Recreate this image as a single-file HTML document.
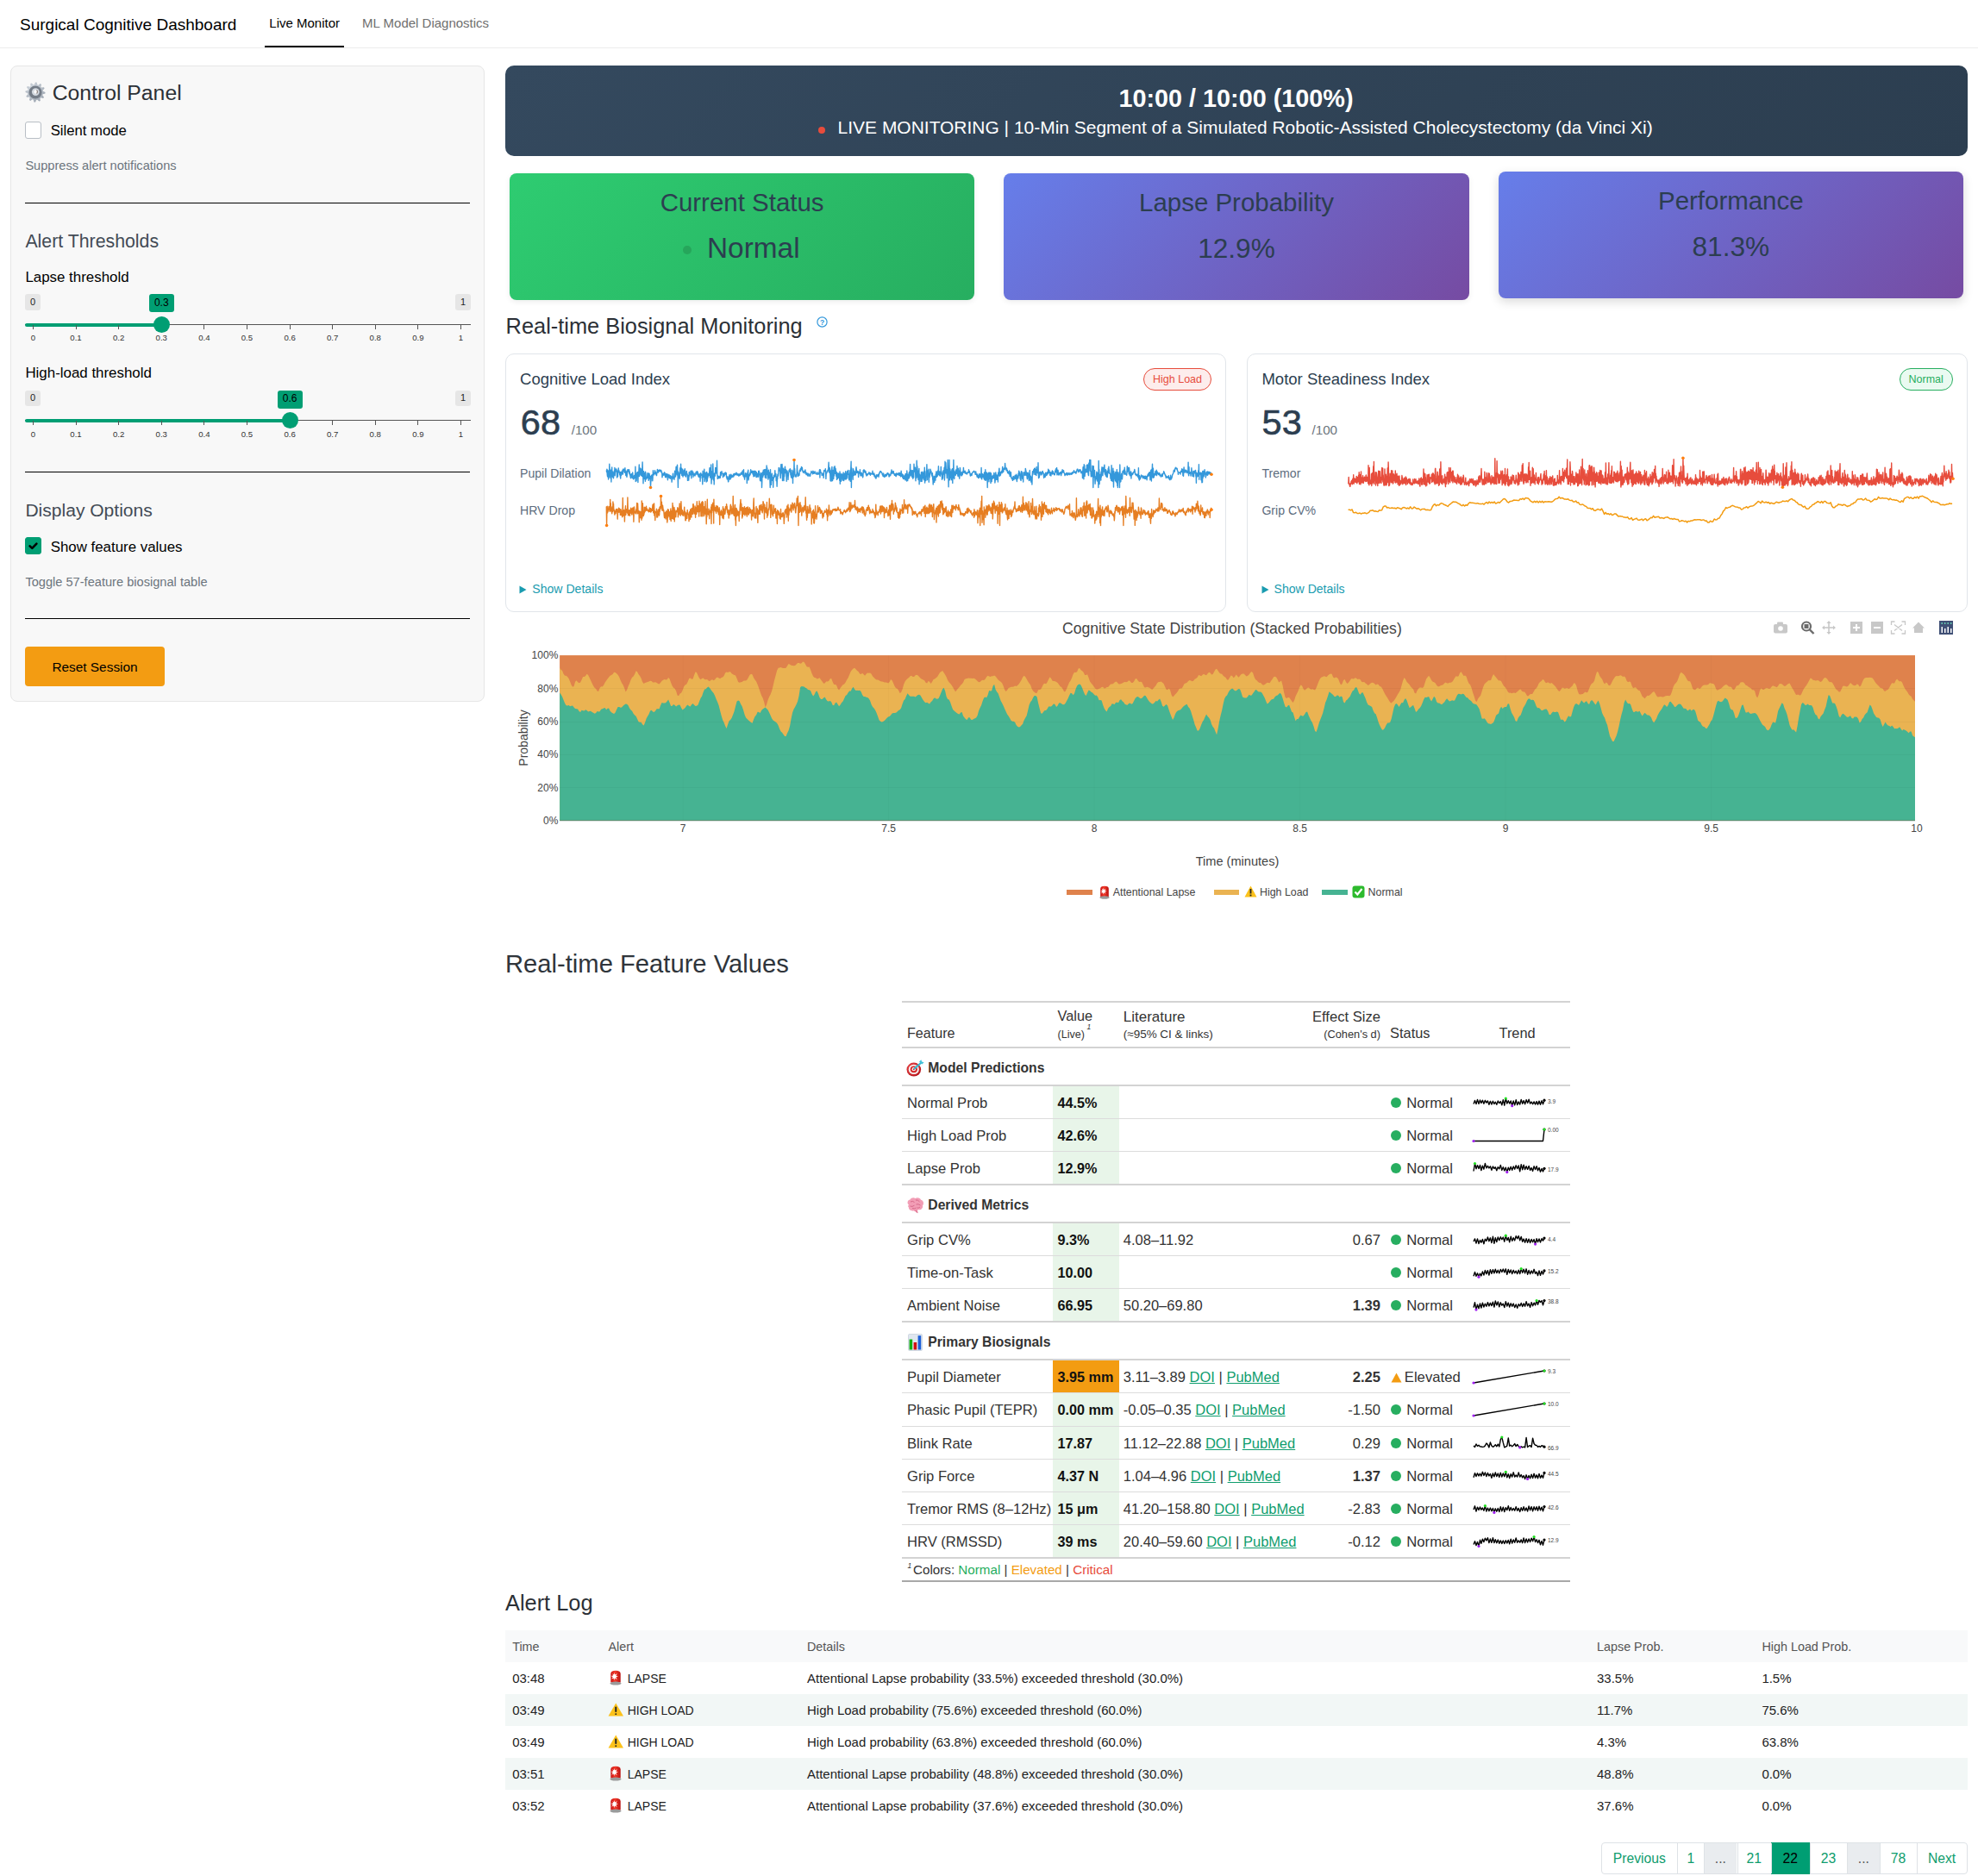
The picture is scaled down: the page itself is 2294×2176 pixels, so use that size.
<!DOCTYPE html><html><head><meta charset="utf-8"><title>Surgical Cognitive Dashboard</title>
<style>
html,body{margin:0;padding:0;background:#fff;}
body{width:2294px;height:2176px;position:relative;overflow:hidden;font-family:"Liberation Sans",sans-serif;}
.t{position:absolute;white-space:nowrap;line-height:1;}
.b{position:absolute;box-sizing:border-box;}
svg.b{overflow:visible;}
</style></head><body>
<div class="t" style="left:23.00px;top:19.00px;font-size:19px;color:#000;font-weight:400;">Surgical Cognitive Dashboard</div>
<div class="t" style="left:312.30px;top:19.00px;font-size:15px;color:#000;font-weight:400;">Live Monitor</div>
<div class="b" style="left:307.00px;top:53.00px;width:92.00px;height:2.00px;background:#000;"></div>
<div class="t" style="left:420.10px;top:19.00px;font-size:15px;color:#6f6f6f;font-weight:400;">ML Model Diagnostics</div>
<div class="b" style="left:0.00px;top:55.00px;width:2294.00px;height:1.00px;background:#ececec;"></div>
<div class="b" style="left:12.00px;top:76.00px;width:550.00px;height:738.00px;background:#f8f8f8;border:1px solid #e6e6e6;border-radius:8px;"></div>
<svg class="b" style="left:28.80px;top:95.00px;" width="24" height="24" viewBox="0 0 24 24"><defs><radialGradient id="gg" cx="40%" cy="35%" r="70%"><stop offset="0" stop-color="#dde3ea"/><stop offset="1" stop-color="#9aa3ae"/></radialGradient></defs><polygon points="23.50,12.00 23.40,13.50 20.69,14.33 20.31,15.44 21.96,17.75 21.12,19.00 18.36,18.36 17.48,19.14 17.75,21.96 16.40,22.62 14.33,20.69 13.17,20.92 12.00,23.50 10.50,23.40 9.67,20.69 8.56,20.31 6.25,21.96 5.00,21.12 5.64,18.36 4.86,17.48 2.04,17.75 1.38,16.40 3.31,14.33 3.08,13.17 0.50,12.00 0.60,10.50 3.31,9.67 3.69,8.56 2.04,6.25 2.88,5.00 5.64,5.64 6.52,4.86 6.25,2.04 7.60,1.38 9.67,3.31 10.83,3.08 12.00,0.50 13.50,0.60 14.33,3.31 15.44,3.69 17.75,2.04 19.00,2.88 18.36,5.64 19.14,6.52 21.96,6.25 22.62,7.60 20.69,9.67 20.92,10.83" fill="url(#gg)"/><circle cx="12" cy="12" r="7.6" fill="#747c87"/><circle cx="12.3" cy="11.6" r="4.4" fill="#d3d9e0"/><circle cx="12.5" cy="11.4" r="2.2" fill="#fafafa"/><path d="M13.8 9.5 q1.2 1.8 0 4" stroke="#5a4a44" stroke-width="0.9" fill="none"/></svg>
<div class="t" style="left:60.70px;top:96.00px;font-size:24.75px;color:#2b3036;font-weight:400;">Control Panel</div>
<div class="b" style="left:29.00px;top:141.00px;width:19.00px;height:20.00px;background:#fff;border:1px solid #b8bec5;border-radius:3px;"></div>
<div class="t" style="left:58.70px;top:144.00px;font-size:16.7px;color:#000;font-weight:400;">Silent mode</div>
<div class="t" style="left:29.40px;top:185.00px;font-size:14.6px;color:#6c757d;font-weight:400;">Suppress alert notifications</div>
<div class="b" style="left:29.00px;top:235.00px;width:516.00px;height:1.00px;background:#000;"></div>
<div class="t" style="left:29.40px;top:270.00px;font-size:21.3px;color:#434b55;font-weight:400;">Alert Thresholds</div>
<div class="t" style="left:29.40px;top:314.00px;font-size:16.9px;color:#000;font-weight:400;">Lapse threshold</div>
<div class="b" style="left:29.00px;top:341.20px;width:18.00px;height:18.60px;background:#e6e6e6;border-radius:3px;"></div>
<div class="t" style="left:-962.00px;width:2000px;text-align:center;top:345.00px;font-size:11px;color:#222;font-weight:400;">0</div>
<div class="b" style="left:528.00px;top:341.20px;width:17.50px;height:18.60px;background:#e6e6e6;border-radius:3px;"></div>
<div class="t" style="left:-463.00px;width:2000px;text-align:center;top:345.00px;font-size:11px;color:#222;font-weight:400;">1</div>
<div class="b" style="left:29.00px;top:376.00px;width:516.50px;height:1.00px;background:#555;"></div>
<div class="b" style="left:29.00px;top:374.80px;width:158.23px;height:3.80px;background:#009e73;border-radius:2px;"></div>
<div class="b" style="left:38.00px;top:377.00px;width:1.00px;height:5.00px;background:#555;"></div>
<div class="t" style="left:-961.60px;width:2000px;text-align:center;top:387.00px;font-size:9.6px;color:#333;font-weight:400;">0</div>
<div class="b" style="left:88.00px;top:377.00px;width:1.00px;height:5.00px;background:#555;"></div>
<div class="t" style="left:-911.99px;width:2000px;text-align:center;top:387.00px;font-size:9.6px;color:#333;font-weight:400;">0.1</div>
<div class="b" style="left:137.00px;top:377.00px;width:1.00px;height:5.00px;background:#555;"></div>
<div class="t" style="left:-862.38px;width:2000px;text-align:center;top:387.00px;font-size:9.6px;color:#333;font-weight:400;">0.2</div>
<div class="b" style="left:187.00px;top:377.00px;width:1.00px;height:5.00px;background:#555;"></div>
<div class="t" style="left:-812.77px;width:2000px;text-align:center;top:387.00px;font-size:9.6px;color:#333;font-weight:400;">0.3</div>
<div class="b" style="left:236.00px;top:377.00px;width:1.00px;height:5.00px;background:#555;"></div>
<div class="t" style="left:-763.16px;width:2000px;text-align:center;top:387.00px;font-size:9.6px;color:#333;font-weight:400;">0.4</div>
<div class="b" style="left:286.00px;top:377.00px;width:1.00px;height:5.00px;background:#555;"></div>
<div class="t" style="left:-713.55px;width:2000px;text-align:center;top:387.00px;font-size:9.6px;color:#333;font-weight:400;">0.5</div>
<div class="b" style="left:336.00px;top:377.00px;width:1.00px;height:5.00px;background:#555;"></div>
<div class="t" style="left:-663.94px;width:2000px;text-align:center;top:387.00px;font-size:9.6px;color:#333;font-weight:400;">0.6</div>
<div class="b" style="left:385.00px;top:377.00px;width:1.00px;height:5.00px;background:#555;"></div>
<div class="t" style="left:-614.33px;width:2000px;text-align:center;top:387.00px;font-size:9.6px;color:#333;font-weight:400;">0.7</div>
<div class="b" style="left:435.00px;top:377.00px;width:1.00px;height:5.00px;background:#555;"></div>
<div class="t" style="left:-564.72px;width:2000px;text-align:center;top:387.00px;font-size:9.6px;color:#333;font-weight:400;">0.8</div>
<div class="b" style="left:484.00px;top:377.00px;width:1.00px;height:5.00px;background:#555;"></div>
<div class="t" style="left:-515.11px;width:2000px;text-align:center;top:387.00px;font-size:9.6px;color:#333;font-weight:400;">0.9</div>
<div class="b" style="left:534.00px;top:377.00px;width:1.00px;height:5.00px;background:#555;"></div>
<div class="t" style="left:-465.50px;width:2000px;text-align:center;top:387.00px;font-size:9.6px;color:#333;font-weight:400;">1</div>
<div class="b" style="left:177.73px;top:366.90px;width:19px;height:19px;border-radius:50%;background:#009e73;"></div>
<div class="b" style="left:172.73px;top:341.20px;width:29.00px;height:21.00px;background:#009e73;border-radius:3px;"></div>
<div class="t" style="left:-812.77px;width:2000px;text-align:center;top:345.00px;font-size:12px;color:#000;font-weight:400;">0.3</div>
<div class="t" style="left:29.40px;top:425.00px;font-size:16.9px;color:#000;font-weight:400;">High-load threshold</div>
<div class="b" style="left:29.00px;top:452.50px;width:18.00px;height:18.60px;background:#e6e6e6;border-radius:3px;"></div>
<div class="t" style="left:-962.00px;width:2000px;text-align:center;top:456.00px;font-size:11px;color:#222;font-weight:400;">0</div>
<div class="b" style="left:528.00px;top:452.50px;width:17.50px;height:18.60px;background:#e6e6e6;border-radius:3px;"></div>
<div class="t" style="left:-463.00px;width:2000px;text-align:center;top:456.00px;font-size:11px;color:#222;font-weight:400;">1</div>
<div class="b" style="left:29.00px;top:487.00px;width:516.50px;height:1.00px;background:#555;"></div>
<div class="b" style="left:29.00px;top:486.10px;width:307.06px;height:3.80px;background:#009e73;border-radius:2px;"></div>
<div class="b" style="left:38.00px;top:488.00px;width:1.00px;height:5.00px;background:#555;"></div>
<div class="t" style="left:-961.60px;width:2000px;text-align:center;top:499.00px;font-size:9.6px;color:#333;font-weight:400;">0</div>
<div class="b" style="left:88.00px;top:488.00px;width:1.00px;height:5.00px;background:#555;"></div>
<div class="t" style="left:-911.99px;width:2000px;text-align:center;top:499.00px;font-size:9.6px;color:#333;font-weight:400;">0.1</div>
<div class="b" style="left:137.00px;top:488.00px;width:1.00px;height:5.00px;background:#555;"></div>
<div class="t" style="left:-862.38px;width:2000px;text-align:center;top:499.00px;font-size:9.6px;color:#333;font-weight:400;">0.2</div>
<div class="b" style="left:187.00px;top:488.00px;width:1.00px;height:5.00px;background:#555;"></div>
<div class="t" style="left:-812.77px;width:2000px;text-align:center;top:499.00px;font-size:9.6px;color:#333;font-weight:400;">0.3</div>
<div class="b" style="left:236.00px;top:488.00px;width:1.00px;height:5.00px;background:#555;"></div>
<div class="t" style="left:-763.16px;width:2000px;text-align:center;top:499.00px;font-size:9.6px;color:#333;font-weight:400;">0.4</div>
<div class="b" style="left:286.00px;top:488.00px;width:1.00px;height:5.00px;background:#555;"></div>
<div class="t" style="left:-713.55px;width:2000px;text-align:center;top:499.00px;font-size:9.6px;color:#333;font-weight:400;">0.5</div>
<div class="b" style="left:336.00px;top:488.00px;width:1.00px;height:5.00px;background:#555;"></div>
<div class="t" style="left:-663.94px;width:2000px;text-align:center;top:499.00px;font-size:9.6px;color:#333;font-weight:400;">0.6</div>
<div class="b" style="left:385.00px;top:488.00px;width:1.00px;height:5.00px;background:#555;"></div>
<div class="t" style="left:-614.33px;width:2000px;text-align:center;top:499.00px;font-size:9.6px;color:#333;font-weight:400;">0.7</div>
<div class="b" style="left:435.00px;top:488.00px;width:1.00px;height:5.00px;background:#555;"></div>
<div class="t" style="left:-564.72px;width:2000px;text-align:center;top:499.00px;font-size:9.6px;color:#333;font-weight:400;">0.8</div>
<div class="b" style="left:484.00px;top:488.00px;width:1.00px;height:5.00px;background:#555;"></div>
<div class="t" style="left:-515.11px;width:2000px;text-align:center;top:499.00px;font-size:9.6px;color:#333;font-weight:400;">0.9</div>
<div class="b" style="left:534.00px;top:488.00px;width:1.00px;height:5.00px;background:#555;"></div>
<div class="t" style="left:-465.50px;width:2000px;text-align:center;top:499.00px;font-size:9.6px;color:#333;font-weight:400;">1</div>
<div class="b" style="left:326.56px;top:478.20px;width:19px;height:19px;border-radius:50%;background:#009e73;"></div>
<div class="b" style="left:321.56px;top:452.50px;width:29.00px;height:21.00px;background:#009e73;border-radius:3px;"></div>
<div class="t" style="left:-663.94px;width:2000px;text-align:center;top:456.00px;font-size:12px;color:#000;font-weight:400;">0.6</div>
<div class="b" style="left:29.00px;top:547.00px;width:516.00px;height:1.00px;background:#000;"></div>
<div class="t" style="left:29.40px;top:581.00px;font-size:21.05px;color:#434b55;font-weight:400;">Display Options</div>
<div class="b" style="left:29.00px;top:623.00px;width:19.00px;height:20.00px;background:#009e73;border:1px solid #009e73;border-radius:3px;"></div>
<svg class="b" style="left:29.00px;top:623.00px;" width="19" height="20" viewBox="0 0 19 20"><path d="M5.6 10.4 L8.3 12.9 L13.4 7.6" fill="none" stroke="#000" stroke-width="2.6" stroke-linecap="round" stroke-linejoin="round"/></svg>
<div class="t" style="left:58.70px;top:627.00px;font-size:16.87px;color:#000;font-weight:400;">Show feature values</div>
<div class="t" style="left:29.40px;top:668.00px;font-size:14.62px;color:#6c757d;font-weight:400;">Toggle 57-feature biosignal table</div>
<div class="b" style="left:29.00px;top:717.00px;width:516.00px;height:1.00px;background:#000;"></div>
<div class="b" style="left:29.00px;top:750.30px;width:161.80px;height:46.10px;background:#f39c12;border-radius:4px;"></div>
<div class="t" style="left:-890.00px;width:2000px;text-align:center;top:766.00px;font-size:15.4px;color:#000;font-weight:400;">Reset Session</div>
<div class="b" style="left:586.00px;top:76.00px;width:1696.00px;height:105.00px;background:linear-gradient(135deg,#34495e 0%,#2c3e50 100%);border-radius:10px;"></div>
<div class="t" style="left:433.50px;width:2000px;text-align:center;top:100.00px;font-size:28.8px;color:#fff;font-weight:700;">10:00 / 10:00 (100%)</div>
<div class="b" style="left:949px;top:147px;width:8px;height:8px;border-radius:50%;background:#e74c3c;"></div>
<div class="t" style="left:971.60px;top:138.00px;font-size:20.97px;color:#fff;font-weight:400;">LIVE MONITORING | 10-Min Segment of a Simulated Robotic-Assisted Cholecystectomy (da Vinci Xi)</div>
<div class="b" style="left:591.00px;top:201.00px;width:539.30px;height:147.00px;background:linear-gradient(135deg,#2ecc71 0%,#27ae60 100%);border-radius:8px;box-shadow:0 2px 6px rgba(0,0,0,.08);"></div>
<div class="b" style="left:1164.30px;top:201.00px;width:539.40px;height:147.00px;background:linear-gradient(135deg,#667eea 0%,#764ba2 100%);border-radius:8px;box-shadow:0 2px 6px rgba(0,0,0,.08);"></div>
<div class="b" style="left:1737.70px;top:199.00px;width:539.30px;height:147.00px;background:linear-gradient(135deg,#667eea 0%,#764ba2 100%);border-radius:8px;box-shadow:0 4px 12px rgba(0,0,0,.15);"></div>
<div class="t" style="left:-139.40px;width:2000px;text-align:center;top:220.00px;font-size:29.46px;color:#2c3e50;font-weight:400;">Current Status</div>
<div class="b" style="left:792px;top:285px;width:9.8px;height:9.8px;border-radius:50%;background:#26a65b;"></div>
<div class="t" style="left:820.00px;top:271.00px;font-size:33.4px;color:#2c3e50;font-weight:400;">Normal</div>
<div class="t" style="left:434.00px;width:2000px;text-align:center;top:220.00px;font-size:29.46px;color:#2c3e50;font-weight:400;">Lapse Probability</div>
<div class="t" style="left:434.00px;width:2000px;text-align:center;top:273.00px;font-size:31.6px;color:#2c3e50;font-weight:400;">12.9%</div>
<div class="t" style="left:1007.30px;width:2000px;text-align:center;top:218.00px;font-size:29.46px;color:#2c3e50;font-weight:400;">Performance</div>
<div class="t" style="left:1007.30px;width:2000px;text-align:center;top:271.00px;font-size:31.6px;color:#2c3e50;font-weight:400;">81.3%</div>
<div class="t" style="left:586.60px;top:366.00px;font-size:25.39px;color:#2b3036;font-weight:400;">Real-time Biosignal Monitoring</div>
<svg class="b" style="left:946.50px;top:366.80px;" width="13" height="13" viewBox="0 0 13 13"><circle cx="6.5" cy="6.5" r="5.6" fill="none" stroke="#3498db" stroke-width="1.2"/><text x="6.5" y="9.6" font-size="8.5" text-anchor="middle" fill="#3498db" font-family="Liberation Sans" font-weight="700">?</text></svg>
<div class="b" style="left:586.00px;top:410.00px;width:836.00px;height:300.00px;background:#fff;border:1px solid #e1e5ea;border-radius:10px;"></div>
<div class="t" style="left:603.00px;top:431.00px;font-size:18.55px;color:#2c3e50;font-weight:400;">Cognitive Load Index</div>
<div class="b" style="left:1326.00px;top:427.00px;width:79.00px;height:26.00px;background:#fdedec;border:1px solid #e74c3c;border-radius:13px;"></div>
<div class="t" style="left:365.50px;width:2000px;text-align:center;top:434.00px;font-size:12.53px;color:#e74c3c;font-weight:400;">High Load</div>
<div class="t" style="left:603.80px;top:469.00px;font-size:41.5px;color:#2c3e50;font-weight:400;-webkit-text-stroke:0.6px #2c3e50;">68</div>
<div class="t" style="left:662.70px;top:491.00px;font-size:15.2px;color:#6c757d;font-weight:400;">/100</div>
<div class="t" style="left:603.00px;top:542.00px;font-size:14.12px;color:#5d6d7e;font-weight:400;">Pupil Dilation</div>
<div class="t" style="left:603.00px;top:585.00px;font-size:14.12px;color:#5d6d7e;font-weight:400;">HRV Drop</div>
<svg class="b" style="left:0.00px;top:0.00px;" width="1" height="1" viewBox="0 0 1 1"><path d="M703.0,546.3 L703.3,546.0 L703.6,547.3 L703.9,544.1 L704.2,549.7 L704.5,552.5 L704.8,545.5 L705.0,553.2 L705.3,546.6 L705.6,556.0 L705.9,546.3 L706.2,554.0 L706.5,551.2 L706.8,538.2 L707.1,545.8 L707.4,550.3 L707.7,551.9 L708.0,554.5 L708.3,545.3 L708.6,548.4 L708.9,559.0 L709.1,549.2 L709.4,544.8 L709.7,542.0 L710.0,550.9 L710.3,553.0 L710.6,547.1 L710.9,553.7 L711.2,551.9 L711.5,554.8 L711.8,551.3 L712.1,547.8 L712.4,546.0 L712.7,550.6 L712.9,542.5 L713.2,551.8 L713.5,544.2 L713.8,547.1 L714.1,544.3 L714.4,545.8 L714.7,543.9 L715.0,544.8 L715.3,548.5 L715.6,554.0 L715.9,549.3 L716.2,546.1 L716.5,552.8 L716.8,546.9 L717.0,546.2 L717.3,542.9 L717.6,547.9 L717.9,545.6 L718.2,547.8 L718.5,548.0 L718.8,550.9 L719.1,547.8 L719.4,553.0 L719.7,555.0 L720.0,549.7 L720.3,547.1 L720.6,551.3 L720.8,547.5 L721.1,550.0 L721.4,549.3 L721.7,548.0 L722.0,545.1 L722.3,550.1 L722.6,548.8 L722.9,544.0 L723.2,544.4 L723.5,546.4 L723.8,544.9 L724.1,546.9 L724.4,544.0 L724.7,548.4 L724.9,542.7 L725.2,548.5 L725.5,546.3 L725.8,551.5 L726.1,546.3 L726.4,548.6 L726.7,551.9 L727.0,553.3 L727.3,550.4 L727.6,547.6 L727.9,544.6 L728.2,545.2 L728.5,546.8 L728.8,547.1 L729.0,546.0 L729.3,544.6 L729.6,544.9 L729.9,549.6 L730.2,546.9 L730.5,551.0 L730.8,549.8 L731.1,553.0 L731.4,554.3 L731.7,554.7 L732.0,552.7 L732.3,549.6 L732.6,552.4 L732.8,549.7 L733.1,552.0 L733.4,554.5 L733.7,548.0 L734.0,553.8 L734.3,552.2 L734.6,555.9 L734.9,552.3 L735.2,555.2 L735.5,551.6 L735.8,554.7 L736.1,553.5 L736.4,550.8 L736.7,549.0 L736.9,541.2 L737.2,558.5 L737.5,555.0 L737.8,550.5 L738.1,557.8 L738.4,551.9 L738.7,548.2 L739.0,550.1 L739.3,548.7 L739.6,547.5 L739.9,559.6 L740.2,549.3 L740.5,552.2 L740.7,549.5 L741.0,544.5 L741.3,538.9 L741.6,552.6 L741.9,543.7 L742.2,542.9 L742.5,550.1 L742.8,543.7 L743.1,543.5 L743.4,551.2 L743.7,544.6 L744.0,547.4 L744.3,545.4 L744.6,552.6 L744.8,546.5 L745.1,535.9 L745.4,546.3 L745.7,546.2 L746.0,560.8 L746.3,549.3 L746.6,546.6 L746.9,552.9 L747.2,552.0 L747.5,555.5 L747.8,548.6 L748.1,550.6 L748.4,558.3 L748.6,547.3 L748.9,549.2 L749.2,553.6 L749.5,555.8 L749.8,553.7 L750.1,554.1 L750.4,554.5 L750.7,552.6 L751.0,549.0 L751.3,554.2 L751.6,548.6 L751.9,550.8 L752.2,557.3 L752.5,555.2 L752.7,550.0 L753.0,549.2 L753.3,551.7 L753.6,555.3 L753.9,556.0 L754.2,552.4 L754.5,565.5 L754.8,558.6 L755.1,557.7 L755.4,551.5 L755.7,553.2 L756.0,551.4 L756.3,550.8 L756.5,551.3 L756.8,557.8 L757.1,553.6 L757.4,545.8 L757.7,550.5 L758.0,549.8 L758.3,548.8 L758.6,550.8 L758.9,548.7 L759.2,547.7 L759.5,545.7 L759.8,547.2 L760.1,549.3 L760.4,549.1 L760.6,547.6 L760.9,550.6 L761.2,549.1 L761.5,551.6 L761.8,548.8 L762.1,547.9 L762.4,544.5 L762.7,545.6 L763.0,545.3 L763.3,548.1 L763.6,547.5 L763.9,546.6 L764.2,545.4 L764.5,545.5 L764.7,544.9 L765.0,545.5 L765.3,546.9 L765.6,545.5 L765.9,545.6 L766.2,545.3 L766.5,546.8 L766.8,545.6 L767.1,546.7 L767.4,548.6 L767.7,547.9 L768.0,553.7 L768.3,551.0 L768.5,550.7 L768.8,551.7 L769.1,549.4 L769.4,549.5 L769.7,549.7 L770.0,551.1 L770.3,548.4 L770.6,547.8 L770.9,549.8 L771.2,548.7 L771.5,553.2 L771.8,550.8 L772.1,552.5 L772.4,553.8 L772.6,551.4 L772.9,549.4 L773.2,552.8 L773.5,549.8 L773.8,550.9 L774.1,551.9 L774.4,556.8 L774.7,554.0 L775.0,550.3 L775.3,553.9 L775.6,553.8 L775.9,553.5 L776.2,550.9 L776.4,554.3 L776.7,552.8 L777.0,552.1 L777.3,555.3 L777.6,551.6 L777.9,552.2 L778.2,554.5 L778.5,554.8 L778.8,552.9 L779.1,559.1 L779.4,556.3 L779.7,552.7 L780.0,555.8 L780.3,550.9 L780.5,549.1 L780.8,554.6 L781.1,554.3 L781.4,553.1 L781.7,553.4 L782.0,556.3 L782.3,553.0 L782.6,546.2 L782.9,550.8 L783.2,547.1 L783.5,553.0 L783.8,547.9 L784.1,541.4 L784.3,544.5 L784.6,541.4 L784.9,547.0 L785.2,550.9 L785.5,539.2 L785.8,545.6 L786.1,552.0 L786.4,565.4 L786.7,547.3 L787.0,553.6 L787.3,550.2 L787.6,549.5 L787.9,548.6 L788.2,555.2 L788.4,551.2 L788.7,543.0 L789.0,543.6 L789.3,546.4 L789.6,538.1 L789.9,549.0 L790.2,549.6 L790.5,543.1 L790.8,551.6 L791.1,549.0 L791.4,545.0 L791.7,544.2 L792.0,553.1 L792.2,548.0 L792.5,546.4 L792.8,551.5 L793.1,549.8 L793.4,545.5 L793.7,551.0 L794.0,550.5 L794.3,543.7 L794.6,546.9 L794.9,552.2 L795.2,552.8 L795.5,553.0 L795.8,549.0 L796.1,548.8 L796.3,546.4 L796.6,550.3 L796.9,549.5 L797.2,551.0 L797.5,557.4 L797.8,551.2 L798.1,551.6 L798.4,555.1 L798.7,557.1 L799.0,553.3 L799.3,547.5 L799.6,552.1 L799.9,549.5 L800.2,551.0 L800.4,549.9 L800.7,550.3 L801.0,546.3 L801.3,548.7 L801.6,549.3 L801.9,554.8 L802.2,548.5 L802.5,545.9 L802.8,548.6 L803.1,547.4 L803.4,550.4 L803.7,547.2 L804.0,553.2 L804.2,550.5 L804.5,551.5 L804.8,551.3 L805.1,549.2 L805.4,551.5 L805.7,551.5 L806.0,552.0 L806.3,550.5 L806.6,549.4 L806.9,549.1 L807.2,547.5 L807.5,548.1 L807.8,548.3 L808.1,550.6 L808.3,546.8 L808.6,548.5 L808.9,547.0 L809.2,547.8 L809.5,548.7 L809.8,551.4 L810.1,552.9 L810.4,552.0 L810.7,553.4 L811.0,549.9 L811.3,552.7 L811.6,550.1 L811.9,551.1 L812.1,558.2 L812.4,549.8 L812.7,548.7 L813.0,549.3 L813.3,550.7 L813.6,551.6 L813.9,550.7 L814.2,554.7 L814.5,550.2 L814.8,561.8 L815.1,546.2 L815.4,551.7 L815.7,553.4 L816.0,548.9 L816.2,550.6 L816.5,553.2 L816.8,544.3 L817.1,558.5 L817.4,556.6 L817.7,553.5 L818.0,548.2 L818.3,553.9 L818.6,551.8 L818.9,552.7 L819.2,559.0 L819.5,547.4 L819.8,547.7 L820.0,551.6 L820.3,558.0 L820.6,550.3 L820.9,554.3 L821.2,549.3 L821.5,552.1 L821.8,550.4 L822.1,550.9 L822.4,551.5 L822.7,547.7 L823.0,542.7 L823.3,542.9 L823.6,554.1 L823.9,551.3 L824.1,551.9 L824.4,544.1 L824.7,538.9 L825.0,561.1 L825.3,553.9 L825.6,549.7 L825.9,556.0 L826.2,546.5 L826.5,550.8 L826.8,537.9 L827.1,547.2 L827.4,554.4 L827.7,557.3 L827.9,549.8 L828.2,561.9 L828.5,549.5 L828.8,548.9 L829.1,551.9 L829.4,552.1 L829.7,542.5 L830.0,549.5 L830.3,549.0 L830.6,546.8 L830.9,542.4 L831.2,547.5 L831.5,534.2 L831.8,550.7 L832.0,552.0 L832.3,555.4 L832.6,552.0 L832.9,553.9 L833.2,552.4 L833.5,554.6 L833.8,552.7 L834.1,554.6 L834.4,552.4 L834.7,553.9 L835.0,553.3 L835.3,554.2 L835.6,547.6 L835.9,548.9 L836.1,551.5 L836.4,550.2 L836.7,548.8 L837.0,546.6 L837.3,548.2 L837.6,549.0 L837.9,549.2 L838.2,550.1 L838.5,553.6 L838.8,549.9 L839.1,549.8 L839.4,549.1 L839.7,550.1 L839.9,552.2 L840.2,550.2 L840.5,551.1 L840.8,548.5 L841.1,548.4 L841.4,548.1 L841.7,548.8 L842.0,550.5 L842.3,548.7 L842.6,553.8 L842.9,552.9 L843.2,555.8 L843.5,553.0 L843.8,555.1 L844.0,554.6 L844.3,555.6 L844.6,558.9 L844.9,558.4 L845.2,552.5 L845.5,554.8 L845.8,552.5 L846.1,550.5 L846.4,555.7 L846.7,556.2 L847.0,551.7 L847.3,555.1 L847.6,552.6 L847.8,550.2 L848.1,552.6 L848.4,553.8 L848.7,551.4 L849.0,552.5 L849.3,552.5 L849.6,552.0 L849.9,553.4 L850.2,552.4 L850.5,549.9 L850.8,552.9 L851.1,550.9 L851.4,550.7 L851.7,549.4 L851.9,550.7 L852.2,551.0 L852.5,549.3 L852.8,550.7 L853.1,549.9 L853.4,549.1 L853.7,550.2 L854.0,548.1 L854.3,550.1 L854.6,548.9 L854.9,551.2 L855.2,549.8 L855.5,550.7 L855.7,550.4 L856.0,549.9 L856.3,551.4 L856.6,552.0 L856.9,551.4 L857.2,549.8 L857.5,551.7 L857.8,550.6 L858.1,551.2 L858.4,551.2 L858.7,550.4 L859.0,549.3 L859.3,548.6 L859.6,549.4 L859.8,548.3 L860.1,550.5 L860.4,548.6 L860.7,548.8 L861.0,546.8 L861.3,545.9 L861.6,550.2 L861.9,551.5 L862.2,552.6 L862.5,544.7 L862.8,552.2 L863.1,554.0 L863.4,552.4 L863.6,556.1 L863.9,551.9 L864.2,551.0 L864.5,548.7 L864.8,552.9 L865.1,551.1 L865.4,549.9 L865.7,549.2 L866.0,549.8 L866.3,560.5 L866.6,553.5 L866.9,550.7 L867.2,547.0 L867.5,550.1 L867.7,545.2 L868.0,556.9 L868.3,555.4 L868.6,550.9 L868.9,551.6 L869.2,550.1 L869.5,551.8 L869.8,548.6 L870.1,550.5 L870.4,547.9 L870.7,544.7 L871.0,548.5 L871.3,547.4 L871.6,546.6 L871.8,546.5 L872.1,548.5 L872.4,547.9 L872.7,546.2 L873.0,548.9 L873.3,550.3 L873.6,546.8 L873.9,552.8 L874.2,551.6 L874.5,550.8 L874.8,546.1 L875.1,547.6 L875.4,552.3 L875.6,547.3 L875.9,546.4 L876.2,546.6 L876.5,550.3 L876.8,550.1 L877.1,553.5 L877.4,547.7 L877.7,550.5 L878.0,553.4 L878.3,551.0 L878.6,551.4 L878.9,549.3 L879.2,552.0 L879.5,553.0 L879.7,546.5 L880.0,548.9 L880.3,546.1 L880.6,550.6 L880.9,548.2 L881.2,552.5 L881.5,557.2 L881.8,550.7 L882.1,557.9 L882.4,554.7 L882.7,548.7 L883.0,551.5 L883.3,551.4 L883.5,565.5 L883.8,557.6 L884.1,549.1 L884.4,547.8 L884.7,553.3 L885.0,551.1 L885.3,545.1 L885.6,551.0 L885.9,546.8 L886.2,550.3 L886.5,544.6 L886.8,547.7 L887.1,549.7 L887.4,554.0 L887.6,544.5 L887.9,554.1 L888.2,548.1 L888.5,550.1 L888.8,554.8 L889.1,540.0 L889.4,545.8 L889.7,542.6 L890.0,550.6 L890.3,546.2 L890.6,550.3 L890.9,556.1 L891.2,548.4 L891.4,545.1 L891.7,554.3 L892.0,547.6 L892.3,554.1 L892.6,552.3 L892.9,554.5 L893.2,565.5 L893.5,544.8 L893.8,555.2 L894.1,554.0 L894.4,562.4 L894.7,551.9 L895.0,551.6 L895.3,549.1 L895.5,552.6 L895.8,557.4 L896.1,555.5 L896.4,553.6 L896.7,565.3 L897.0,554.0 L897.3,555.3 L897.6,551.2 L897.9,552.0 L898.2,553.2 L898.5,552.6 L898.8,545.6 L899.1,551.3 L899.3,551.5 L899.6,552.1 L899.9,549.7 L900.2,557.6 L900.5,557.7 L900.8,553.3 L901.1,564.3 L901.4,555.2 L901.7,555.6 L902.0,550.2 L902.3,550.3 L902.6,552.0 L902.9,546.7 L903.2,542.5 L903.4,544.2 L903.7,542.8 L904.0,542.9 L904.3,546.3 L904.6,545.4 L904.9,549.8 L905.2,554.6 L905.5,550.6 L905.8,538.7 L906.1,545.1 L906.4,548.8 L906.7,541.7 L907.0,538.5 L907.3,544.3 L907.5,557.6 L907.8,547.6 L908.1,555.1 L908.4,543.2 L908.7,554.0 L909.0,557.6 L909.3,544.6 L909.6,552.8 L909.9,548.8 L910.2,542.8 L910.5,541.2 L910.8,548.5 L911.1,546.9 L911.3,544.5 L911.6,545.3 L911.9,549.2 L912.2,558.2 L912.5,546.8 L912.8,546.1 L913.1,546.8 L913.4,550.6 L913.7,551.0 L914.0,556.4 L914.3,551.3 L914.6,548.4 L914.9,547.4 L915.2,545.3 L915.4,547.0 L915.7,547.1 L916.0,544.9 L916.3,543.7 L916.6,544.4 L916.9,551.0 L917.2,545.5 L917.5,553.8 L917.8,549.7 L918.1,549.0 L918.4,548.9 L918.7,554.6 L919.0,545.3 L919.2,548.8 L919.5,560.5 L919.8,546.9 L920.1,551.7 L920.4,553.0 L920.7,552.8 L921.0,533.5 L921.3,548.1 L921.6,543.6 L921.9,550.4 L922.2,550.9 L922.5,552.8 L922.8,551.6 L923.1,552.2 L923.3,553.0 L923.6,550.3 L923.9,552.2 L924.2,547.6 L924.5,539.6 L924.8,548.4 L925.1,547.3 L925.4,549.1 L925.7,552.5 L926.0,550.1 L926.3,550.7 L926.6,549.5 L926.9,551.4 L927.1,550.0 L927.4,545.5 L927.7,547.0 L928.0,544.9 L928.3,543.6 L928.6,546.3 L928.9,545.0 L929.2,543.2 L929.5,541.4 L929.8,543.2 L930.1,544.4 L930.4,542.4 L930.7,546.3 L931.0,545.9 L931.2,546.9 L931.5,548.2 L931.8,547.3 L932.1,547.0 L932.4,547.1 L932.7,546.5 L933.0,547.1 L933.3,549.0 L933.6,546.7 L933.9,544.9 L934.2,548.1 L934.5,547.5 L934.8,548.4 L935.0,550.5 L935.3,548.5 L935.6,548.7 L935.9,550.5 L936.2,549.0 L936.5,551.4 L936.8,550.6 L937.1,552.2 L937.4,550.0 L937.7,549.2 L938.0,550.5 L938.3,551.1 L938.6,550.9 L938.9,550.9 L939.1,552.3 L939.4,550.5 L939.7,552.0 L940.0,549.1 L940.3,549.0 L940.6,548.2 L940.9,546.5 L941.2,548.0 L941.5,547.6 L941.8,547.7 L942.1,548.6 L942.4,549.8 L942.7,548.2 L942.9,546.3 L943.2,546.9 L943.5,548.1 L943.8,549.3 L944.1,548.8 L944.4,547.3 L944.7,548.3 L945.0,548.9 L945.3,547.0 L945.6,548.8 L945.9,548.8 L946.2,549.5 L946.5,549.7 L946.8,549.8 L947.0,550.2 L947.3,549.8 L947.6,547.8 L947.9,549.9 L948.2,549.9 L948.5,549.1 L948.8,550.2 L949.1,549.4 L949.4,549.9 L949.7,548.3 L950.0,548.0 L950.3,546.2 L950.6,544.6 L950.9,554.1 L951.1,545.1 L951.4,545.0 L951.7,546.7 L952.0,547.8 L952.3,548.3 L952.6,548.4 L952.9,548.5 L953.2,551.5 L953.5,551.2 L953.8,550.4 L954.1,551.0 L954.4,549.4 L954.7,549.9 L954.9,548.8 L955.2,554.4 L955.5,546.3 L955.8,545.4 L956.1,546.1 L956.4,546.5 L956.7,546.1 L957.0,545.9 L957.3,543.8 L957.6,549.4 L957.9,555.4 L958.2,549.0 L958.5,548.7 L958.8,548.8 L959.0,548.3 L959.3,546.2 L959.6,546.3 L959.9,546.8 L960.2,545.9 L960.5,544.5 L960.8,542.6 L961.1,536.3 L961.4,544.4 L961.7,548.1 L962.0,545.4 L962.3,542.6 L962.6,545.7 L962.8,551.0 L963.1,557.6 L963.4,549.4 L963.7,546.0 L964.0,558.2 L964.3,546.3 L964.6,544.1 L964.9,541.5 L965.2,553.9 L965.5,557.6 L965.8,550.6 L966.1,545.4 L966.4,547.7 L966.7,555.5 L966.9,552.7 L967.2,542.0 L967.5,551.8 L967.8,544.8 L968.1,540.8 L968.4,549.4 L968.7,548.8 L969.0,543.2 L969.3,545.6 L969.6,549.4 L969.9,552.6 L970.2,547.5 L970.5,556.4 L970.7,548.5 L971.0,549.1 L971.3,555.2 L971.6,551.2 L971.9,549.2 L972.2,549.0 L972.5,552.5 L972.8,554.3 L973.1,549.7 L973.4,551.8 L973.7,557.3 L974.0,546.9 L974.3,561.3 L974.6,548.9 L974.8,551.6 L975.1,550.3 L975.4,558.2 L975.7,554.3 L976.0,554.7 L976.3,549.6 L976.6,550.8 L976.9,551.4 L977.2,557.1 L977.5,555.2 L977.8,554.3 L978.1,548.0 L978.4,550.8 L978.6,557.6 L978.9,551.6 L979.2,555.5 L979.5,549.3 L979.8,555.6 L980.1,556.0 L980.4,550.8 L980.7,546.7 L981.0,551.6 L981.3,555.9 L981.6,550.5 L981.9,548.6 L982.2,554.9 L982.5,546.8 L982.7,546.7 L983.0,550.2 L983.3,550.2 L983.6,545.4 L983.9,545.8 L984.2,555.0 L984.5,553.1 L984.8,556.9 L985.1,553.3 L985.4,549.6 L985.7,549.4 L986.0,545.4 L986.3,558.4 L986.6,547.1 L986.8,542.8 L987.1,535.3 L987.4,565.5 L987.7,542.7 L988.0,549.2 L988.3,548.3 L988.6,548.9 L988.9,549.6 L989.2,556.3 L989.5,543.8 L989.8,545.1 L990.1,546.1 L990.4,551.3 L990.6,547.3 L990.9,546.6 L991.2,547.3 L991.5,550.6 L991.8,548.7 L992.1,551.0 L992.4,550.3 L992.7,544.3 L993.0,541.7 L993.3,544.4 L993.6,548.2 L993.9,548.5 L994.2,548.0 L994.5,547.3 L994.7,546.5 L995.0,548.4 L995.3,547.0 L995.6,553.4 L995.9,548.2 L996.2,547.5 L996.5,547.8 L996.8,547.6 L997.1,549.1 L997.4,544.8 L997.7,549.0 L998.0,551.6 L998.3,551.8 L998.5,549.0 L998.8,548.2 L999.1,551.7 L999.4,548.8 L999.7,550.5 L1000.0,549.9 L1000.3,551.6 L1000.6,553.8 L1000.9,552.9 L1001.2,545.5 L1001.5,548.1 L1001.8,544.9 L1002.1,547.0 L1002.4,545.2 L1002.6,546.7 L1002.9,546.7 L1003.2,548.2 L1003.5,546.2 L1003.8,546.5 L1004.1,547.6 L1004.4,550.6 L1004.7,549.6 L1005.0,552.0 L1005.3,551.2 L1005.6,549.8 L1005.9,551.2 L1006.2,550.6 L1006.4,550.2 L1006.7,549.7 L1007.0,549.5 L1007.3,549.3 L1007.6,549.3 L1007.9,547.6 L1008.2,550.1 L1008.5,550.1 L1008.8,548.7 L1009.1,549.8 L1009.4,551.2 L1009.7,548.8 L1010.0,550.2 L1010.3,549.7 L1010.5,549.9 L1010.8,549.9 L1011.1,549.1 L1011.4,549.8 L1011.7,549.3 L1012.0,546.3 L1012.3,550.3 L1012.6,548.9 L1012.9,549.3 L1013.2,550.7 L1013.5,550.5 L1013.8,549.0 L1014.1,552.7 L1014.3,550.8 L1014.6,551.5 L1014.9,552.5 L1015.2,553.6 L1015.5,554.7 L1015.8,552.9 L1016.1,554.9 L1016.4,550.8 L1016.7,551.4 L1017.0,551.4 L1017.3,552.7 L1017.6,551.1 L1017.9,551.0 L1018.2,550.2 L1018.4,551.8 L1018.7,550.9 L1019.0,553.2 L1019.3,551.1 L1019.6,550.3 L1019.9,548.3 L1020.2,548.7 L1020.5,547.3 L1020.8,546.7 L1021.1,546.5 L1021.4,547.2 L1021.7,546.8 L1022.0,548.0 L1022.3,548.3 L1022.5,547.9 L1022.8,548.3 L1023.1,549.7 L1023.4,550.7 L1023.7,550.9 L1024.0,552.2 L1024.3,549.5 L1024.6,549.0 L1024.9,552.8 L1025.2,552.4 L1025.5,551.7 L1025.8,553.3 L1026.1,550.9 L1026.3,552.8 L1026.6,550.4 L1026.9,550.3 L1027.2,552.4 L1027.5,551.7 L1027.8,551.4 L1028.1,550.3 L1028.4,551.9 L1028.7,549.1 L1029.0,549.0 L1029.3,548.6 L1029.6,550.0 L1029.9,549.3 L1030.2,549.1 L1030.4,549.8 L1030.7,550.2 L1031.0,552.9 L1031.3,550.2 L1031.6,552.7 L1031.9,550.5 L1032.2,550.9 L1032.5,550.3 L1032.8,551.5 L1033.1,549.7 L1033.4,547.6 L1033.7,547.9 L1034.0,544.9 L1034.2,546.4 L1034.5,549.0 L1034.8,549.5 L1035.1,547.1 L1035.4,548.2 L1035.7,547.8 L1036.0,546.4 L1036.3,546.8 L1036.6,549.4 L1036.9,550.0 L1037.2,549.5 L1037.5,551.4 L1037.8,550.5 L1038.1,549.7 L1038.3,550.8 L1038.6,551.5 L1038.9,552.4 L1039.2,552.5 L1039.5,548.9 L1039.8,549.8 L1040.1,551.0 L1040.4,549.6 L1040.7,550.0 L1041.0,549.0 L1041.3,549.3 L1041.6,550.2 L1041.9,549.9 L1042.1,550.4 L1042.4,551.3 L1042.7,548.4 L1043.0,549.8 L1043.3,549.7 L1043.6,551.5 L1043.9,548.6 L1044.2,549.6 L1044.5,552.8 L1044.8,552.9 L1045.1,546.2 L1045.4,548.6 L1045.7,552.4 L1046.0,551.1 L1046.2,550.4 L1046.5,550.1 L1046.8,554.1 L1047.1,550.5 L1047.4,551.7 L1047.7,555.5 L1048.0,552.1 L1048.3,554.3 L1048.6,553.7 L1048.9,555.6 L1049.2,551.2 L1049.5,555.4 L1049.8,555.3 L1050.0,556.9 L1050.3,549.4 L1050.6,550.1 L1050.9,550.0 L1051.2,549.6 L1051.5,558.1 L1051.8,546.0 L1052.1,549.4 L1052.4,552.7 L1052.7,557.6 L1053.0,550.7 L1053.3,552.4 L1053.6,554.0 L1053.9,555.1 L1054.1,548.4 L1054.4,554.4 L1054.7,547.3 L1055.0,553.0 L1055.3,546.3 L1055.6,538.4 L1055.9,551.6 L1056.2,549.1 L1056.5,550.9 L1056.8,546.3 L1057.1,545.4 L1057.4,551.8 L1057.7,553.4 L1058.0,550.1 L1058.2,551.3 L1058.5,545.7 L1058.8,555.3 L1059.1,546.9 L1059.4,549.4 L1059.7,553.7 L1060.0,538.2 L1060.3,545.1 L1060.6,542.3 L1060.9,546.1 L1061.2,547.2 L1061.5,542.1 L1061.8,551.7 L1062.0,557.7 L1062.3,545.5 L1062.6,549.2 L1062.9,554.5 L1063.2,534.2 L1063.5,542.4 L1063.8,540.6 L1064.1,546.2 L1064.4,553.6 L1064.7,546.5 L1065.0,556.5 L1065.3,545.9 L1065.6,548.5 L1065.9,543.5 L1066.1,561.7 L1066.4,551.8 L1066.7,550.2 L1067.0,553.4 L1067.3,551.3 L1067.6,552.4 L1067.9,558.5 L1068.2,555.9 L1068.5,547.6 L1068.8,550.0 L1069.1,558.4 L1069.4,552.9 L1069.7,547.3 L1069.9,550.7 L1070.2,548.1 L1070.5,554.4 L1070.8,549.1 L1071.1,556.0 L1071.4,552.1 L1071.7,546.8 L1072.0,557.1 L1072.3,542.2 L1072.6,560.1 L1072.9,554.2 L1073.2,552.9 L1073.5,554.5 L1073.8,557.5 L1074.0,548.5 L1074.3,546.1 L1074.6,548.6 L1074.9,538.8 L1075.2,550.7 L1075.5,556.6 L1075.8,551.0 L1076.1,548.8 L1076.4,545.8 L1076.7,551.4 L1077.0,544.1 L1077.3,559.3 L1077.6,552.3 L1077.8,553.1 L1078.1,553.4 L1078.4,548.7 L1078.7,548.6 L1079.0,544.1 L1079.3,546.1 L1079.6,546.4 L1079.9,546.5 L1080.2,549.9 L1080.5,551.1 L1080.8,551.0 L1081.1,552.5 L1081.4,548.8 L1081.7,556.1 L1081.9,554.5 L1082.2,562.0 L1082.5,554.2 L1082.8,559.8 L1083.1,552.3 L1083.4,556.6 L1083.7,559.4 L1084.0,553.4 L1084.3,552.7 L1084.6,555.7 L1084.9,557.1 L1085.2,550.3 L1085.5,549.5 L1085.7,548.4 L1086.0,546.7 L1086.3,553.4 L1086.6,548.3 L1086.9,549.5 L1087.2,552.3 L1087.5,548.4 L1087.8,545.8 L1088.1,550.3 L1088.4,540.7 L1088.7,550.8 L1089.0,546.5 L1089.3,547.0 L1089.6,549.8 L1089.8,551.6 L1090.1,547.3 L1090.4,552.3 L1090.7,548.9 L1091.0,549.9 L1091.3,541.4 L1091.6,549.0 L1091.9,546.9 L1092.2,548.8 L1092.5,556.2 L1092.8,554.7 L1093.1,551.7 L1093.4,554.9 L1093.7,548.5 L1093.9,546.6 L1094.2,545.8 L1094.5,550.1 L1094.8,550.2 L1095.1,542.5 L1095.4,557.0 L1095.7,551.1 L1096.0,535.3 L1096.3,540.5 L1096.6,548.8 L1096.9,536.8 L1097.2,543.4 L1097.5,549.0 L1097.7,547.8 L1098.0,548.5 L1098.3,554.6 L1098.6,544.5 L1098.9,548.3 L1099.2,533.5 L1099.5,547.4 L1099.8,547.5 L1100.1,564.7 L1100.4,543.2 L1100.7,546.9 L1101.0,533.5 L1101.3,556.9 L1101.6,545.1 L1101.8,543.9 L1102.1,547.2 L1102.4,546.8 L1102.7,554.6 L1103.0,550.3 L1103.3,556.7 L1103.6,549.2 L1103.9,544.7 L1104.2,549.3 L1104.5,543.6 L1104.8,560.4 L1105.1,546.1 L1105.4,554.4 L1105.6,548.8 L1105.9,533.5 L1106.2,552.7 L1106.5,546.0 L1106.8,555.6 L1107.1,546.9 L1107.4,550.7 L1107.7,547.6 L1108.0,550.0 L1108.3,551.2 L1108.6,545.0 L1108.9,548.3 L1109.2,548.3 L1109.5,547.4 L1109.7,549.5 L1110.0,540.5 L1110.3,549.9 L1110.6,546.5 L1110.9,552.1 L1111.2,543.2 L1111.5,545.3 L1111.8,546.4 L1112.1,552.9 L1112.4,549.5 L1112.7,555.1 L1113.0,551.2 L1113.3,542.5 L1113.5,542.9 L1113.8,546.5 L1114.1,550.7 L1114.4,549.5 L1114.7,548.0 L1115.0,551.9 L1115.3,551.8 L1115.6,547.9 L1115.9,550.7 L1116.2,550.8 L1116.5,547.0 L1116.8,548.1 L1117.1,548.1 L1117.4,542.4 L1117.6,545.6 L1117.9,548.2 L1118.2,548.1 L1118.5,547.9 L1118.8,547.3 L1119.1,546.1 L1119.4,549.1 L1119.7,547.3 L1120.0,547.5 L1120.3,549.2 L1120.6,549.3 L1120.9,549.2 L1121.2,549.0 L1121.4,550.0 L1121.7,549.2 L1122.0,548.2 L1122.3,547.8 L1122.6,548.0 L1122.9,548.4 L1123.2,548.3 L1123.5,544.7 L1123.8,547.0 L1124.1,547.4 L1124.4,546.7 L1124.7,548.3 L1125.0,549.2 L1125.3,551.8 L1125.5,552.0 L1125.8,551.6 L1126.1,551.5 L1126.4,549.6 L1126.7,550.8 L1127.0,551.5 L1127.3,549.3 L1127.6,548.6 L1127.9,548.0 L1128.2,547.3 L1128.5,547.4 L1128.8,547.5 L1129.1,547.0 L1129.4,547.6 L1129.6,546.3 L1129.9,546.9 L1130.2,547.4 L1130.5,547.4 L1130.8,547.3 L1131.1,550.3 L1131.4,548.6 L1131.7,546.9 L1132.0,549.4 L1132.3,549.7 L1132.6,551.0 L1132.9,551.5 L1133.2,553.2 L1133.4,549.9 L1133.7,550.6 L1134.0,552.6 L1134.3,551.4 L1134.6,554.5 L1134.9,551.6 L1135.2,554.3 L1135.5,551.6 L1135.8,549.5 L1136.1,553.1 L1136.4,552.6 L1136.7,553.2 L1137.0,550.2 L1137.3,554.0 L1137.5,551.6 L1137.8,552.9 L1138.1,542.5 L1138.4,555.6 L1138.7,555.8 L1139.0,552.3 L1139.3,551.4 L1139.6,549.6 L1139.9,550.6 L1140.2,553.4 L1140.5,552.8 L1140.8,550.5 L1141.1,555.2 L1141.3,550.7 L1141.6,547.9 L1141.9,556.6 L1142.2,552.5 L1142.5,555.4 L1142.8,544.7 L1143.1,557.4 L1143.4,556.7 L1143.7,555.6 L1144.0,547.9 L1144.3,548.3 L1144.6,551.2 L1144.9,550.8 L1145.2,565.5 L1145.4,549.6 L1145.7,556.3 L1146.0,555.1 L1146.3,548.1 L1146.6,551.7 L1146.9,558.7 L1147.2,548.4 L1147.5,555.4 L1147.8,551.7 L1148.1,548.0 L1148.4,551.9 L1148.7,551.6 L1149.0,560.6 L1149.2,548.8 L1149.5,549.2 L1149.8,554.1 L1150.1,558.6 L1150.4,552.3 L1150.7,553.2 L1151.0,555.3 L1151.3,553.0 L1151.6,553.2 L1151.9,551.2 L1152.2,552.6 L1152.5,554.6 L1152.8,548.5 L1153.1,548.9 L1153.3,551.8 L1153.6,554.0 L1153.9,560.0 L1154.2,557.5 L1154.5,555.8 L1154.8,547.9 L1155.1,550.7 L1155.4,556.3 L1155.7,552.3 L1156.0,551.2 L1156.3,556.1 L1156.6,556.3 L1156.9,554.3 L1157.1,550.7 L1157.4,559.0 L1157.7,548.2 L1158.0,552.1 L1158.3,549.7 L1158.6,545.5 L1158.9,543.1 L1159.2,550.1 L1159.5,552.1 L1159.8,547.8 L1160.1,549.4 L1160.4,551.1 L1160.7,547.6 L1161.0,548.3 L1161.2,548.1 L1161.5,546.5 L1161.8,548.7 L1162.1,548.8 L1162.4,545.7 L1162.7,541.4 L1163.0,545.7 L1163.3,547.5 L1163.6,547.5 L1163.9,546.2 L1164.2,543.7 L1164.5,543.1 L1164.8,544.0 L1165.1,543.3 L1165.3,544.4 L1165.6,537.4 L1165.9,541.0 L1166.2,543.5 L1166.5,543.3 L1166.8,543.7 L1167.1,545.8 L1167.4,542.9 L1167.7,544.5 L1168.0,546.1 L1168.3,545.4 L1168.6,548.6 L1168.9,547.5 L1169.1,546.9 L1169.4,547.9 L1169.7,549.1 L1170.0,547.9 L1170.3,549.8 L1170.6,546.0 L1170.9,546.5 L1171.2,552.5 L1171.5,551.0 L1171.8,548.7 L1172.1,551.2 L1172.4,547.8 L1172.7,553.8 L1173.0,554.5 L1173.2,554.0 L1173.5,555.6 L1173.8,555.7 L1174.1,555.2 L1174.4,557.3 L1174.7,554.6 L1175.0,552.9 L1175.3,552.6 L1175.6,553.4 L1175.9,556.5 L1176.2,553.1 L1176.5,555.1 L1176.8,552.6 L1177.0,552.7 L1177.3,551.1 L1177.6,553.7 L1177.9,555.4 L1178.2,553.6 L1178.5,555.6 L1178.8,550.3 L1179.1,556.8 L1179.4,558.5 L1179.7,552.0 L1180.0,555.4 L1180.3,553.6 L1180.6,552.0 L1180.9,554.5 L1181.1,549.0 L1181.4,552.0 L1181.7,546.3 L1182.0,547.4 L1182.3,551.0 L1182.6,548.3 L1182.9,550.3 L1183.2,555.6 L1183.5,550.9 L1183.8,556.9 L1184.1,557.5 L1184.4,546.6 L1184.7,551.5 L1184.9,550.6 L1185.2,547.2 L1185.5,552.0 L1185.8,555.5 L1186.1,552.1 L1186.4,553.7 L1186.7,559.0 L1187.0,548.1 L1187.3,549.1 L1187.6,547.7 L1187.9,549.1 L1188.2,551.1 L1188.5,548.5 L1188.8,548.8 L1189.0,551.5 L1189.3,543.4 L1189.6,545.1 L1189.9,546.3 L1190.2,550.2 L1190.5,551.3 L1190.8,548.3 L1191.1,553.8 L1191.4,555.6 L1191.7,548.7 L1192.0,549.5 L1192.3,548.3 L1192.6,553.6 L1192.8,549.8 L1193.1,555.8 L1193.4,557.5 L1193.7,554.2 L1194.0,551.2 L1194.3,545.5 L1194.6,556.0 L1194.9,557.0 L1195.2,555.2 L1195.5,552.3 L1195.8,559.1 L1196.1,553.5 L1196.4,556.0 L1196.7,555.1 L1196.9,562.0 L1197.2,553.1 L1197.5,546.6 L1197.8,550.6 L1198.1,548.8 L1198.4,547.6 L1198.7,545.5 L1199.0,544.4 L1199.3,546.4 L1199.6,543.5 L1199.9,550.3 L1200.2,542.9 L1200.5,544.5 L1200.7,549.4 L1201.0,550.5 L1201.3,545.8 L1201.6,544.5 L1201.9,551.5 L1202.2,541.4 L1202.5,547.3 L1202.8,546.2 L1203.1,546.7 L1203.4,548.6 L1203.7,548.8 L1204.0,536.8 L1204.3,549.2 L1204.6,554.6 L1204.8,548.5 L1205.1,554.0 L1205.4,553.2 L1205.7,547.6 L1206.0,548.3 L1206.3,547.2 L1206.6,548.5 L1206.9,548.0 L1207.2,551.0 L1207.5,547.9 L1207.8,550.6 L1208.1,550.1 L1208.4,549.4 L1208.7,546.9 L1208.9,548.7 L1209.2,546.5 L1209.5,548.1 L1209.8,548.3 L1210.1,548.6 L1210.4,551.8 L1210.7,554.3 L1211.0,551.1 L1211.3,549.9 L1211.6,553.3 L1211.9,550.5 L1212.2,553.2 L1212.5,549.6 L1212.7,548.1 L1213.0,548.6 L1213.3,550.5 L1213.6,551.6 L1213.9,551.4 L1214.2,550.2 L1214.5,547.6 L1214.8,548.3 L1215.1,549.9 L1215.4,549.3 L1215.7,544.3 L1216.0,547.2 L1216.3,546.1 L1216.6,548.4 L1216.8,545.4 L1217.1,547.6 L1217.4,548.5 L1217.7,551.3 L1218.0,547.8 L1218.3,549.3 L1218.6,547.9 L1218.9,552.0 L1219.2,549.0 L1219.5,548.0 L1219.8,549.2 L1220.1,547.8 L1220.4,545.9 L1220.6,550.0 L1220.9,547.1 L1221.2,546.7 L1221.5,549.5 L1221.8,548.7 L1222.1,549.6 L1222.4,549.9 L1222.7,550.8 L1223.0,550.3 L1223.3,550.7 L1223.6,546.2 L1223.9,546.6 L1224.2,546.4 L1224.5,543.9 L1224.7,547.8 L1225.0,546.4 L1225.3,543.2 L1225.6,542.6 L1225.9,550.9 L1226.2,545.7 L1226.5,547.3 L1226.8,545.1 L1227.1,545.7 L1227.4,550.8 L1227.7,548.2 L1228.0,549.9 L1228.3,548.6 L1228.5,550.9 L1228.8,549.4 L1229.1,549.6 L1229.4,548.5 L1229.7,547.6 L1230.0,548.1 L1230.3,547.7 L1230.6,551.6 L1230.9,550.1 L1231.2,549.7 L1231.5,546.5 L1231.8,546.8 L1232.1,544.8 L1232.4,548.0 L1232.6,547.9 L1232.9,547.4 L1233.2,547.8 L1233.5,545.7 L1233.8,547.6 L1234.1,548.5 L1234.4,548.9 L1234.7,549.9 L1235.0,551.6 L1235.3,549.8 L1235.6,549.7 L1235.9,550.8 L1236.2,549.5 L1236.4,550.1 L1236.7,548.9 L1237.0,548.4 L1237.3,550.0 L1237.6,551.1 L1237.9,549.5 L1238.2,548.8 L1238.5,549.3 L1238.8,550.7 L1239.1,549.2 L1239.4,549.1 L1239.7,549.3 L1240.0,548.5 L1240.3,550.4 L1240.5,550.6 L1240.8,550.6 L1241.1,550.2 L1241.4,549.5 L1241.7,549.2 L1242.0,548.7 L1242.3,550.2 L1242.6,550.3 L1242.9,549.3 L1243.2,548.4 L1243.5,549.7 L1243.8,547.8 L1244.1,549.0 L1244.4,548.9 L1244.6,547.5 L1244.9,548.3 L1245.2,547.6 L1245.5,545.7 L1245.8,546.6 L1246.1,547.3 L1246.4,548.0 L1246.7,548.3 L1247.0,548.2 L1247.3,548.2 L1247.6,547.5 L1247.9,549.2 L1248.2,546.4 L1248.4,546.8 L1248.7,547.5 L1249.0,545.3 L1249.3,544.1 L1249.6,545.4 L1249.9,544.3 L1250.2,545.5 L1250.5,545.3 L1250.8,547.6 L1251.1,547.4 L1251.4,545.7 L1251.7,546.7 L1252.0,544.8 L1252.3,545.0 L1252.5,544.7 L1252.8,545.8 L1253.1,545.2 L1253.4,547.8 L1253.7,548.0 L1254.0,548.8 L1254.3,548.1 L1254.6,547.0 L1254.9,547.9 L1255.2,546.5 L1255.5,554.6 L1255.8,546.2 L1256.1,541.7 L1256.3,546.1 L1256.6,544.1 L1256.9,555.8 L1257.2,538.7 L1257.5,546.9 L1257.8,539.8 L1258.1,552.4 L1258.4,547.2 L1258.7,548.3 L1259.0,544.3 L1259.3,544.6 L1259.6,544.8 L1259.9,547.7 L1260.2,546.2 L1260.4,539.5 L1260.7,547.6 L1261.0,542.5 L1261.3,538.9 L1261.6,544.1 L1261.9,547.8 L1262.2,550.6 L1262.5,551.6 L1262.8,537.1 L1263.1,537.6 L1263.4,540.6 L1263.7,533.5 L1264.0,539.1 L1264.2,546.2 L1264.5,537.4 L1264.8,533.5 L1265.1,548.8 L1265.4,552.9 L1265.7,546.7 L1266.0,548.3 L1266.3,548.8 L1266.6,552.6 L1266.9,540.3 L1267.2,549.5 L1267.5,547.6 L1267.8,565.5 L1268.1,552.3 L1268.3,540.7 L1268.6,553.3 L1268.9,550.8 L1269.2,549.1 L1269.5,545.4 L1269.8,555.3 L1270.1,561.3 L1270.4,555.6 L1270.7,555.6 L1271.0,552.6 L1271.3,555.6 L1271.6,550.2 L1271.9,547.1 L1272.1,555.4 L1272.4,558.0 L1272.7,557.5 L1273.0,548.5 L1273.3,555.7 L1273.6,555.7 L1273.9,565.5 L1274.2,534.5 L1274.5,551.9 L1274.8,544.6 L1275.1,561.5 L1275.4,551.1 L1275.7,553.1 L1276.0,553.5 L1276.2,550.6 L1276.5,549.9 L1276.8,557.1 L1277.1,547.1 L1277.4,553.2 L1277.7,544.6 L1278.0,541.8 L1278.3,543.8 L1278.6,546.4 L1278.9,551.6 L1279.2,546.3 L1279.5,542.1 L1279.8,546.2 L1280.1,547.0 L1280.3,545.3 L1280.6,543.9 L1280.9,539.1 L1281.2,547.8 L1281.5,550.0 L1281.8,546.0 L1282.1,551.0 L1282.4,544.8 L1282.7,552.3 L1283.0,545.6 L1283.3,553.0 L1283.6,547.4 L1283.9,550.7 L1284.1,553.6 L1284.4,552.2 L1284.7,546.4 L1285.0,546.5 L1285.3,543.1 L1285.6,548.5 L1285.9,541.1 L1286.2,546.6 L1286.5,544.9 L1286.8,549.2 L1287.1,548.7 L1287.4,549.4 L1287.7,549.9 L1288.0,555.1 L1288.2,551.7 L1288.5,550.8 L1288.8,557.4 L1289.1,539.8 L1289.4,547.7 L1289.7,547.2 L1290.0,558.2 L1290.3,554.8 L1290.6,555.1 L1290.9,543.2 L1291.2,555.3 L1291.5,565.0 L1291.8,546.7 L1292.0,548.8 L1292.3,554.4 L1292.6,549.1 L1292.9,554.9 L1293.2,555.7 L1293.5,557.9 L1293.8,547.4 L1294.1,554.9 L1294.4,558.2 L1294.7,552.9 L1295.0,559.7 L1295.3,544.6 L1295.6,551.3 L1295.9,563.5 L1296.1,548.5 L1296.4,565.5 L1296.7,553.8 L1297.0,547.8 L1297.3,553.4 L1297.6,549.6 L1297.9,557.0 L1298.2,553.3 L1298.5,565.5 L1298.8,538.9 L1299.1,551.3 L1299.4,558.2 L1299.7,558.9 L1299.9,558.2 L1300.2,551.4 L1300.5,550.5 L1300.8,549.3 L1301.1,552.3 L1301.4,555.8 L1301.7,553.3 L1302.0,546.7 L1302.3,547.9 L1302.6,548.0 L1302.9,546.3 L1303.2,545.2 L1303.5,546.8 L1303.8,549.8 L1304.0,550.3 L1304.3,542.3 L1304.6,549.0 L1304.9,546.3 L1305.2,548.8 L1305.5,550.0 L1305.8,550.2 L1306.1,550.6 L1306.4,550.6 L1306.7,551.3 L1307.0,546.4 L1307.3,540.7 L1307.6,547.3 L1307.8,546.0 L1308.1,545.1 L1308.4,542.7 L1308.7,543.7 L1309.0,542.3 L1309.3,549.7 L1309.6,542.7 L1309.9,546.7 L1310.2,550.4 L1310.5,551.8 L1310.8,548.0 L1311.1,550.0 L1311.4,550.3 L1311.7,546.9 L1311.9,555.0 L1312.2,550.4 L1312.5,551.6 L1312.8,549.8 L1313.1,549.1 L1313.4,548.8 L1313.7,550.2 L1314.0,549.1 L1314.3,548.8 L1314.6,547.6 L1314.9,548.1 L1315.2,546.7 L1315.5,546.9 L1315.8,544.5 L1316.0,545.5 L1316.3,547.2 L1316.6,550.1 L1316.9,550.4 L1317.2,549.9 L1317.5,551.0 L1317.8,550.2 L1318.1,551.8 L1318.4,550.2 L1318.7,550.6 L1319.0,551.5 L1319.3,550.4 L1319.6,552.1 L1319.8,553.4 L1320.1,552.9 L1320.4,542.6 L1320.7,555.2 L1321.0,553.3 L1321.3,557.0 L1321.6,551.7 L1321.9,553.6 L1322.2,555.7 L1322.5,555.4 L1322.8,554.4 L1323.1,553.2 L1323.4,552.4 L1323.7,551.0 L1323.9,552.5 L1324.2,552.6 L1324.5,552.1 L1324.8,552.1 L1325.1,553.9 L1325.4,552.0 L1325.7,554.7 L1326.0,552.8 L1326.3,553.2 L1326.6,553.9 L1326.9,552.2 L1327.2,555.0 L1327.5,553.7 L1327.7,555.2 L1328.0,553.5 L1328.3,552.1 L1328.6,555.2 L1328.9,553.9 L1329.2,552.5 L1329.5,553.4 L1329.8,553.1 L1330.1,556.8 L1330.4,552.9 L1330.7,552.7 L1331.0,550.8 L1331.3,550.6 L1331.6,549.7 L1331.8,552.2 L1332.1,550.6 L1332.4,548.5 L1332.7,550.1 L1333.0,551.7 L1333.3,547.6 L1333.6,548.1 L1333.9,556.7 L1334.2,547.4 L1334.5,548.8 L1334.8,545.2 L1335.1,546.3 L1335.4,558.0 L1335.6,546.2 L1335.9,544.2 L1336.2,545.5 L1336.5,538.3 L1336.8,553.0 L1337.1,554.2 L1337.4,543.1 L1337.7,549.8 L1338.0,549.1 L1338.3,553.7 L1338.6,551.6 L1338.9,549.8 L1339.2,551.3 L1339.5,550.4 L1339.7,549.8 L1340.0,546.6 L1340.3,550.3 L1340.6,550.3 L1340.9,550.9 L1341.2,545.3 L1341.5,551.6 L1341.8,549.9 L1342.1,547.0 L1342.4,548.9 L1342.7,548.8 L1343.0,549.3 L1343.3,548.6 L1343.5,550.4 L1343.8,550.5 L1344.1,549.8 L1344.4,549.4 L1344.7,548.6 L1345.0,551.8 L1345.3,550.9 L1345.6,550.2 L1345.9,551.4 L1346.2,552.4 L1346.5,553.1 L1346.8,552.2 L1347.1,551.1 L1347.4,550.9 L1347.6,552.0 L1347.9,549.5 L1348.2,552.6 L1348.5,549.8 L1348.8,549.9 L1349.1,549.3 L1349.4,548.4 L1349.7,546.8 L1350.0,548.6 L1350.3,548.0 L1350.6,549.4 L1350.9,550.1 L1351.2,550.4 L1351.5,551.9 L1351.7,551.0 L1352.0,551.7 L1352.3,554.3 L1352.6,553.9 L1352.9,553.0 L1353.2,553.8 L1353.5,552.9 L1353.8,553.3 L1354.1,553.0 L1354.4,554.0 L1354.7,554.3 L1355.0,553.7 L1355.3,551.8 L1355.5,554.4 L1355.8,555.1 L1356.1,553.9 L1356.4,556.5 L1356.7,554.6 L1357.0,556.6 L1357.3,555.0 L1357.6,551.3 L1357.9,554.4 L1358.2,555.6 L1358.5,555.8 L1358.8,553.3 L1359.1,554.1 L1359.4,552.4 L1359.6,551.2 L1359.9,550.3 L1360.2,549.8 L1360.5,549.5 L1360.8,548.4 L1361.1,546.6 L1361.4,545.3 L1361.7,545.4 L1362.0,545.8 L1362.3,547.1 L1362.6,544.8 L1362.9,543.0 L1363.2,543.7 L1363.4,543.7 L1363.7,542.1 L1364.0,542.8 L1364.3,543.1 L1364.6,543.1 L1364.9,544.2 L1365.2,543.5 L1365.5,545.9 L1365.8,546.5 L1366.1,546.7 L1366.4,550.3 L1366.7,548.9 L1367.0,548.3 L1367.3,548.2 L1367.5,548.3 L1367.8,547.9 L1368.1,547.9 L1368.4,548.0 L1368.7,548.9 L1369.0,550.0 L1369.3,547.5 L1369.6,546.5 L1369.9,546.8 L1370.2,547.3 L1370.5,544.9 L1370.8,543.8 L1371.1,547.7 L1371.3,545.8 L1371.6,544.8 L1371.9,551.6 L1372.2,548.1 L1372.5,552.3 L1372.8,545.9 L1373.1,541.9 L1373.4,548.0 L1373.7,545.6 L1374.0,545.4 L1374.3,545.3 L1374.6,545.3 L1374.9,548.1 L1375.2,546.1 L1375.4,545.3 L1375.7,545.7 L1376.0,546.1 L1376.3,546.0 L1376.6,548.1 L1376.9,548.6 L1377.2,546.7 L1377.5,547.4 L1377.8,547.4 L1378.1,536.1 L1378.4,550.8 L1378.7,551.7 L1379.0,541.8 L1379.2,548.4 L1379.5,548.2 L1379.8,547.5 L1380.1,549.3 L1380.4,547.8 L1380.7,548.4 L1381.0,552.0 L1381.3,548.2 L1381.6,548.5 L1381.9,542.7 L1382.2,548.3 L1382.5,548.6 L1382.8,549.7 L1383.1,552.4 L1383.3,550.0 L1383.6,549.0 L1383.9,546.5 L1384.2,551.0 L1384.5,553.0 L1384.8,546.5 L1385.1,548.1 L1385.4,546.3 L1385.7,548.9 L1386.0,546.8 L1386.3,546.9 L1386.6,545.5 L1386.9,552.3 L1387.2,553.1 L1387.4,560.2 L1387.7,548.3 L1388.0,553.6 L1388.3,551.6 L1388.6,550.1 L1388.9,549.0 L1389.2,551.5 L1389.5,552.4 L1389.8,545.8 L1390.1,551.1 L1390.4,538.6 L1390.7,556.2 L1391.0,547.9 L1391.2,548.7 L1391.5,549.5 L1391.8,549.8 L1392.1,548.5 L1392.4,550.7 L1392.7,548.3 L1393.0,556.7 L1393.3,551.7 L1393.6,549.0 L1393.9,559.8 L1394.2,548.2 L1394.5,559.5 L1394.8,546.4 L1395.1,554.6 L1395.3,546.3 L1395.6,546.9 L1395.9,547.1 L1396.2,552.5 L1396.5,547.6 L1396.8,550.3 L1397.1,544.7 L1397.4,547.8 L1397.7,549.5 L1398.0,549.7 L1398.3,554.0 L1398.6,549.0 L1398.9,552.0 L1399.1,548.1 L1399.4,547.3 L1399.7,550.6 L1400.0,549.4 L1400.3,546.9 L1400.6,551.2 L1400.9,548.2 L1401.2,547.5 L1401.5,548.2 L1401.8,549.9 L1402.1,547.3 L1402.4,547.7 L1402.7,548.5 L1403.0,547.7 L1403.2,549.2 L1403.5,550.2 L1403.8,550.2 L1404.1,548.1 L1404.4,549.7 L1404.7,549.3 L1405.0,550.2" fill="none" stroke="#3498db" stroke-width="1.4" stroke-linejoin="round"/><circle cx="921.0" cy="533.5" r="1.8" fill="#ff7f0e"/><circle cx="754.5" cy="565.5" r="1.8" fill="#ff7f0e"/><circle cx="1405.0" cy="550.2" r="1.8" fill="#ff7f0e"/></svg>
<svg class="b" style="left:0.00px;top:0.00px;" width="1" height="1" viewBox="0 0 1 1"><path d="M703.0,587.5 L703.3,587.6 L703.6,609.5 L703.9,591.6 L704.2,593.3 L704.5,594.9 L704.8,587.2 L705.0,593.6 L705.3,591.5 L705.6,591.2 L705.9,591.2 L706.2,590.7 L706.5,587.6 L706.8,588.4 L707.1,593.3 L707.4,589.8 L707.7,579.4 L708.0,590.2 L708.3,583.6 L708.6,592.6 L708.9,589.7 L709.1,593.8 L709.4,589.9 L709.7,595.7 L710.0,587.9 L710.3,593.7 L710.6,593.0 L710.9,582.0 L711.2,586.9 L711.5,584.3 L711.8,592.0 L712.1,590.9 L712.4,594.0 L712.7,594.6 L712.9,597.1 L713.2,592.6 L713.5,595.2 L713.8,593.1 L714.1,595.6 L714.4,590.8 L714.7,592.4 L715.0,592.0 L715.3,593.5 L715.6,590.4 L715.9,590.4 L716.2,602.1 L716.5,594.7 L716.8,592.6 L717.0,593.6 L717.3,593.3 L717.6,589.3 L717.9,594.2 L718.2,589.8 L718.5,591.8 L718.8,590.5 L719.1,591.0 L719.4,597.4 L719.7,591.8 L720.0,590.6 L720.3,593.7 L720.6,594.1 L720.8,597.8 L721.1,596.8 L721.4,592.4 L721.7,599.7 L722.0,593.9 L722.3,577.4 L722.6,598.5 L722.9,598.0 L723.2,593.1 L723.5,591.8 L723.8,593.8 L724.1,592.8 L724.4,605.1 L724.7,595.4 L724.9,591.3 L725.2,590.5 L725.5,586.8 L725.8,597.2 L726.1,591.2 L726.4,594.1 L726.7,590.8 L727.0,593.3 L727.3,592.0 L727.6,595.1 L727.9,576.9 L728.2,590.6 L728.5,597.8 L728.8,596.3 L729.0,591.6 L729.3,596.3 L729.6,594.0 L729.9,597.8 L730.2,591.7 L730.5,598.3 L730.8,592.5 L731.1,591.7 L731.4,591.4 L731.7,589.2 L732.0,595.2 L732.3,594.7 L732.6,590.2 L732.8,597.1 L733.1,596.6 L733.4,592.7 L733.7,589.1 L734.0,594.6 L734.3,593.4 L734.6,588.9 L734.9,605.2 L735.2,595.3 L735.5,587.9 L735.8,592.5 L736.1,594.4 L736.4,594.7 L736.7,595.0 L736.9,595.1 L737.2,593.0 L737.5,596.0 L737.8,590.9 L738.1,592.3 L738.4,588.2 L738.7,583.5 L739.0,593.6 L739.3,595.9 L739.6,584.0 L739.9,590.5 L740.2,593.8 L740.5,595.3 L740.7,592.7 L741.0,595.3 L741.3,605.8 L741.6,595.1 L741.9,593.0 L742.2,598.3 L742.5,599.9 L742.8,600.7 L743.1,593.6 L743.4,594.7 L743.7,595.7 L744.0,603.2 L744.3,580.9 L744.6,594.5 L744.8,601.1 L745.1,590.0 L745.4,583.8 L745.7,597.2 L746.0,598.5 L746.3,598.3 L746.6,597.1 L746.9,596.5 L747.2,588.3 L747.5,594.6 L747.8,588.7 L748.1,588.8 L748.4,593.0 L748.6,589.0 L748.9,589.6 L749.2,590.6 L749.5,587.2 L749.8,592.3 L750.1,589.6 L750.4,590.3 L750.7,591.4 L751.0,591.6 L751.3,591.6 L751.6,592.7 L751.9,591.5 L752.2,592.5 L752.5,593.8 L752.7,592.9 L753.0,591.9 L753.3,588.9 L753.6,591.0 L753.9,593.3 L754.2,589.6 L754.5,594.0 L754.8,589.8 L755.1,593.9 L755.4,592.8 L755.7,591.0 L756.0,590.5 L756.3,591.8 L756.5,592.4 L756.8,587.3 L757.1,585.3 L757.4,585.0 L757.7,594.4 L758.0,589.8 L758.3,595.4 L758.6,583.9 L758.9,598.0 L759.2,592.5 L759.5,593.3 L759.8,603.6 L760.1,595.1 L760.4,593.9 L760.6,594.4 L760.9,593.5 L761.2,593.8 L761.5,590.1 L761.8,600.1 L762.1,591.8 L762.4,598.1 L762.7,599.7 L763.0,594.2 L763.3,597.4 L763.6,592.8 L763.9,590.6 L764.2,592.1 L764.5,598.0 L764.7,596.7 L765.0,588.2 L765.3,593.1 L765.6,587.4 L765.9,589.8 L766.2,590.1 L766.5,575.5 L766.8,587.8 L767.1,584.7 L767.4,582.3 L767.7,588.8 L768.0,592.2 L768.3,589.4 L768.5,586.1 L768.8,588.5 L769.1,590.7 L769.4,592.6 L769.7,591.6 L770.0,594.6 L770.3,598.4 L770.6,600.6 L770.9,598.1 L771.2,598.2 L771.5,594.2 L771.8,600.3 L772.1,602.0 L772.4,594.5 L772.6,594.9 L772.9,592.8 L773.2,594.7 L773.5,595.6 L773.8,606.0 L774.1,603.2 L774.4,590.7 L774.7,600.1 L775.0,596.0 L775.3,591.2 L775.6,598.3 L775.9,595.4 L776.2,598.7 L776.4,598.9 L776.7,593.6 L777.0,602.5 L777.3,597.6 L777.6,593.8 L777.9,590.0 L778.2,604.5 L778.5,592.4 L778.8,595.0 L779.1,596.7 L779.4,598.5 L779.7,601.6 L780.0,583.4 L780.3,595.1 L780.5,586.6 L780.8,592.1 L781.1,602.2 L781.4,590.4 L781.7,595.8 L782.0,588.6 L782.3,604.9 L782.6,591.3 L782.9,597.4 L783.2,596.1 L783.5,594.0 L783.8,599.7 L784.1,594.3 L784.3,592.2 L784.6,592.5 L784.9,592.4 L785.2,593.5 L785.5,593.8 L785.8,588.7 L786.1,589.1 L786.4,599.8 L786.7,591.8 L787.0,597.5 L787.3,589.9 L787.6,596.0 L787.9,588.9 L788.2,583.9 L788.4,593.3 L788.7,594.4 L789.0,597.2 L789.3,598.1 L789.6,591.8 L789.9,581.6 L790.2,588.8 L790.5,594.4 L790.8,596.6 L791.1,595.1 L791.4,591.7 L791.7,597.4 L792.0,594.6 L792.2,598.2 L792.5,594.3 L792.8,596.6 L793.1,593.0 L793.4,593.9 L793.7,588.1 L794.0,598.6 L794.3,598.7 L794.6,593.5 L794.9,603.8 L795.2,603.6 L795.5,603.1 L795.8,594.9 L796.1,595.6 L796.3,597.3 L796.6,598.6 L796.9,601.3 L797.2,591.5 L797.5,595.2 L797.8,594.7 L798.1,596.5 L798.4,596.5 L798.7,597.1 L799.0,604.6 L799.3,599.7 L799.6,594.8 L799.9,593.1 L800.2,597.1 L800.4,602.3 L800.7,591.0 L801.0,590.9 L801.3,595.6 L801.6,592.5 L801.9,600.0 L802.2,589.4 L802.5,592.4 L802.8,591.4 L803.1,592.0 L803.4,596.4 L803.7,585.4 L804.0,584.4 L804.2,585.4 L804.5,592.3 L804.8,593.0 L805.1,596.0 L805.4,595.8 L805.7,594.9 L806.0,586.9 L806.3,590.8 L806.6,600.3 L806.9,588.6 L807.2,592.3 L807.5,591.5 L807.8,596.2 L808.1,586.7 L808.3,581.8 L808.6,588.8 L808.9,588.4 L809.2,593.7 L809.5,586.7 L809.8,588.8 L810.1,587.1 L810.4,587.0 L810.7,599.0 L811.0,581.3 L811.3,593.7 L811.6,588.7 L811.9,590.8 L812.1,584.3 L812.4,592.5 L812.7,587.3 L813.0,598.7 L813.3,595.8 L813.6,584.8 L813.9,582.4 L814.2,598.9 L814.5,581.8 L814.8,589.9 L815.1,582.1 L815.4,583.7 L815.7,594.8 L816.0,598.7 L816.2,590.7 L816.5,588.0 L816.8,597.9 L817.1,587.7 L817.4,589.7 L817.7,590.7 L818.0,581.5 L818.3,596.3 L818.6,590.0 L818.9,594.4 L819.2,607.8 L819.5,598.0 L819.8,599.5 L820.0,592.1 L820.3,579.3 L820.6,596.8 L820.9,596.2 L821.2,596.3 L821.5,593.8 L821.8,597.1 L822.1,590.1 L822.4,597.3 L822.7,601.8 L823.0,595.9 L823.3,592.7 L823.6,594.2 L823.9,592.9 L824.1,591.3 L824.4,594.6 L824.7,588.0 L825.0,607.5 L825.3,585.3 L825.6,594.7 L825.9,586.8 L826.2,592.1 L826.5,586.5 L826.8,583.2 L827.1,585.6 L827.4,587.1 L827.7,607.0 L827.9,579.1 L828.2,591.6 L828.5,586.4 L828.8,589.9 L829.1,590.7 L829.4,592.7 L829.7,589.3 L830.0,588.5 L830.3,592.5 L830.6,595.2 L830.9,586.4 L831.2,588.0 L831.5,590.1 L831.8,592.7 L832.0,590.0 L832.3,587.1 L832.6,593.7 L832.9,592.1 L833.2,594.9 L833.5,596.8 L833.8,591.2 L834.1,588.7 L834.4,590.8 L834.7,608.5 L835.0,594.4 L835.3,597.2 L835.6,593.7 L835.9,597.2 L836.1,593.3 L836.4,591.9 L836.7,597.7 L837.0,593.4 L837.3,594.1 L837.6,596.2 L837.9,600.7 L838.2,592.1 L838.5,587.7 L838.8,596.1 L839.1,601.7 L839.4,598.6 L839.7,590.3 L839.9,594.8 L840.2,593.8 L840.5,595.2 L840.8,596.3 L841.1,594.5 L841.4,587.7 L841.7,591.4 L842.0,588.1 L842.3,589.3 L842.6,584.8 L842.9,586.7 L843.2,587.5 L843.5,594.2 L843.8,590.8 L844.0,594.1 L844.3,596.5 L844.6,593.2 L844.9,592.0 L845.2,601.0 L845.5,595.4 L845.8,594.6 L846.1,595.4 L846.4,591.1 L846.7,597.1 L847.0,588.0 L847.3,585.2 L847.6,591.8 L847.8,592.0 L848.1,587.3 L848.4,595.5 L848.7,595.9 L849.0,592.6 L849.3,594.2 L849.6,589.8 L849.9,595.8 L850.2,575.5 L850.5,588.3 L850.8,590.7 L851.1,597.8 L851.4,593.7 L851.7,594.6 L851.9,598.4 L852.2,586.7 L852.5,585.5 L852.8,603.0 L853.1,600.0 L853.4,609.5 L853.7,590.1 L854.0,589.4 L854.3,590.9 L854.6,598.7 L854.9,591.4 L855.2,595.9 L855.5,593.1 L855.7,597.5 L856.0,593.2 L856.3,598.0 L856.6,593.6 L856.9,594.0 L857.2,604.6 L857.5,593.1 L857.8,596.7 L858.1,589.6 L858.4,585.6 L858.7,583.0 L859.0,579.4 L859.3,592.0 L859.6,590.0 L859.8,584.2 L860.1,591.9 L860.4,592.6 L860.7,601.1 L861.0,589.0 L861.3,599.0 L861.6,588.8 L861.9,589.7 L862.2,593.9 L862.5,596.4 L862.8,596.1 L863.1,590.4 L863.4,587.6 L863.6,594.3 L863.9,597.9 L864.2,590.4 L864.5,590.4 L864.8,589.5 L865.1,592.7 L865.4,596.6 L865.7,588.8 L866.0,595.2 L866.3,599.0 L866.6,595.9 L866.9,588.6 L867.2,588.0 L867.5,591.8 L867.7,596.0 L868.0,593.9 L868.3,597.1 L868.6,590.5 L868.9,593.2 L869.2,588.6 L869.5,593.5 L869.8,595.0 L870.1,590.4 L870.4,590.7 L870.7,594.1 L871.0,595.2 L871.3,595.6 L871.6,603.0 L871.8,597.6 L872.1,591.5 L872.4,598.6 L872.7,592.7 L873.0,591.6 L873.3,598.7 L873.6,594.3 L873.9,583.6 L874.2,578.0 L874.5,595.5 L874.8,588.6 L875.1,599.6 L875.4,600.9 L875.6,595.0 L875.9,599.7 L876.2,598.6 L876.5,600.7 L876.8,601.1 L877.1,587.4 L877.4,596.1 L877.7,591.5 L878.0,594.8 L878.3,589.9 L878.6,599.8 L878.9,606.4 L879.2,591.9 L879.5,592.9 L879.7,592.3 L880.0,593.6 L880.3,596.3 L880.6,587.5 L880.9,586.3 L881.2,596.5 L881.5,593.7 L881.8,590.5 L882.1,588.6 L882.4,585.7 L882.7,591.4 L883.0,585.1 L883.3,591.6 L883.5,592.5 L883.8,587.7 L884.1,594.8 L884.4,593.3 L884.7,590.8 L885.0,581.8 L885.3,582.0 L885.6,588.7 L885.9,584.2 L886.2,590.6 L886.5,602.1 L886.8,585.5 L887.1,592.9 L887.4,588.5 L887.6,590.9 L887.9,592.6 L888.2,594.5 L888.5,589.1 L888.8,595.0 L889.1,591.0 L889.4,582.4 L889.7,600.3 L890.0,591.9 L890.3,594.4 L890.6,597.8 L890.9,594.7 L891.2,590.0 L891.4,591.1 L891.7,591.2 L892.0,587.5 L892.3,578.2 L892.6,584.9 L892.9,586.6 L893.2,585.9 L893.5,591.1 L893.8,600.4 L894.1,585.5 L894.4,591.7 L894.7,585.3 L895.0,585.5 L895.3,591.2 L895.5,596.4 L895.8,596.7 L896.1,594.7 L896.4,598.8 L896.7,595.7 L897.0,590.5 L897.3,586.3 L897.6,591.3 L897.9,595.4 L898.2,592.5 L898.5,593.4 L898.8,590.5 L899.1,591.1 L899.3,589.6 L899.6,590.4 L899.9,601.1 L900.2,598.7 L900.5,599.6 L900.8,594.9 L901.1,593.5 L901.4,607.5 L901.7,591.7 L902.0,596.5 L902.3,592.5 L902.6,595.7 L902.9,593.0 L903.2,597.3 L903.4,594.0 L903.7,596.0 L904.0,595.5 L904.3,600.9 L904.6,601.2 L904.9,595.8 L905.2,602.2 L905.5,590.5 L905.8,599.6 L906.1,596.5 L906.4,597.8 L906.7,597.2 L907.0,599.6 L907.3,595.4 L907.5,598.5 L907.8,597.2 L908.1,594.8 L908.4,595.8 L908.7,597.1 L909.0,600.7 L909.3,607.4 L909.6,601.1 L909.9,600.8 L910.2,592.5 L910.5,594.8 L910.8,594.7 L911.1,590.7 L911.3,593.0 L911.6,590.6 L911.9,596.2 L912.2,590.3 L912.5,600.0 L912.8,587.0 L913.1,597.0 L913.4,595.8 L913.7,589.8 L914.0,585.2 L914.3,604.2 L914.6,588.6 L914.9,597.2 L915.2,592.9 L915.4,591.7 L915.7,590.4 L916.0,592.1 L916.3,590.0 L916.6,591.1 L916.9,589.8 L917.2,585.4 L917.5,593.9 L917.8,594.0 L918.1,590.6 L918.4,586.6 L918.7,589.5 L919.0,583.2 L919.2,584.2 L919.5,584.4 L919.8,586.7 L920.1,591.8 L920.4,586.0 L920.7,585.1 L921.0,588.9 L921.3,587.6 L921.6,583.5 L921.9,585.5 L922.2,588.8 L922.5,593.3 L922.8,594.9 L923.1,590.8 L923.3,589.8 L923.6,587.5 L923.9,585.2 L924.2,577.9 L924.5,586.6 L924.8,584.7 L925.1,583.5 L925.4,575.5 L925.7,587.1 L926.0,609.5 L926.3,584.0 L926.6,584.1 L926.9,590.2 L927.1,593.2 L927.4,594.3 L927.7,587.9 L928.0,582.7 L928.3,592.1 L928.6,593.1 L928.9,586.3 L929.2,590.1 L929.5,592.2 L929.8,598.1 L930.1,593.3 L930.4,591.9 L930.7,589.2 L931.0,588.1 L931.2,590.6 L931.5,589.0 L931.8,594.0 L932.1,592.9 L932.4,591.8 L932.7,586.7 L933.0,590.8 L933.3,589.1 L933.6,591.8 L933.9,587.4 L934.2,576.8 L934.5,589.4 L934.8,595.1 L935.0,587.1 L935.3,598.5 L935.6,603.2 L935.9,592.3 L936.2,600.3 L936.5,597.8 L936.8,587.4 L937.1,591.1 L937.4,595.0 L937.7,591.3 L938.0,591.5 L938.3,592.4 L938.6,595.1 L938.9,588.4 L939.1,585.7 L939.4,589.6 L939.7,592.6 L940.0,589.2 L940.3,595.0 L940.6,593.9 L940.9,593.3 L941.2,608.1 L941.5,595.7 L941.8,601.8 L942.1,598.5 L942.4,600.5 L942.7,592.4 L942.9,600.3 L943.2,596.5 L943.5,591.2 L943.8,606.7 L944.1,593.8 L944.4,607.0 L944.7,601.8 L945.0,600.7 L945.3,601.5 L945.6,586.8 L945.9,599.1 L946.2,596.3 L946.5,599.4 L946.8,597.9 L947.0,602.1 L947.3,599.1 L947.6,595.5 L947.9,592.7 L948.2,592.4 L948.5,586.6 L948.8,593.3 L949.1,594.1 L949.4,593.8 L949.7,590.8 L950.0,590.5 L950.3,588.4 L950.6,588.9 L950.9,591.7 L951.1,590.1 L951.4,595.5 L951.7,590.9 L952.0,591.9 L952.3,592.7 L952.6,594.7 L952.9,593.8 L953.2,592.4 L953.5,594.9 L953.8,597.8 L954.1,600.9 L954.4,595.7 L954.7,597.3 L954.9,596.1 L955.2,599.1 L955.5,595.0 L955.8,594.6 L956.1,593.9 L956.4,592.3 L956.7,594.5 L957.0,592.9 L957.3,593.5 L957.6,593.4 L957.9,593.9 L958.2,593.7 L958.5,590.1 L958.8,596.7 L959.0,591.6 L959.3,594.5 L959.6,603.7 L959.9,593.4 L960.2,591.6 L960.5,598.8 L960.8,594.6 L961.1,592.5 L961.4,585.9 L961.7,591.5 L962.0,591.9 L962.3,596.2 L962.6,596.8 L962.8,597.7 L963.1,595.2 L963.4,593.8 L963.7,592.2 L964.0,593.3 L964.3,596.3 L964.6,595.4 L964.9,593.7 L965.2,594.4 L965.5,591.3 L965.8,591.3 L966.1,592.0 L966.4,590.9 L966.7,591.8 L966.9,590.7 L967.2,590.5 L967.5,591.6 L967.8,591.0 L968.1,591.9 L968.4,590.5 L968.7,592.5 L969.0,592.6 L969.3,591.0 L969.6,590.2 L969.9,592.4 L970.2,591.0 L970.5,591.3 L970.7,592.3 L971.0,591.5 L971.3,591.6 L971.6,590.3 L971.9,588.2 L972.2,589.4 L972.5,589.7 L972.8,591.3 L973.1,591.8 L973.4,591.8 L973.7,592.1 L974.0,591.8 L974.3,592.4 L974.6,590.6 L974.8,595.9 L975.1,594.7 L975.4,595.2 L975.7,593.6 L976.0,594.8 L976.3,594.5 L976.6,594.8 L976.9,596.1 L977.2,596.9 L977.5,595.8 L977.8,594.3 L978.1,594.1 L978.4,593.8 L978.6,592.9 L978.9,592.6 L979.2,591.4 L979.5,593.2 L979.8,593.4 L980.1,593.0 L980.4,592.7 L980.7,594.7 L981.0,593.1 L981.3,593.0 L981.6,593.3 L981.9,591.0 L982.2,592.7 L982.5,591.9 L982.7,592.9 L983.0,592.9 L983.3,589.4 L983.6,591.3 L983.9,589.1 L984.2,589.3 L984.5,591.1 L984.8,589.0 L985.1,582.7 L985.4,589.3 L985.7,593.6 L986.0,588.4 L986.3,592.3 L986.6,591.8 L986.8,583.0 L987.1,590.5 L987.4,586.0 L987.7,587.4 L988.0,588.7 L988.3,586.0 L988.6,589.2 L988.9,587.0 L989.2,587.4 L989.5,587.8 L989.8,586.3 L990.1,587.8 L990.4,585.8 L990.6,588.2 L990.9,586.0 L991.2,586.8 L991.5,580.5 L991.8,586.6 L992.1,591.1 L992.4,589.5 L992.7,587.6 L993.0,589.8 L993.3,589.3 L993.6,590.8 L993.9,592.1 L994.2,589.3 L994.5,588.2 L994.7,595.0 L995.0,589.2 L995.3,592.8 L995.6,592.6 L995.9,591.0 L996.2,593.4 L996.5,590.2 L996.8,591.3 L997.1,593.0 L997.4,592.9 L997.7,594.1 L998.0,589.7 L998.3,589.5 L998.5,591.7 L998.8,590.0 L999.1,591.1 L999.4,588.2 L999.7,591.6 L1000.0,587.6 L1000.3,595.0 L1000.6,591.5 L1000.9,592.3 L1001.2,588.5 L1001.5,593.8 L1001.8,590.0 L1002.1,596.4 L1002.4,591.9 L1002.6,595.7 L1002.9,596.2 L1003.2,598.5 L1003.5,597.0 L1003.8,597.1 L1004.1,595.7 L1004.4,592.0 L1004.7,590.9 L1005.0,592.0 L1005.3,591.7 L1005.6,588.8 L1005.9,590.3 L1006.2,590.6 L1006.4,592.3 L1006.7,588.8 L1007.0,587.7 L1007.3,586.2 L1007.6,590.8 L1007.9,591.2 L1008.2,588.8 L1008.5,594.4 L1008.8,595.7 L1009.1,590.9 L1009.4,593.3 L1009.7,593.3 L1010.0,594.2 L1010.3,593.3 L1010.5,593.2 L1010.8,594.9 L1011.1,594.7 L1011.4,593.7 L1011.7,594.6 L1012.0,590.5 L1012.3,593.1 L1012.6,594.1 L1012.9,594.2 L1013.2,592.8 L1013.5,595.6 L1013.8,594.3 L1014.1,596.0 L1014.3,597.4 L1014.6,594.7 L1014.9,600.6 L1015.2,599.5 L1015.5,597.5 L1015.8,585.1 L1016.1,597.0 L1016.4,593.6 L1016.7,592.2 L1017.0,595.7 L1017.3,594.4 L1017.6,594.5 L1017.9,594.5 L1018.2,597.7 L1018.4,594.6 L1018.7,593.9 L1019.0,593.5 L1019.3,593.6 L1019.6,594.2 L1019.9,591.0 L1020.2,591.9 L1020.5,590.3 L1020.8,587.3 L1021.1,592.1 L1021.4,596.0 L1021.7,592.8 L1022.0,586.8 L1022.3,593.6 L1022.5,590.6 L1022.8,591.7 L1023.1,593.5 L1023.4,586.9 L1023.7,588.6 L1024.0,587.7 L1024.3,589.1 L1024.6,593.1 L1024.9,588.4 L1025.2,588.6 L1025.5,600.6 L1025.8,589.2 L1026.1,590.1 L1026.3,590.7 L1026.6,595.0 L1026.9,591.0 L1027.2,592.1 L1027.5,594.4 L1027.8,592.4 L1028.1,593.6 L1028.4,588.4 L1028.7,590.5 L1029.0,594.1 L1029.3,595.0 L1029.6,593.9 L1029.9,598.6 L1030.2,594.9 L1030.4,597.6 L1030.7,591.5 L1031.0,595.2 L1031.3,597.6 L1031.6,586.3 L1031.9,594.2 L1032.2,589.6 L1032.5,602.3 L1032.8,586.2 L1033.1,593.0 L1033.4,592.6 L1033.7,584.4 L1034.0,587.7 L1034.2,592.1 L1034.5,580.4 L1034.8,590.9 L1035.1,588.8 L1035.4,590.6 L1035.7,584.8 L1036.0,586.7 L1036.3,596.3 L1036.6,590.5 L1036.9,593.6 L1037.2,591.2 L1037.5,592.8 L1037.8,588.9 L1038.1,590.5 L1038.3,583.2 L1038.6,584.6 L1038.9,589.4 L1039.2,586.6 L1039.5,592.0 L1039.8,593.1 L1040.1,588.9 L1040.4,594.2 L1040.7,594.5 L1041.0,594.2 L1041.3,595.1 L1041.6,600.2 L1041.9,597.1 L1042.1,594.6 L1042.4,595.0 L1042.7,601.4 L1043.0,593.1 L1043.3,599.1 L1043.6,600.0 L1043.9,590.1 L1044.2,592.4 L1044.5,596.2 L1044.8,593.6 L1045.1,591.7 L1045.4,592.4 L1045.7,590.9 L1046.0,591.0 L1046.2,592.2 L1046.5,585.5 L1046.8,595.3 L1047.1,594.5 L1047.4,592.6 L1047.7,594.9 L1048.0,588.8 L1048.3,589.4 L1048.6,579.8 L1048.9,590.2 L1049.2,586.0 L1049.5,588.0 L1049.8,588.8 L1050.0,587.2 L1050.3,585.3 L1050.6,589.1 L1050.9,590.5 L1051.2,589.5 L1051.5,587.4 L1051.8,586.9 L1052.1,586.6 L1052.4,585.6 L1052.7,595.2 L1053.0,588.1 L1053.3,588.2 L1053.6,587.8 L1053.9,585.2 L1054.1,585.5 L1054.4,586.0 L1054.7,584.9 L1055.0,586.5 L1055.3,585.9 L1055.6,586.3 L1055.9,588.0 L1056.2,587.6 L1056.5,587.8 L1056.8,589.2 L1057.1,590.1 L1057.4,589.0 L1057.7,591.6 L1058.0,590.3 L1058.2,597.5 L1058.5,593.6 L1058.8,593.4 L1059.1,595.8 L1059.4,593.1 L1059.7,593.4 L1060.0,594.2 L1060.3,596.5 L1060.6,595.9 L1060.9,594.1 L1061.2,593.4 L1061.5,594.8 L1061.8,593.5 L1062.0,595.4 L1062.3,595.4 L1062.6,596.9 L1062.9,597.6 L1063.2,597.2 L1063.5,597.1 L1063.8,599.7 L1064.1,597.6 L1064.4,595.9 L1064.7,595.8 L1065.0,595.8 L1065.3,595.8 L1065.6,594.9 L1065.9,594.2 L1066.1,594.6 L1066.4,595.9 L1066.7,593.7 L1067.0,595.7 L1067.3,595.5 L1067.6,594.6 L1067.9,594.5 L1068.2,593.3 L1068.5,598.0 L1068.8,592.2 L1069.1,590.7 L1069.4,591.1 L1069.7,593.0 L1069.9,593.3 L1070.2,592.8 L1070.5,591.0 L1070.8,590.6 L1071.1,587.9 L1071.4,590.8 L1071.7,591.3 L1072.0,595.4 L1072.3,587.2 L1072.6,589.8 L1072.9,586.3 L1073.2,599.5 L1073.5,595.0 L1073.8,590.4 L1074.0,589.5 L1074.3,590.8 L1074.6,595.2 L1074.9,588.2 L1075.2,595.7 L1075.5,589.8 L1075.8,589.5 L1076.1,592.3 L1076.4,593.3 L1076.7,595.3 L1077.0,595.7 L1077.3,586.3 L1077.6,591.8 L1077.8,594.9 L1078.1,584.8 L1078.4,594.2 L1078.7,590.9 L1079.0,590.2 L1079.3,586.3 L1079.6,586.1 L1079.9,593.8 L1080.2,585.8 L1080.5,586.9 L1080.8,592.7 L1081.1,591.2 L1081.4,599.6 L1081.7,588.4 L1081.9,594.9 L1082.2,592.4 L1082.5,586.1 L1082.8,584.7 L1083.1,592.1 L1083.4,602.6 L1083.7,598.5 L1084.0,595.2 L1084.3,595.4 L1084.6,595.7 L1084.9,591.8 L1085.2,595.8 L1085.5,592.4 L1085.7,589.2 L1086.0,606.1 L1086.3,593.3 L1086.6,590.1 L1086.9,592.8 L1087.2,587.1 L1087.5,588.7 L1087.8,597.1 L1088.1,593.3 L1088.4,599.1 L1088.7,586.0 L1089.0,589.6 L1089.3,588.3 L1089.6,595.1 L1089.8,585.2 L1090.1,593.7 L1090.4,594.3 L1090.7,581.7 L1091.0,589.2 L1091.3,584.7 L1091.6,587.5 L1091.9,587.0 L1092.2,581.0 L1092.5,585.3 L1092.8,591.2 L1093.1,584.3 L1093.4,585.3 L1093.7,596.7 L1093.9,595.9 L1094.2,594.5 L1094.5,595.9 L1094.8,589.4 L1095.1,594.6 L1095.4,593.5 L1095.7,590.1 L1096.0,593.8 L1096.3,592.7 L1096.6,590.3 L1096.9,588.8 L1097.2,587.8 L1097.5,598.2 L1097.7,594.3 L1098.0,596.3 L1098.3,594.5 L1098.6,594.1 L1098.9,598.4 L1099.2,599.4 L1099.5,591.9 L1099.8,597.1 L1100.1,598.5 L1100.4,594.2 L1100.7,594.6 L1101.0,593.6 L1101.3,595.7 L1101.6,595.1 L1101.8,595.9 L1102.1,598.7 L1102.4,597.5 L1102.7,591.0 L1103.0,597.4 L1103.3,591.3 L1103.6,599.5 L1103.9,586.3 L1104.2,591.9 L1104.5,591.4 L1104.8,594.5 L1105.1,590.9 L1105.4,586.1 L1105.6,589.9 L1105.9,590.2 L1106.2,587.7 L1106.5,589.8 L1106.8,588.3 L1107.1,587.8 L1107.4,587.2 L1107.7,589.4 L1108.0,589.3 L1108.3,591.7 L1108.6,589.9 L1108.9,585.5 L1109.2,587.0 L1109.5,588.1 L1109.7,588.2 L1110.0,588.6 L1110.3,589.1 L1110.6,589.8 L1110.9,588.6 L1111.2,591.6 L1111.5,589.1 L1111.8,585.5 L1112.1,589.1 L1112.4,590.7 L1112.7,588.9 L1113.0,590.9 L1113.3,593.2 L1113.5,591.3 L1113.8,596.9 L1114.1,593.8 L1114.4,596.2 L1114.7,595.6 L1115.0,597.0 L1115.3,596.0 L1115.6,596.7 L1115.9,595.3 L1116.2,596.2 L1116.5,596.7 L1116.8,597.6 L1117.1,595.8 L1117.4,596.4 L1117.6,596.3 L1117.9,598.6 L1118.2,595.8 L1118.5,597.2 L1118.8,597.4 L1119.1,595.5 L1119.4,596.6 L1119.7,593.7 L1120.0,594.2 L1120.3,594.0 L1120.6,594.7 L1120.9,594.3 L1121.2,595.1 L1121.4,590.4 L1121.7,590.0 L1122.0,591.6 L1122.3,595.1 L1122.6,593.3 L1122.9,589.3 L1123.2,593.6 L1123.5,590.7 L1123.8,591.7 L1124.1,591.7 L1124.4,591.1 L1124.7,592.3 L1125.0,592.3 L1125.3,594.1 L1125.5,594.5 L1125.8,593.0 L1126.1,592.6 L1126.4,595.5 L1126.7,596.3 L1127.0,596.3 L1127.3,596.0 L1127.6,598.0 L1127.9,596.6 L1128.2,596.1 L1128.5,594.5 L1128.8,596.0 L1129.1,596.2 L1129.4,596.9 L1129.6,600.3 L1129.9,590.8 L1130.2,592.5 L1130.5,598.5 L1130.8,597.0 L1131.1,595.8 L1131.4,594.1 L1131.7,593.8 L1132.0,596.2 L1132.3,594.1 L1132.6,597.1 L1132.9,594.1 L1133.2,596.9 L1133.4,591.7 L1133.7,596.9 L1134.0,606.7 L1134.3,595.9 L1134.6,596.1 L1134.9,599.4 L1135.2,592.0 L1135.5,593.8 L1135.8,594.1 L1136.1,601.0 L1136.4,589.3 L1136.7,609.5 L1137.0,596.8 L1137.3,592.7 L1137.5,590.3 L1137.8,590.2 L1138.1,581.2 L1138.4,596.5 L1138.7,575.5 L1139.0,606.3 L1139.3,593.2 L1139.6,592.6 L1139.9,596.1 L1140.2,602.5 L1140.5,595.8 L1140.8,597.4 L1141.1,608.8 L1141.3,588.0 L1141.6,593.8 L1141.9,593.1 L1142.2,596.2 L1142.5,591.6 L1142.8,600.2 L1143.1,594.7 L1143.4,590.2 L1143.7,594.7 L1144.0,586.6 L1144.3,588.8 L1144.6,596.1 L1144.9,597.3 L1145.2,596.7 L1145.4,590.6 L1145.7,586.9 L1146.0,593.1 L1146.3,589.7 L1146.6,591.6 L1146.9,585.4 L1147.2,587.6 L1147.5,588.2 L1147.8,587.1 L1148.1,592.4 L1148.4,592.5 L1148.7,592.6 L1149.0,589.3 L1149.2,595.2 L1149.5,593.4 L1149.8,592.2 L1150.1,588.3 L1150.4,595.8 L1150.7,585.1 L1151.0,583.9 L1151.3,601.9 L1151.6,595.4 L1151.9,591.1 L1152.2,588.1 L1152.5,581.1 L1152.8,589.8 L1153.1,586.7 L1153.3,583.1 L1153.6,586.6 L1153.9,590.2 L1154.2,595.2 L1154.5,589.9 L1154.8,591.5 L1155.1,586.9 L1155.4,591.9 L1155.7,587.9 L1156.0,592.6 L1156.3,588.0 L1156.6,585.8 L1156.9,591.0 L1157.1,607.3 L1157.4,588.4 L1157.7,591.1 L1158.0,594.8 L1158.3,596.2 L1158.6,592.1 L1158.9,582.5 L1159.2,594.1 L1159.5,609.5 L1159.8,588.9 L1160.1,585.8 L1160.4,591.3 L1160.7,590.7 L1161.0,593.2 L1161.2,586.8 L1161.5,582.8 L1161.8,591.4 L1162.1,584.4 L1162.4,594.9 L1162.7,590.6 L1163.0,594.0 L1163.3,592.0 L1163.6,591.5 L1163.9,592.2 L1164.2,589.4 L1164.5,589.1 L1164.8,590.6 L1165.1,589.2 L1165.3,592.0 L1165.6,591.4 L1165.9,584.8 L1166.2,594.3 L1166.5,592.1 L1166.8,596.2 L1167.1,596.7 L1167.4,594.6 L1167.7,597.0 L1168.0,589.2 L1168.3,600.2 L1168.6,602.9 L1168.9,597.7 L1169.1,592.0 L1169.4,595.6 L1169.7,592.4 L1170.0,601.4 L1170.3,593.8 L1170.6,591.8 L1170.9,593.4 L1171.2,593.4 L1171.5,596.5 L1171.8,595.4 L1172.1,596.7 L1172.4,590.9 L1172.7,599.5 L1173.0,596.0 L1173.2,593.3 L1173.5,598.0 L1173.8,595.2 L1174.1,592.4 L1174.4,593.6 L1174.7,594.3 L1175.0,592.8 L1175.3,590.4 L1175.6,590.6 L1175.9,589.2 L1176.2,587.7 L1176.5,588.7 L1176.8,586.2 L1177.0,582.0 L1177.3,590.4 L1177.6,589.1 L1177.9,590.3 L1178.2,591.2 L1178.5,593.6 L1178.8,590.9 L1179.1,593.0 L1179.4,592.2 L1179.7,591.8 L1180.0,592.7 L1180.3,589.8 L1180.6,592.3 L1180.9,591.2 L1181.1,591.9 L1181.4,586.9 L1181.7,592.3 L1182.0,591.1 L1182.3,586.6 L1182.6,590.7 L1182.9,591.7 L1183.2,589.3 L1183.5,592.4 L1183.8,593.7 L1184.1,588.8 L1184.4,587.7 L1184.7,590.8 L1184.9,585.8 L1185.2,589.9 L1185.5,594.3 L1185.8,589.5 L1186.1,590.3 L1186.4,576.3 L1186.7,592.4 L1187.0,587.5 L1187.3,583.6 L1187.6,586.0 L1187.9,586.4 L1188.2,591.0 L1188.5,591.8 L1188.8,588.6 L1189.0,588.9 L1189.3,585.8 L1189.6,586.3 L1189.9,582.7 L1190.2,592.0 L1190.5,590.1 L1190.8,589.1 L1191.1,583.9 L1191.4,587.1 L1191.7,593.2 L1192.0,591.0 L1192.3,596.1 L1192.6,591.8 L1192.8,589.8 L1193.1,581.8 L1193.4,591.3 L1193.7,597.4 L1194.0,599.8 L1194.3,592.1 L1194.6,593.9 L1194.9,591.1 L1195.2,593.2 L1195.5,583.5 L1195.8,590.5 L1196.1,587.3 L1196.4,596.6 L1196.7,590.2 L1196.9,593.7 L1197.2,590.7 L1197.5,578.5 L1197.8,587.0 L1198.1,595.8 L1198.4,592.6 L1198.7,594.2 L1199.0,596.8 L1199.3,595.2 L1199.6,593.6 L1199.9,587.7 L1200.2,597.1 L1200.5,592.4 L1200.7,599.3 L1201.0,602.0 L1201.3,596.8 L1201.6,600.2 L1201.9,587.1 L1202.2,596.9 L1202.5,601.9 L1202.8,596.0 L1203.1,597.6 L1203.4,596.9 L1203.7,595.8 L1204.0,595.5 L1204.3,598.7 L1204.6,588.9 L1204.8,597.3 L1205.1,589.2 L1205.4,585.4 L1205.7,593.2 L1206.0,589.6 L1206.3,590.8 L1206.6,587.8 L1206.9,595.2 L1207.2,592.3 L1207.5,603.2 L1207.8,592.9 L1208.1,594.1 L1208.4,582.0 L1208.7,594.5 L1208.9,599.4 L1209.2,588.4 L1209.5,589.1 L1209.8,584.6 L1210.1,589.4 L1210.4,596.2 L1210.7,587.2 L1211.0,589.2 L1211.3,582.7 L1211.6,589.8 L1211.9,588.2 L1212.2,590.2 L1212.5,587.3 L1212.7,586.2 L1213.0,593.6 L1213.3,593.6 L1213.6,586.5 L1213.9,594.2 L1214.2,593.2 L1214.5,593.9 L1214.8,595.2 L1215.1,590.5 L1215.4,594.2 L1215.7,596.9 L1216.0,591.0 L1216.3,592.3 L1216.6,594.0 L1216.8,593.0 L1217.1,594.2 L1217.4,590.9 L1217.7,595.3 L1218.0,593.6 L1218.3,596.1 L1218.6,593.3 L1218.9,593.6 L1219.2,593.5 L1219.5,589.2 L1219.8,594.2 L1220.1,592.9 L1220.4,595.8 L1220.6,592.2 L1220.9,592.4 L1221.2,592.0 L1221.5,592.2 L1221.8,592.2 L1222.1,589.3 L1222.4,589.7 L1222.7,593.6 L1223.0,590.4 L1223.3,592.0 L1223.6,592.0 L1223.9,591.9 L1224.2,591.4 L1224.5,590.1 L1224.7,588.8 L1225.0,589.2 L1225.3,589.7 L1225.6,592.2 L1225.9,589.6 L1226.2,591.3 L1226.5,591.2 L1226.8,590.1 L1227.1,590.0 L1227.4,589.9 L1227.7,590.2 L1228.0,590.0 L1228.3,589.5 L1228.5,590.1 L1228.8,591.8 L1229.1,591.7 L1229.4,590.7 L1229.7,590.7 L1230.0,593.1 L1230.3,592.3 L1230.6,592.0 L1230.9,592.1 L1231.2,592.0 L1231.5,594.0 L1231.8,590.8 L1232.1,591.8 L1232.4,591.3 L1232.6,593.1 L1232.9,593.8 L1233.2,593.7 L1233.5,595.8 L1233.8,596.4 L1234.1,594.7 L1234.4,595.0 L1234.7,593.0 L1235.0,590.3 L1235.3,590.3 L1235.6,589.4 L1235.9,588.3 L1236.2,588.3 L1236.4,587.7 L1236.7,587.3 L1237.0,587.5 L1237.3,589.7 L1237.6,588.1 L1237.9,588.6 L1238.2,588.3 L1238.5,587.8 L1238.8,586.2 L1239.1,588.9 L1239.4,590.9 L1239.7,589.9 L1240.0,589.0 L1240.3,588.2 L1240.5,584.8 L1240.8,595.9 L1241.1,597.9 L1241.4,596.1 L1241.7,596.5 L1242.0,596.5 L1242.3,597.4 L1242.6,595.6 L1242.9,598.9 L1243.2,597.2 L1243.5,592.5 L1243.8,597.9 L1244.1,599.0 L1244.4,595.3 L1244.6,598.2 L1244.9,600.6 L1245.2,598.6 L1245.5,594.9 L1245.8,596.3 L1246.1,594.9 L1246.4,596.4 L1246.7,598.7 L1247.0,601.6 L1247.3,603.3 L1247.6,601.7 L1247.9,599.1 L1248.2,597.8 L1248.4,577.7 L1248.7,599.0 L1249.0,596.8 L1249.3,597.1 L1249.6,599.6 L1249.9,597.5 L1250.2,598.3 L1250.5,593.6 L1250.8,590.8 L1251.1,594.1 L1251.4,595.1 L1251.7,597.6 L1252.0,598.9 L1252.3,595.0 L1252.5,595.4 L1252.8,592.7 L1253.1,589.0 L1253.4,596.3 L1253.7,589.2 L1254.0,588.9 L1254.3,593.1 L1254.6,596.2 L1254.9,598.8 L1255.2,591.7 L1255.5,599.2 L1255.8,593.2 L1256.1,587.1 L1256.3,590.1 L1256.6,589.9 L1256.9,592.1 L1257.2,582.9 L1257.5,586.2 L1257.8,598.3 L1258.1,594.7 L1258.4,597.8 L1258.7,587.1 L1259.0,591.6 L1259.3,589.6 L1259.6,601.1 L1259.9,582.4 L1260.2,581.7 L1260.4,580.9 L1260.7,582.0 L1261.0,595.0 L1261.3,591.7 L1261.6,586.7 L1261.9,587.2 L1262.2,588.3 L1262.5,591.0 L1262.8,585.2 L1263.1,590.3 L1263.4,588.6 L1263.7,591.3 L1264.0,593.2 L1264.2,584.5 L1264.5,597.6 L1264.8,591.1 L1265.1,597.1 L1265.4,589.6 L1265.7,588.9 L1266.0,600.7 L1266.3,601.0 L1266.6,600.2 L1266.9,598.6 L1267.2,599.6 L1267.5,589.0 L1267.8,594.6 L1268.1,596.3 L1268.3,592.0 L1268.6,598.8 L1268.9,599.1 L1269.2,598.5 L1269.5,599.0 L1269.8,607.1 L1270.1,597.7 L1270.4,596.6 L1270.7,601.8 L1271.0,603.3 L1271.3,596.9 L1271.6,593.1 L1271.9,602.0 L1272.1,599.6 L1272.4,597.0 L1272.7,593.4 L1273.0,596.6 L1273.3,589.3 L1273.6,578.5 L1273.9,599.6 L1274.2,587.9 L1274.5,591.6 L1274.8,597.1 L1275.1,595.5 L1275.4,589.1 L1275.7,606.6 L1276.0,586.3 L1276.2,591.8 L1276.5,609.5 L1276.8,590.6 L1277.1,599.7 L1277.4,591.9 L1277.7,597.0 L1278.0,597.7 L1278.3,592.2 L1278.6,587.9 L1278.9,595.9 L1279.2,595.4 L1279.5,598.0 L1279.8,594.4 L1280.1,593.9 L1280.3,592.2 L1280.6,594.7 L1280.9,598.5 L1281.2,594.3 L1281.5,590.1 L1281.8,590.5 L1282.1,590.1 L1282.4,588.6 L1282.7,590.5 L1283.0,587.5 L1283.3,588.6 L1283.6,593.2 L1283.9,592.9 L1284.1,593.8 L1284.4,591.9 L1284.7,592.0 L1285.0,586.2 L1285.3,588.1 L1285.6,590.0 L1285.9,593.6 L1286.2,595.5 L1286.5,599.3 L1286.8,593.6 L1287.1,594.8 L1287.4,592.6 L1287.7,594.8 L1288.0,591.9 L1288.2,593.3 L1288.5,595.6 L1288.8,594.4 L1289.1,593.2 L1289.4,594.9 L1289.7,594.8 L1290.0,597.2 L1290.3,597.5 L1290.6,596.6 L1290.9,596.7 L1291.2,596.0 L1291.5,599.0 L1291.8,596.9 L1292.0,597.1 L1292.3,603.8 L1292.6,601.1 L1292.9,593.4 L1293.2,595.1 L1293.5,588.8 L1293.8,589.3 L1294.1,592.2 L1294.4,589.3 L1294.7,587.0 L1295.0,586.1 L1295.3,588.0 L1295.6,587.4 L1295.9,592.8 L1296.1,592.5 L1296.4,589.2 L1296.7,594.0 L1297.0,589.4 L1297.3,588.5 L1297.6,593.0 L1297.9,591.3 L1298.2,589.0 L1298.5,596.4 L1298.8,593.2 L1299.1,592.8 L1299.4,589.9 L1299.7,591.5 L1299.9,591.8 L1300.2,591.0 L1300.5,591.8 L1300.8,587.9 L1301.1,590.9 L1301.4,589.4 L1301.7,597.4 L1302.0,589.3 L1302.3,587.2 L1302.6,589.2 L1302.9,609.5 L1303.2,589.6 L1303.5,590.2 L1303.8,596.3 L1304.0,593.5 L1304.3,593.6 L1304.6,587.0 L1304.9,587.6 L1305.2,593.1 L1305.5,600.3 L1305.8,575.5 L1306.1,587.6 L1306.4,594.3 L1306.7,593.0 L1307.0,591.0 L1307.3,595.6 L1307.6,594.3 L1307.8,591.9 L1308.1,593.5 L1308.4,590.9 L1308.7,594.1 L1309.0,590.6 L1309.3,588.7 L1309.6,590.8 L1309.9,592.4 L1310.2,598.2 L1310.5,577.4 L1310.8,589.2 L1311.1,590.1 L1311.4,593.0 L1311.7,588.5 L1311.9,593.6 L1312.2,594.6 L1312.5,594.4 L1312.8,592.5 L1313.1,583.1 L1313.4,588.8 L1313.7,589.6 L1314.0,583.3 L1314.3,588.3 L1314.6,591.9 L1314.9,595.6 L1315.2,602.1 L1315.5,597.7 L1315.8,598.2 L1316.0,592.4 L1316.3,609.4 L1316.6,598.4 L1316.9,591.4 L1317.2,593.7 L1317.5,600.8 L1317.8,597.4 L1318.1,603.5 L1318.4,593.2 L1318.7,598.5 L1319.0,600.0 L1319.3,595.4 L1319.6,597.6 L1319.8,594.3 L1320.1,594.8 L1320.4,588.1 L1320.7,590.5 L1321.0,595.5 L1321.3,594.3 L1321.6,594.0 L1321.9,597.0 L1322.2,595.8 L1322.5,596.6 L1322.8,593.3 L1323.1,601.2 L1323.4,589.0 L1323.7,590.0 L1323.9,590.7 L1324.2,594.6 L1324.5,594.2 L1324.8,596.7 L1325.1,594.8 L1325.4,596.5 L1325.7,594.7 L1326.0,592.2 L1326.3,591.4 L1326.6,594.4 L1326.9,593.9 L1327.2,595.0 L1327.5,595.3 L1327.7,592.3 L1328.0,594.2 L1328.3,597.2 L1328.6,594.5 L1328.9,595.1 L1329.2,594.9 L1329.5,595.3 L1329.8,596.4 L1330.1,595.1 L1330.4,596.0 L1330.7,594.6 L1331.0,593.8 L1331.3,596.3 L1331.6,596.8 L1331.8,592.4 L1332.1,593.9 L1332.4,597.8 L1332.7,600.3 L1333.0,595.6 L1333.3,596.7 L1333.6,597.2 L1333.9,597.8 L1334.2,604.5 L1334.5,607.2 L1334.8,595.5 L1335.1,598.6 L1335.4,601.3 L1335.6,590.5 L1335.9,596.8 L1336.2,596.6 L1336.5,596.1 L1336.8,596.9 L1337.1,599.5 L1337.4,597.7 L1337.7,591.9 L1338.0,596.1 L1338.3,596.0 L1338.6,592.5 L1338.9,595.0 L1339.2,592.4 L1339.5,592.5 L1339.7,594.4 L1340.0,594.2 L1340.3,591.6 L1340.6,591.7 L1340.9,590.1 L1341.2,591.0 L1341.5,592.0 L1341.8,591.6 L1342.1,591.2 L1342.4,593.0 L1342.7,590.5 L1343.0,589.0 L1343.3,591.2 L1343.5,592.3 L1343.8,592.9 L1344.1,592.3 L1344.4,578.0 L1344.7,589.5 L1345.0,589.6 L1345.3,589.3 L1345.6,589.9 L1345.9,591.0 L1346.2,588.4 L1346.5,585.1 L1346.8,583.5 L1347.1,588.4 L1347.4,587.8 L1347.6,583.9 L1347.9,585.1 L1348.2,591.8 L1348.5,591.8 L1348.8,591.0 L1349.1,591.6 L1349.4,590.5 L1349.7,593.0 L1350.0,591.3 L1350.3,589.9 L1350.6,591.5 L1350.9,588.7 L1351.2,592.8 L1351.5,592.7 L1351.7,591.2 L1352.0,590.5 L1352.3,590.6 L1352.6,592.2 L1352.9,591.7 L1353.2,591.0 L1353.5,593.2 L1353.8,595.4 L1354.1,595.4 L1354.4,595.0 L1354.7,594.3 L1355.0,592.3 L1355.3,592.8 L1355.5,593.4 L1355.8,592.9 L1356.1,591.5 L1356.4,593.9 L1356.7,593.9 L1357.0,593.5 L1357.3,594.1 L1357.6,596.5 L1357.9,595.9 L1358.2,597.2 L1358.5,596.8 L1358.8,596.0 L1359.1,597.5 L1359.4,594.8 L1359.6,594.5 L1359.9,593.2 L1360.2,592.8 L1360.5,593.6 L1360.8,596.1 L1361.1,594.3 L1361.4,595.4 L1361.7,595.5 L1362.0,596.4 L1362.3,596.7 L1362.6,596.1 L1362.9,598.9 L1363.2,597.4 L1363.4,596.9 L1363.7,594.7 L1364.0,595.5 L1364.3,595.0 L1364.6,596.0 L1364.9,596.8 L1365.2,596.1 L1365.5,595.8 L1365.8,594.2 L1366.1,593.9 L1366.4,593.5 L1366.7,594.2 L1367.0,593.6 L1367.3,591.2 L1367.5,590.9 L1367.8,591.4 L1368.1,592.0 L1368.4,593.4 L1368.7,592.2 L1369.0,593.9 L1369.3,592.0 L1369.6,591.5 L1369.9,591.6 L1370.2,592.7 L1370.5,591.1 L1370.8,593.0 L1371.1,592.8 L1371.3,590.9 L1371.6,591.0 L1371.9,590.3 L1372.2,589.4 L1372.5,594.0 L1372.8,593.1 L1373.1,594.6 L1373.4,594.3 L1373.7,593.1 L1374.0,594.6 L1374.3,596.5 L1374.6,595.9 L1374.9,596.8 L1375.2,597.7 L1375.4,594.9 L1375.7,593.9 L1376.0,592.8 L1376.3,594.4 L1376.6,592.9 L1376.9,592.3 L1377.2,590.5 L1377.5,590.4 L1377.8,590.0 L1378.1,589.4 L1378.4,593.7 L1378.7,592.3 L1379.0,592.1 L1379.2,590.9 L1379.5,591.1 L1379.8,592.0 L1380.1,590.6 L1380.4,592.5 L1380.7,593.9 L1381.0,593.2 L1381.3,591.2 L1381.6,590.7 L1381.9,591.2 L1382.2,592.2 L1382.5,587.1 L1382.8,588.8 L1383.1,596.2 L1383.3,590.8 L1383.6,588.7 L1383.9,587.8 L1384.2,589.9 L1384.5,589.0 L1384.8,590.7 L1385.1,589.2 L1385.4,589.7 L1385.7,591.7 L1386.0,594.0 L1386.3,588.8 L1386.6,592.3 L1386.9,591.3 L1387.2,588.0 L1387.4,584.3 L1387.7,586.3 L1388.0,589.9 L1388.3,584.7 L1388.6,588.2 L1388.9,581.3 L1389.2,585.9 L1389.5,592.7 L1389.8,589.9 L1390.1,586.9 L1390.4,588.8 L1390.7,593.4 L1391.0,595.7 L1391.2,593.4 L1391.5,593.2 L1391.8,592.5 L1392.1,597.7 L1392.4,595.6 L1392.7,585.9 L1393.0,592.6 L1393.3,592.4 L1393.6,592.2 L1393.9,593.3 L1394.2,592.7 L1394.5,589.0 L1394.8,595.0 L1395.1,593.4 L1395.3,596.6 L1395.6,594.9 L1395.9,594.5 L1396.2,593.5 L1396.5,596.2 L1396.8,600.4 L1397.1,596.8 L1397.4,600.6 L1397.7,594.2 L1398.0,596.3 L1398.3,594.2 L1398.6,593.8 L1398.9,598.2 L1399.1,592.9 L1399.4,594.1 L1399.7,594.7 L1400.0,594.8 L1400.3,590.9 L1400.6,591.7 L1400.9,594.2 L1401.2,597.0 L1401.5,593.3 L1401.8,593.6 L1402.1,594.5 L1402.4,594.3 L1402.7,594.2 L1403.0,593.5 L1403.2,600.5 L1403.5,591.4 L1403.8,592.8 L1404.1,593.0 L1404.4,590.2 L1404.7,589.3 L1405.0,591.2" fill="none" stroke="#e67e22" stroke-width="1.4" stroke-linejoin="round"/><circle cx="766.5" cy="575.5" r="1.8" fill="#ff7f0e"/><circle cx="703.6" cy="609.5" r="1.8" fill="#ff7f0e"/><circle cx="1405.0" cy="591.2" r="1.8" fill="#ff7f0e"/></svg>
<svg class="b" style="left:602.00px;top:679.00px;" width="9" height="10" viewBox="0 0 9 10"><path d="M0.5 0.5 L8.5 5 L0.5 9.5 Z" fill="#1a9cb0"/></svg>
<div class="t" style="left:617.30px;top:676.00px;font-size:14.08px;color:#1a9cb0;font-weight:400;">Show Details</div>
<div class="b" style="left:1446.00px;top:410.00px;width:836.00px;height:300.00px;background:#fff;border:1px solid #e1e5ea;border-radius:10px;"></div>
<div class="t" style="left:1463.40px;top:431.00px;font-size:18.55px;color:#2c3e50;font-weight:400;">Motor Steadiness Index</div>
<div class="b" style="left:2203.00px;top:427.00px;width:61.50px;height:26.00px;background:#eafaf1;border:1px solid #27ae60;border-radius:13px;"></div>
<div class="t" style="left:1233.70px;width:2000px;text-align:center;top:434.00px;font-size:12.53px;color:#27ae60;font-weight:400;">Normal</div>
<div class="t" style="left:1463.60px;top:469.00px;font-size:41.5px;color:#2c3e50;font-weight:400;-webkit-text-stroke:0.6px #2c3e50;">53</div>
<div class="t" style="left:1521.50px;top:491.00px;font-size:15.2px;color:#6c757d;font-weight:400;">/100</div>
<div class="t" style="left:1463.40px;top:542.00px;font-size:14.12px;color:#5d6d7e;font-weight:400;">Tremor</div>
<div class="t" style="left:1463.40px;top:585.00px;font-size:14.12px;color:#5d6d7e;font-weight:400;">Grip CV%</div>
<svg class="b" style="left:0.00px;top:0.00px;" width="1" height="1" viewBox="0 0 1 1"><path d="M1563.6,561.4 L1563.9,560.5 L1564.2,553.4 L1564.5,560.7 L1564.8,560.7 L1565.1,562.7 L1565.4,562.3 L1565.6,564.3 L1565.9,564.4 L1566.2,560.7 L1566.5,561.9 L1566.8,560.8 L1567.1,558.3 L1567.4,558.1 L1567.7,557.3 L1568.0,558.8 L1568.3,561.7 L1568.6,557.9 L1568.9,555.2 L1569.2,560.2 L1569.4,558.4 L1569.7,550.8 L1570.0,561.3 L1570.3,560.0 L1570.6,555.0 L1570.9,559.5 L1571.2,557.7 L1571.5,558.4 L1571.8,555.3 L1572.1,557.2 L1572.4,559.3 L1572.7,559.6 L1573.0,558.0 L1573.2,552.4 L1573.5,555.8 L1573.8,560.7 L1574.1,553.4 L1574.4,559.1 L1574.7,557.9 L1575.0,555.3 L1575.3,556.3 L1575.6,551.3 L1575.9,559.1 L1576.2,547.7 L1576.5,561.5 L1576.8,554.8 L1577.0,558.4 L1577.3,550.5 L1577.6,560.2 L1577.9,561.9 L1578.2,558.6 L1578.5,547.0 L1578.8,559.8 L1579.1,557.7 L1579.4,557.6 L1579.7,559.8 L1580.0,553.8 L1580.3,558.4 L1580.6,551.7 L1580.8,557.2 L1581.1,560.5 L1581.4,559.9 L1581.7,554.2 L1582.0,558.1 L1582.3,557.6 L1582.6,553.1 L1582.9,554.3 L1583.2,556.7 L1583.5,555.0 L1583.8,558.5 L1584.1,551.8 L1584.4,550.9 L1584.7,554.5 L1584.9,558.5 L1585.2,557.6 L1585.5,553.5 L1585.8,555.3 L1586.1,555.5 L1586.4,554.2 L1586.7,560.7 L1587.0,539.7 L1587.3,551.1 L1587.6,562.0 L1587.9,562.7 L1588.2,542.4 L1588.5,555.3 L1588.7,560.5 L1589.0,559.3 L1589.3,557.1 L1589.6,561.3 L1589.9,560.0 L1590.2,558.9 L1590.5,549.8 L1590.8,563.5 L1591.1,549.4 L1591.4,548.7 L1591.7,561.0 L1592.0,553.1 L1592.3,559.0 L1592.5,547.3 L1592.8,540.7 L1593.1,559.8 L1593.4,535.5 L1593.7,561.2 L1594.0,557.2 L1594.3,553.8 L1594.6,554.0 L1594.9,555.2 L1595.2,547.7 L1595.5,563.0 L1595.8,560.8 L1596.1,550.1 L1596.3,547.9 L1596.6,551.0 L1596.9,554.8 L1597.2,560.5 L1597.5,557.9 L1597.8,563.5 L1598.1,556.0 L1598.4,550.9 L1598.7,546.2 L1599.0,552.3 L1599.3,560.5 L1599.6,558.3 L1599.9,546.4 L1600.1,560.1 L1600.4,546.7 L1600.7,554.9 L1601.0,553.4 L1601.3,558.8 L1601.6,559.6 L1601.9,560.4 L1602.2,555.8 L1602.5,545.1 L1602.8,542.4 L1603.1,554.8 L1603.4,556.7 L1603.7,543.2 L1603.9,559.1 L1604.2,551.0 L1604.5,557.9 L1604.8,562.0 L1605.1,563.2 L1605.4,562.3 L1605.7,560.6 L1606.0,544.0 L1606.3,561.2 L1606.6,552.6 L1606.9,562.9 L1607.2,550.1 L1607.5,552.3 L1607.7,553.0 L1608.0,562.7 L1608.3,561.1 L1608.6,552.8 L1608.9,556.0 L1609.2,542.9 L1609.5,551.6 L1609.8,559.6 L1610.1,536.0 L1610.4,545.0 L1610.7,563.6 L1611.0,556.2 L1611.3,560.8 L1611.5,562.9 L1611.8,557.9 L1612.1,549.3 L1612.4,552.3 L1612.7,557.6 L1613.0,555.5 L1613.3,559.7 L1613.6,545.8 L1613.9,555.2 L1614.2,559.3 L1614.5,556.4 L1614.8,545.9 L1615.1,553.8 L1615.3,561.1 L1615.6,560.8 L1615.9,560.2 L1616.2,549.6 L1616.5,552.7 L1616.8,554.3 L1617.1,557.5 L1617.4,550.9 L1617.7,550.9 L1618.0,559.6 L1618.3,546.0 L1618.6,560.1 L1618.9,557.1 L1619.2,559.5 L1619.4,550.3 L1619.7,557.8 L1620.0,549.3 L1620.3,556.5 L1620.6,559.4 L1620.9,554.1 L1621.2,561.9 L1621.5,552.1 L1621.8,561.1 L1622.1,556.0 L1622.4,559.8 L1622.7,563.4 L1623.0,551.9 L1623.2,559.5 L1623.5,556.6 L1623.8,562.2 L1624.1,560.4 L1624.4,558.5 L1624.7,557.8 L1625.0,561.1 L1625.3,559.4 L1625.6,556.8 L1625.9,551.5 L1626.2,553.3 L1626.5,556.6 L1626.8,561.8 L1627.0,554.9 L1627.3,556.7 L1627.6,560.6 L1627.9,557.9 L1628.2,559.8 L1628.5,560.0 L1628.8,554.1 L1629.1,560.7 L1629.4,559.5 L1629.7,560.7 L1630.0,560.5 L1630.3,552.9 L1630.6,562.5 L1630.8,557.2 L1631.1,554.1 L1631.4,556.4 L1631.7,558.6 L1632.0,556.4 L1632.3,561.4 L1632.6,557.2 L1632.9,559.6 L1633.2,559.5 L1633.5,555.7 L1633.8,559.6 L1634.1,558.0 L1634.4,560.4 L1634.6,560.7 L1634.9,555.2 L1635.2,560.9 L1635.5,555.9 L1635.8,559.8 L1636.1,562.1 L1636.4,559.7 L1636.7,560.8 L1637.0,562.0 L1637.3,560.4 L1637.6,562.5 L1637.9,560.9 L1638.2,560.7 L1638.4,562.0 L1638.7,555.9 L1639.0,559.8 L1639.3,560.3 L1639.6,559.6 L1639.9,559.4 L1640.2,560.8 L1640.5,555.5 L1640.8,560.7 L1641.1,558.2 L1641.4,559.9 L1641.7,558.9 L1642.0,555.7 L1642.2,559.9 L1642.5,558.5 L1642.8,560.5 L1643.1,558.2 L1643.4,558.6 L1643.7,559.9 L1644.0,560.3 L1644.3,557.8 L1644.6,561.4 L1644.9,558.3 L1645.2,560.2 L1645.5,560.7 L1645.8,555.0 L1646.0,561.3 L1646.3,558.7 L1646.6,563.6 L1646.9,564.1 L1647.2,558.2 L1647.5,554.9 L1647.8,558.1 L1648.1,558.0 L1648.4,553.9 L1648.7,562.1 L1649.0,561.4 L1649.3,555.9 L1649.6,562.0 L1649.8,556.3 L1650.1,555.6 L1650.4,558.5 L1650.7,555.7 L1651.0,543.9 L1651.3,561.7 L1651.6,548.2 L1651.9,552.9 L1652.2,555.6 L1652.5,562.0 L1652.8,549.6 L1653.1,555.7 L1653.4,553.8 L1653.7,563.9 L1653.9,558.8 L1654.2,561.8 L1654.5,561.0 L1654.8,562.9 L1655.1,550.8 L1655.4,557.5 L1655.7,553.4 L1656.0,557.2 L1656.3,559.1 L1656.6,550.4 L1656.9,554.9 L1657.2,559.7 L1657.5,550.1 L1657.7,561.1 L1658.0,560.5 L1658.3,560.2 L1658.6,560.7 L1658.9,553.6 L1659.2,555.0 L1659.5,554.4 L1659.8,554.7 L1660.1,555.0 L1660.4,550.3 L1660.7,559.4 L1661.0,554.9 L1661.3,552.6 L1661.5,549.0 L1661.8,558.2 L1662.1,552.7 L1662.4,549.2 L1662.7,553.0 L1663.0,550.6 L1663.3,559.7 L1663.6,555.6 L1663.9,560.4 L1664.2,561.8 L1664.5,544.1 L1664.8,543.3 L1665.1,552.4 L1665.3,555.6 L1665.6,560.7 L1665.9,556.9 L1666.2,558.4 L1666.5,560.7 L1666.8,551.8 L1667.1,547.2 L1667.4,547.9 L1667.7,554.1 L1668.0,560.6 L1668.3,552.2 L1668.6,563.3 L1668.9,556.0 L1669.1,561.8 L1669.4,562.2 L1669.7,543.9 L1670.0,559.4 L1670.3,557.1 L1670.6,554.6 L1670.9,535.7 L1671.2,552.0 L1671.5,560.8 L1671.8,556.6 L1672.1,554.7 L1672.4,553.1 L1672.7,551.8 L1672.9,561.7 L1673.2,557.5 L1673.5,557.3 L1673.8,559.3 L1674.1,557.3 L1674.4,555.5 L1674.7,559.9 L1675.0,556.3 L1675.3,556.0 L1675.6,550.1 L1675.9,560.6 L1676.2,561.9 L1676.5,564.6 L1676.7,553.2 L1677.0,556.6 L1677.3,561.4 L1677.6,560.1 L1677.9,558.7 L1678.2,548.2 L1678.5,550.4 L1678.8,552.7 L1679.1,547.4 L1679.4,555.3 L1679.7,561.4 L1680.0,552.9 L1680.3,558.7 L1680.5,542.5 L1680.8,553.0 L1681.1,546.2 L1681.4,557.5 L1681.7,559.7 L1682.0,553.4 L1682.3,542.6 L1682.6,553.3 L1682.9,549.7 L1683.2,547.8 L1683.5,557.9 L1683.8,552.9 L1684.1,554.4 L1684.3,550.1 L1684.6,546.1 L1684.9,559.9 L1685.2,546.1 L1685.5,553.8 L1685.8,557.9 L1686.1,554.3 L1686.4,552.3 L1686.7,558.6 L1687.0,559.2 L1687.3,555.9 L1687.6,558.2 L1687.9,553.7 L1688.2,559.9 L1688.4,559.5 L1688.7,556.6 L1689.0,559.0 L1689.3,560.2 L1689.6,561.3 L1689.9,553.6 L1690.2,558.7 L1690.5,550.2 L1690.8,552.8 L1691.1,557.0 L1691.4,559.2 L1691.7,552.0 L1692.0,560.4 L1692.2,558.5 L1692.5,556.8 L1692.8,559.2 L1693.1,554.2 L1693.4,560.0 L1693.7,562.1 L1694.0,561.0 L1694.3,552.9 L1694.6,560.4 L1694.9,561.9 L1695.2,561.9 L1695.5,555.5 L1695.8,557.6 L1696.0,559.7 L1696.3,553.8 L1696.6,558.7 L1696.9,558.7 L1697.2,551.1 L1697.5,553.4 L1697.8,557.5 L1698.1,559.5 L1698.4,562.2 L1698.7,560.9 L1699.0,560.2 L1699.3,560.1 L1699.6,558.8 L1699.8,554.3 L1700.1,561.6 L1700.4,562.5 L1700.7,559.8 L1701.0,560.5 L1701.3,560.4 L1701.6,561.7 L1701.9,561.1 L1702.2,559.5 L1702.5,558.3 L1702.8,561.1 L1703.1,561.8 L1703.4,563.5 L1703.6,563.5 L1703.9,561.0 L1704.2,556.8 L1704.5,560.3 L1704.8,555.5 L1705.1,558.0 L1705.4,558.1 L1705.7,559.1 L1706.0,559.6 L1706.3,556.0 L1706.6,555.4 L1706.9,558.6 L1707.2,559.4 L1707.4,560.3 L1707.7,560.1 L1708.0,560.2 L1708.3,555.5 L1708.6,562.3 L1708.9,562.5 L1709.2,559.9 L1709.5,557.9 L1709.8,562.8 L1710.1,558.0 L1710.4,559.1 L1710.7,558.0 L1711.0,558.7 L1711.2,557.8 L1711.5,564.0 L1711.8,558.4 L1712.1,563.0 L1712.4,559.1 L1712.7,561.8 L1713.0,556.8 L1713.3,560.2 L1713.6,558.1 L1713.9,561.8 L1714.2,561.2 L1714.5,561.7 L1714.8,552.9 L1715.0,559.5 L1715.3,559.3 L1715.6,555.2 L1715.9,551.6 L1716.2,554.5 L1716.5,556.2 L1716.8,559.2 L1717.1,556.7 L1717.4,553.2 L1717.7,551.1 L1718.0,543.5 L1718.3,553.1 L1718.6,556.2 L1718.8,555.5 L1719.1,560.4 L1719.4,562.1 L1719.7,556.7 L1720.0,556.4 L1720.3,556.1 L1720.6,560.4 L1720.9,562.1 L1721.2,562.2 L1721.5,561.0 L1721.8,547.3 L1722.1,561.4 L1722.4,555.7 L1722.7,554.0 L1722.9,559.8 L1723.2,555.7 L1723.5,560.5 L1723.8,560.9 L1724.1,548.5 L1724.4,556.8 L1724.7,555.6 L1725.0,555.7 L1725.3,557.6 L1725.6,559.5 L1725.9,551.7 L1726.2,548.7 L1726.5,556.9 L1726.7,557.7 L1727.0,559.1 L1727.3,549.1 L1727.6,553.1 L1727.9,552.6 L1728.2,553.9 L1728.5,560.0 L1728.8,557.1 L1729.1,561.9 L1729.4,556.1 L1729.7,560.5 L1730.0,551.6 L1730.3,559.8 L1730.5,556.5 L1730.8,556.7 L1731.1,559.9 L1731.4,554.5 L1731.7,553.3 L1732.0,560.1 L1732.3,557.8 L1732.6,554.1 L1732.9,561.6 L1733.2,553.7 L1733.5,553.6 L1733.8,531.8 L1734.1,557.9 L1734.3,560.7 L1734.6,559.3 L1734.9,557.5 L1735.2,561.5 L1735.5,548.4 L1735.8,561.3 L1736.1,534.6 L1736.4,553.8 L1736.7,552.8 L1737.0,548.9 L1737.3,550.0 L1737.6,554.4 L1737.9,560.4 L1738.1,554.5 L1738.4,553.5 L1738.7,551.0 L1739.0,550.4 L1739.3,560.3 L1739.6,555.0 L1739.9,553.6 L1740.2,556.2 L1740.5,550.1 L1740.8,546.2 L1741.1,552.8 L1741.4,554.5 L1741.7,548.6 L1741.9,557.0 L1742.2,562.6 L1742.5,546.1 L1742.8,550.6 L1743.1,558.5 L1743.4,560.4 L1743.7,560.0 L1744.0,553.7 L1744.3,550.6 L1744.6,560.3 L1744.9,560.5 L1745.2,562.0 L1745.5,543.5 L1745.7,563.1 L1746.0,557.7 L1746.3,553.2 L1746.6,561.0 L1746.9,552.8 L1747.2,550.8 L1747.5,558.3 L1747.8,558.4 L1748.1,550.4 L1748.4,544.0 L1748.7,562.7 L1749.0,562.4 L1749.3,556.4 L1749.5,552.9 L1749.8,563.7 L1750.1,562.3 L1750.4,559.0 L1750.7,556.6 L1751.0,562.1 L1751.3,557.8 L1751.6,556.9 L1751.9,560.5 L1752.2,553.0 L1752.5,553.4 L1752.8,561.5 L1753.1,561.1 L1753.3,556.8 L1753.6,559.5 L1753.9,555.3 L1754.2,551.0 L1754.5,556.5 L1754.8,557.0 L1755.1,552.2 L1755.4,551.7 L1755.7,554.4 L1756.0,558.4 L1756.3,560.6 L1756.6,557.7 L1756.9,560.3 L1757.2,557.6 L1757.4,561.3 L1757.7,557.9 L1758.0,555.5 L1758.3,551.1 L1758.6,556.3 L1758.9,555.3 L1759.2,559.7 L1759.5,559.3 L1759.8,557.8 L1760.1,560.5 L1760.4,562.8 L1760.7,548.3 L1761.0,561.1 L1761.2,549.0 L1761.5,553.8 L1761.8,561.9 L1762.1,551.0 L1762.4,554.8 L1762.7,555.1 L1763.0,558.3 L1763.3,550.1 L1763.6,554.4 L1763.9,547.4 L1764.2,556.2 L1764.5,556.0 L1764.8,558.1 L1765.0,553.0 L1765.3,539.7 L1765.6,553.0 L1765.9,543.9 L1766.2,537.6 L1766.5,557.9 L1766.8,559.9 L1767.1,561.3 L1767.4,550.4 L1767.7,559.7 L1768.0,551.8 L1768.3,549.6 L1768.6,557.1 L1768.8,557.3 L1769.1,549.7 L1769.4,555.8 L1769.7,557.2 L1770.0,560.0 L1770.3,559.4 L1770.6,549.9 L1770.9,551.0 L1771.2,553.7 L1771.5,558.6 L1771.8,551.2 L1772.1,559.8 L1772.4,552.9 L1772.6,541.7 L1772.9,553.3 L1773.2,536.5 L1773.5,556.4 L1773.8,551.5 L1774.1,550.9 L1774.4,556.0 L1774.7,546.1 L1775.0,563.3 L1775.3,555.2 L1775.6,555.1 L1775.9,557.4 L1776.2,553.7 L1776.4,560.3 L1776.7,558.0 L1777.0,555.0 L1777.3,542.2 L1777.6,559.5 L1777.9,559.1 L1778.2,543.7 L1778.5,560.1 L1778.8,555.9 L1779.1,559.6 L1779.4,550.9 L1779.7,557.9 L1780.0,558.0 L1780.2,561.7 L1780.5,554.4 L1780.8,557.6 L1781.1,556.5 L1781.4,548.4 L1781.7,555.9 L1782.0,556.9 L1782.3,556.8 L1782.6,557.5 L1782.9,560.5 L1783.2,556.6 L1783.5,553.9 L1783.8,557.6 L1784.0,557.6 L1784.3,561.7 L1784.6,553.5 L1784.9,559.8 L1785.2,558.8 L1785.5,556.6 L1785.8,556.3 L1786.1,556.7 L1786.4,554.7 L1786.7,551.8 L1787.0,549.5 L1787.3,556.6 L1787.6,557.5 L1787.8,557.4 L1788.1,562.1 L1788.4,558.3 L1788.7,559.8 L1789.0,556.0 L1789.3,560.9 L1789.6,555.1 L1789.9,557.1 L1790.2,551.0 L1790.5,549.8 L1790.8,556.3 L1791.1,546.4 L1791.4,556.0 L1791.7,558.1 L1791.9,560.6 L1792.2,561.7 L1792.5,557.7 L1792.8,551.5 L1793.1,559.7 L1793.4,545.6 L1793.7,561.1 L1794.0,560.6 L1794.3,553.1 L1794.6,554.9 L1794.9,562.4 L1795.2,558.2 L1795.5,561.2 L1795.7,557.4 L1796.0,559.7 L1796.3,557.0 L1796.6,554.9 L1796.9,559.1 L1797.2,562.1 L1797.5,557.3 L1797.8,552.7 L1798.1,554.5 L1798.4,559.6 L1798.7,557.3 L1799.0,561.7 L1799.3,561.5 L1799.5,553.7 L1799.8,557.2 L1800.1,558.1 L1800.4,554.9 L1800.7,551.9 L1801.0,559.2 L1801.3,562.7 L1801.6,558.8 L1801.9,563.2 L1802.2,559.7 L1802.5,555.8 L1802.8,562.8 L1803.1,561.7 L1803.3,555.0 L1803.6,562.3 L1803.9,559.5 L1804.2,561.1 L1804.5,559.7 L1804.8,562.6 L1805.1,559.3 L1805.4,561.2 L1805.7,560.3 L1806.0,559.7 L1806.3,551.4 L1806.6,558.6 L1806.9,556.7 L1807.1,560.1 L1807.4,557.0 L1807.7,561.2 L1808.0,560.0 L1808.3,557.4 L1808.6,545.6 L1808.9,559.5 L1809.2,554.2 L1809.5,554.2 L1809.8,553.2 L1810.1,561.8 L1810.4,560.5 L1810.7,552.5 L1810.9,556.4 L1811.2,555.9 L1811.5,552.6 L1811.8,556.5 L1812.1,557.6 L1812.4,543.5 L1812.7,555.1 L1813.0,556.2 L1813.3,557.7 L1813.6,559.0 L1813.9,547.5 L1814.2,555.4 L1814.5,551.8 L1814.7,545.3 L1815.0,551.9 L1815.3,551.3 L1815.6,549.2 L1815.9,552.5 L1816.2,548.6 L1816.5,543.1 L1816.8,554.6 L1817.1,552.3 L1817.4,548.9 L1817.7,533.0 L1818.0,555.0 L1818.3,561.6 L1818.5,552.0 L1818.8,558.6 L1819.1,554.4 L1819.4,561.5 L1819.7,552.0 L1820.0,558.5 L1820.3,557.6 L1820.6,552.5 L1820.9,535.8 L1821.2,542.6 L1821.5,563.0 L1821.8,550.8 L1822.1,555.6 L1822.3,550.3 L1822.6,554.5 L1822.9,559.4 L1823.2,552.5 L1823.5,546.4 L1823.8,548.6 L1824.1,559.9 L1824.4,559.0 L1824.7,553.3 L1825.0,562.1 L1825.3,552.8 L1825.6,555.8 L1825.9,552.6 L1826.1,556.0 L1826.4,561.6 L1826.7,559.6 L1827.0,557.3 L1827.3,556.5 L1827.6,553.6 L1827.9,548.0 L1828.2,559.3 L1828.5,557.2 L1828.8,559.6 L1829.1,550.0 L1829.4,550.3 L1829.7,563.7 L1830.0,549.8 L1830.2,558.1 L1830.5,563.2 L1830.8,552.8 L1831.1,561.4 L1831.4,554.0 L1831.7,544.9 L1832.0,556.5 L1832.3,560.7 L1832.6,554.5 L1832.9,555.7 L1833.2,560.0 L1833.5,541.2 L1833.8,549.0 L1834.0,560.8 L1834.3,550.9 L1834.6,562.5 L1834.9,557.1 L1835.2,532.4 L1835.5,555.0 L1835.8,554.3 L1836.1,543.5 L1836.4,549.2 L1836.7,557.0 L1837.0,551.0 L1837.3,561.7 L1837.6,552.9 L1837.8,545.0 L1838.1,553.2 L1838.4,556.5 L1838.7,553.5 L1839.0,562.7 L1839.3,556.0 L1839.6,549.8 L1839.9,561.2 L1840.2,562.1 L1840.5,559.8 L1840.8,557.4 L1841.1,554.0 L1841.4,545.8 L1841.6,561.7 L1841.9,558.3 L1842.2,548.6 L1842.5,563.1 L1842.8,555.5 L1843.1,540.0 L1843.4,562.6 L1843.7,539.8 L1844.0,550.5 L1844.3,558.0 L1844.6,555.0 L1844.9,549.5 L1845.2,541.6 L1845.4,546.6 L1845.7,558.1 L1846.0,540.5 L1846.3,562.7 L1846.6,541.7 L1846.9,549.9 L1847.2,547.8 L1847.5,556.0 L1847.8,555.5 L1848.1,561.8 L1848.4,562.3 L1848.7,542.2 L1849.0,552.0 L1849.2,546.9 L1849.5,558.3 L1849.8,553.1 L1850.1,564.9 L1850.4,559.7 L1850.7,549.5 L1851.0,553.1 L1851.3,558.4 L1851.6,547.7 L1851.9,555.7 L1852.2,548.7 L1852.5,558.1 L1852.8,552.1 L1853.0,554.2 L1853.3,553.0 L1853.6,558.5 L1853.9,560.0 L1854.2,547.9 L1854.5,551.8 L1854.8,557.6 L1855.1,560.6 L1855.4,557.6 L1855.7,545.4 L1856.0,554.3 L1856.3,555.7 L1856.6,559.6 L1856.8,561.8 L1857.1,545.9 L1857.4,559.1 L1857.7,554.7 L1858.0,557.8 L1858.3,550.9 L1858.6,560.2 L1858.9,551.7 L1859.2,556.7 L1859.5,560.4 L1859.8,556.1 L1860.1,560.5 L1860.4,556.2 L1860.6,554.9 L1860.9,559.8 L1861.2,559.1 L1861.5,548.0 L1861.8,555.2 L1862.1,561.3 L1862.4,536.9 L1862.7,555.7 L1863.0,554.2 L1863.3,554.0 L1863.6,561.8 L1863.9,560.7 L1864.2,559.1 L1864.5,561.8 L1864.7,549.9 L1865.0,552.8 L1865.3,554.9 L1865.6,550.0 L1865.9,536.6 L1866.2,559.4 L1866.5,556.6 L1866.8,558.1 L1867.1,560.4 L1867.4,556.5 L1867.7,551.1 L1868.0,558.8 L1868.3,549.2 L1868.5,560.4 L1868.8,545.7 L1869.1,560.4 L1869.4,540.7 L1869.7,559.2 L1870.0,553.4 L1870.3,558.9 L1870.6,555.4 L1870.9,553.6 L1871.2,555.7 L1871.5,560.0 L1871.8,547.3 L1872.1,555.8 L1872.3,550.2 L1872.6,547.8 L1872.9,554.5 L1873.2,557.2 L1873.5,555.7 L1873.8,549.8 L1874.1,558.6 L1874.4,553.8 L1874.7,554.5 L1875.0,548.4 L1875.3,558.6 L1875.6,555.3 L1875.9,546.3 L1876.1,558.9 L1876.4,554.7 L1876.7,549.2 L1877.0,551.9 L1877.3,554.4 L1877.6,557.7 L1877.9,554.3 L1878.2,557.2 L1878.5,548.0 L1878.8,552.7 L1879.1,554.3 L1879.4,535.2 L1879.7,561.5 L1879.9,565.0 L1880.2,540.6 L1880.5,550.9 L1880.8,562.7 L1881.1,545.2 L1881.4,560.7 L1881.7,552.2 L1882.0,560.0 L1882.3,562.1 L1882.6,555.8 L1882.9,557.4 L1883.2,553.3 L1883.5,555.9 L1883.7,559.7 L1884.0,558.2 L1884.3,550.2 L1884.6,552.2 L1884.9,552.0 L1885.2,553.2 L1885.5,549.7 L1885.8,556.1 L1886.1,556.3 L1886.4,557.0 L1886.7,548.9 L1887.0,559.3 L1887.3,542.3 L1887.5,559.4 L1887.8,562.0 L1888.1,547.3 L1888.4,557.0 L1888.7,553.9 L1889.0,561.1 L1889.3,549.0 L1889.6,556.1 L1889.9,551.2 L1890.2,548.5 L1890.5,542.5 L1890.8,536.2 L1891.1,555.6 L1891.3,555.6 L1891.6,551.2 L1891.9,559.8 L1892.2,556.5 L1892.5,545.6 L1892.8,558.1 L1893.1,564.3 L1893.4,556.3 L1893.7,559.7 L1894.0,544.9 L1894.3,562.4 L1894.6,559.9 L1894.9,556.3 L1895.1,550.1 L1895.4,560.5 L1895.7,557.3 L1896.0,560.5 L1896.3,555.3 L1896.6,549.2 L1896.9,556.0 L1897.2,561.6 L1897.5,561.3 L1897.8,546.9 L1898.1,558.4 L1898.4,554.5 L1898.7,556.3 L1899.0,557.1 L1899.2,549.2 L1899.5,559.7 L1899.8,557.0 L1900.1,555.4 L1900.4,560.8 L1900.7,546.2 L1901.0,547.9 L1901.3,556.4 L1901.6,551.0 L1901.9,557.8 L1902.2,560.2 L1902.5,547.5 L1902.8,562.0 L1903.0,561.1 L1903.3,551.8 L1903.6,550.6 L1903.9,554.1 L1904.2,553.0 L1904.5,560.3 L1904.8,559.3 L1905.1,553.2 L1905.4,557.8 L1905.7,553.5 L1906.0,551.2 L1906.3,554.5 L1906.6,555.9 L1906.8,561.2 L1907.1,562.0 L1907.4,545.4 L1907.7,562.3 L1908.0,558.5 L1908.3,549.0 L1908.6,556.4 L1908.9,553.8 L1909.2,556.7 L1909.5,546.8 L1909.8,560.3 L1910.1,558.7 L1910.4,562.2 L1910.6,555.3 L1910.9,562.2 L1911.2,560.1 L1911.5,557.6 L1911.8,553.3 L1912.1,563.7 L1912.4,561.7 L1912.7,561.5 L1913.0,561.4 L1913.3,555.2 L1913.6,559.4 L1913.9,550.1 L1914.2,556.1 L1914.4,556.0 L1914.7,556.1 L1915.0,559.3 L1915.3,555.3 L1915.6,552.2 L1915.9,561.8 L1916.2,547.7 L1916.5,560.6 L1916.8,555.1 L1917.1,559.2 L1917.4,558.7 L1917.7,549.2 L1918.0,548.3 L1918.2,554.1 L1918.5,544.4 L1918.8,550.4 L1919.1,554.6 L1919.4,552.2 L1919.7,540.5 L1920.0,560.1 L1920.3,549.2 L1920.6,557.5 L1920.9,552.1 L1921.2,557.5 L1921.5,555.8 L1921.8,557.0 L1922.0,559.2 L1922.3,558.1 L1922.6,560.0 L1922.9,559.6 L1923.2,556.9 L1923.5,561.1 L1923.8,560.3 L1924.1,564.4 L1924.4,557.0 L1924.7,556.8 L1925.0,558.8 L1925.3,554.9 L1925.6,560.2 L1925.8,556.9 L1926.1,559.8 L1926.4,561.6 L1926.7,553.6 L1927.0,558.4 L1927.3,560.0 L1927.6,555.0 L1927.9,555.3 L1928.2,543.5 L1928.5,552.6 L1928.8,554.7 L1929.1,561.1 L1929.4,557.1 L1929.6,558.1 L1929.9,559.2 L1930.2,551.9 L1930.5,550.4 L1930.8,555.8 L1931.1,554.8 L1931.4,558.4 L1931.7,551.1 L1932.0,555.8 L1932.3,554.8 L1932.6,547.2 L1932.9,560.2 L1933.2,557.3 L1933.5,558.2 L1933.7,560.8 L1934.0,559.5 L1934.3,554.8 L1934.6,561.0 L1934.9,545.2 L1935.2,557.5 L1935.5,559.5 L1935.8,558.5 L1936.1,555.0 L1936.4,548.1 L1936.7,557.7 L1937.0,551.6 L1937.3,559.2 L1937.5,558.7 L1937.8,557.5 L1938.1,552.2 L1938.4,556.4 L1938.7,558.6 L1939.0,557.8 L1939.3,558.5 L1939.6,539.8 L1939.9,555.5 L1940.2,554.6 L1940.5,560.9 L1940.8,555.3 L1941.1,532.8 L1941.3,553.8 L1941.6,555.0 L1941.9,555.2 L1942.2,551.4 L1942.5,557.3 L1942.8,554.6 L1943.1,564.0 L1943.4,558.5 L1943.7,554.7 L1944.0,556.5 L1944.3,552.0 L1944.6,556.0 L1944.9,554.1 L1945.1,560.6 L1945.4,559.5 L1945.7,560.0 L1946.0,558.8 L1946.3,563.4 L1946.6,553.5 L1946.9,556.2 L1947.2,560.2 L1947.5,548.2 L1947.8,555.2 L1948.1,563.9 L1948.4,561.3 L1948.7,552.6 L1948.9,547.2 L1949.2,550.0 L1949.5,541.0 L1949.8,555.6 L1950.1,546.6 L1950.4,558.9 L1950.7,551.8 L1951.0,554.3 L1951.3,560.4 L1951.6,559.4 L1951.9,531.3 L1952.2,543.5 L1952.5,556.4 L1952.7,540.1 L1953.0,550.0 L1953.3,554.8 L1953.6,557.0 L1953.9,556.8 L1954.2,555.7 L1954.5,558.4 L1954.8,554.7 L1955.1,561.5 L1955.4,554.5 L1955.7,555.9 L1956.0,559.9 L1956.3,555.7 L1956.5,552.9 L1956.8,563.3 L1957.1,549.2 L1957.4,557.0 L1957.7,561.8 L1958.0,557.7 L1958.3,556.5 L1958.6,561.3 L1958.9,559.9 L1959.2,558.0 L1959.5,555.9 L1959.8,560.2 L1960.1,554.5 L1960.3,558.8 L1960.6,560.1 L1960.9,553.9 L1961.2,558.3 L1961.5,559.6 L1961.8,561.9 L1962.1,561.3 L1962.4,557.4 L1962.7,555.8 L1963.0,559.2 L1963.3,558.6 L1963.6,560.7 L1963.9,557.9 L1964.1,560.3 L1964.4,561.4 L1964.7,561.4 L1965.0,558.0 L1965.3,559.3 L1965.6,559.5 L1965.9,555.1 L1966.2,561.4 L1966.5,550.6 L1966.8,560.4 L1967.1,553.6 L1967.4,562.7 L1967.7,561.8 L1968.0,557.8 L1968.2,559.8 L1968.5,555.1 L1968.8,556.6 L1969.1,560.2 L1969.4,560.7 L1969.7,558.7 L1970.0,556.6 L1970.3,558.2 L1970.6,555.4 L1970.9,556.1 L1971.2,558.4 L1971.5,545.5 L1971.8,555.8 L1972.0,552.3 L1972.3,559.5 L1972.6,561.8 L1972.9,554.5 L1973.2,558.0 L1973.5,556.1 L1973.8,560.2 L1974.1,554.3 L1974.4,562.9 L1974.7,547.2 L1975.0,552.7 L1975.3,552.4 L1975.6,557.6 L1975.8,559.9 L1976.1,546.6 L1976.4,549.1 L1976.7,558.6 L1977.0,558.0 L1977.3,557.1 L1977.6,560.3 L1977.9,556.0 L1978.2,555.7 L1978.5,556.3 L1978.8,552.8 L1979.1,551.4 L1979.4,555.8 L1979.6,554.3 L1979.9,559.3 L1980.2,560.9 L1980.5,559.6 L1980.8,553.4 L1981.1,555.2 L1981.4,552.2 L1981.7,556.2 L1982.0,558.0 L1982.3,557.6 L1982.6,552.2 L1982.9,558.2 L1983.2,551.4 L1983.4,560.2 L1983.7,554.8 L1984.0,556.8 L1984.3,561.6 L1984.6,562.2 L1984.9,558.7 L1985.2,553.8 L1985.5,550.5 L1985.8,562.2 L1986.1,559.5 L1986.4,554.9 L1986.7,562.2 L1987.0,557.6 L1987.2,557.5 L1987.5,560.1 L1987.8,559.7 L1988.1,550.2 L1988.4,553.9 L1988.7,556.8 L1989.0,555.8 L1989.3,560.2 L1989.6,560.9 L1989.9,559.8 L1990.2,560.4 L1990.5,559.3 L1990.8,559.1 L1991.0,554.8 L1991.3,559.0 L1991.6,561.8 L1991.9,550.2 L1992.2,564.0 L1992.5,549.1 L1992.8,555.6 L1993.1,561.6 L1993.4,558.3 L1993.7,558.7 L1994.0,562.4 L1994.3,561.9 L1994.6,559.0 L1994.8,557.8 L1995.1,559.3 L1995.4,561.3 L1995.7,560.9 L1996.0,558.1 L1996.3,559.2 L1996.6,561.0 L1996.9,555.5 L1997.2,560.0 L1997.5,559.2 L1997.8,559.4 L1998.1,555.2 L1998.4,560.6 L1998.6,558.6 L1998.9,553.4 L1999.2,561.8 L1999.5,561.6 L1999.8,556.1 L2000.1,561.9 L2000.4,558.2 L2000.7,562.6 L2001.0,555.1 L2001.3,560.2 L2001.6,555.5 L2001.9,559.9 L2002.2,554.9 L2002.5,559.2 L2002.7,558.0 L2003.0,559.1 L2003.3,561.9 L2003.6,560.7 L2003.9,559.3 L2004.2,555.5 L2004.5,560.0 L2004.8,555.3 L2005.1,556.9 L2005.4,553.1 L2005.7,554.6 L2006.0,556.6 L2006.3,557.7 L2006.5,560.1 L2006.8,559.7 L2007.1,557.4 L2007.4,559.5 L2007.7,559.4 L2008.0,555.6 L2008.3,560.3 L2008.6,558.3 L2008.9,557.7 L2009.2,557.5 L2009.5,558.6 L2009.8,557.5 L2010.1,555.6 L2010.3,555.7 L2010.6,542.4 L2010.9,557.9 L2011.2,557.9 L2011.5,559.9 L2011.8,555.1 L2012.1,551.9 L2012.4,555.9 L2012.7,552.2 L2013.0,556.4 L2013.3,558.2 L2013.6,546.7 L2013.9,557.1 L2014.1,560.6 L2014.4,552.8 L2014.7,557.7 L2015.0,556.3 L2015.3,558.4 L2015.6,559.9 L2015.9,556.6 L2016.2,563.0 L2016.5,559.2 L2016.8,561.8 L2017.1,556.9 L2017.4,559.6 L2017.7,558.9 L2017.9,556.0 L2018.2,558.7 L2018.5,544.4 L2018.8,544.3 L2019.1,560.5 L2019.4,559.3 L2019.7,552.0 L2020.0,561.9 L2020.3,551.3 L2020.6,546.8 L2020.9,560.6 L2021.2,549.0 L2021.5,552.5 L2021.7,555.6 L2022.0,556.2 L2022.3,554.0 L2022.6,542.6 L2022.9,555.2 L2023.2,556.3 L2023.5,559.8 L2023.8,562.9 L2024.1,541.6 L2024.4,558.0 L2024.7,546.8 L2025.0,562.7 L2025.3,551.4 L2025.5,551.5 L2025.8,553.0 L2026.1,548.4 L2026.4,547.6 L2026.7,561.5 L2027.0,559.0 L2027.3,560.4 L2027.6,546.2 L2027.9,559.5 L2028.2,555.4 L2028.5,547.0 L2028.8,547.8 L2029.1,550.8 L2029.3,555.0 L2029.6,555.8 L2029.9,551.3 L2030.2,544.6 L2030.5,553.9 L2030.8,556.2 L2031.1,555.3 L2031.4,545.0 L2031.7,545.6 L2032.0,560.5 L2032.3,554.7 L2032.6,560.4 L2032.9,552.1 L2033.1,542.5 L2033.4,551.9 L2033.7,554.8 L2034.0,556.9 L2034.3,547.2 L2034.6,562.0 L2034.9,547.9 L2035.2,558.8 L2035.5,549.6 L2035.8,559.1 L2036.1,551.3 L2036.4,545.1 L2036.7,550.1 L2036.9,556.2 L2037.2,536.4 L2037.5,552.4 L2037.8,556.5 L2038.1,555.5 L2038.4,561.3 L2038.7,549.1 L2039.0,552.8 L2039.3,536.1 L2039.6,557.2 L2039.9,545.7 L2040.2,556.3 L2040.5,558.0 L2040.8,561.6 L2041.0,542.5 L2041.3,561.1 L2041.6,561.0 L2041.9,557.2 L2042.2,556.6 L2042.5,544.5 L2042.8,554.3 L2043.1,553.7 L2043.4,561.3 L2043.7,556.3 L2044.0,552.5 L2044.3,562.6 L2044.6,553.4 L2044.8,548.8 L2045.1,555.2 L2045.4,558.2 L2045.7,559.6 L2046.0,558.7 L2046.3,559.3 L2046.6,556.5 L2046.9,560.9 L2047.2,562.3 L2047.5,557.0 L2047.8,556.0 L2048.1,545.1 L2048.4,551.2 L2048.6,557.7 L2048.9,559.2 L2049.2,559.2 L2049.5,560.3 L2049.8,553.3 L2050.1,553.6 L2050.4,559.4 L2050.7,562.9 L2051.0,559.3 L2051.3,553.8 L2051.6,548.8 L2051.9,559.7 L2052.2,553.5 L2052.4,555.4 L2052.7,558.2 L2053.0,551.0 L2053.3,549.2 L2053.6,552.3 L2053.9,553.1 L2054.2,559.9 L2054.5,545.1 L2054.8,556.1 L2055.1,546.7 L2055.4,544.6 L2055.7,540.8 L2056.0,557.2 L2056.2,550.1 L2056.5,550.4 L2056.8,544.5 L2057.1,562.3 L2057.4,552.4 L2057.7,539.1 L2058.0,547.0 L2058.3,546.4 L2058.6,555.5 L2058.9,552.9 L2059.2,554.8 L2059.5,559.5 L2059.8,551.6 L2060.0,560.7 L2060.3,552.3 L2060.6,558.7 L2060.9,548.3 L2061.2,559.9 L2061.5,553.3 L2061.8,556.9 L2062.1,556.2 L2062.4,549.7 L2062.7,549.9 L2063.0,557.1 L2063.3,559.0 L2063.6,556.8 L2063.8,563.0 L2064.1,552.3 L2064.4,555.8 L2064.7,553.5 L2065.0,550.9 L2065.3,548.5 L2065.6,557.8 L2065.9,557.3 L2066.2,552.9 L2066.5,562.9 L2066.8,562.3 L2067.1,558.7 L2067.4,565.2 L2067.6,555.0 L2067.9,558.5 L2068.2,537.8 L2068.5,555.5 L2068.8,563.4 L2069.1,561.1 L2069.4,557.9 L2069.7,553.4 L2070.0,551.2 L2070.3,562.9 L2070.6,557.3 L2070.9,541.9 L2071.2,554.2 L2071.4,557.2 L2071.7,561.2 L2072.0,536.8 L2072.3,553.6 L2072.6,560.5 L2072.9,555.6 L2073.2,563.5 L2073.5,557.3 L2073.8,562.3 L2074.1,557.8 L2074.4,552.7 L2074.7,556.0 L2075.0,557.2 L2075.3,554.6 L2075.5,556.3 L2075.8,556.3 L2076.1,554.3 L2076.4,546.5 L2076.7,555.6 L2077.0,555.6 L2077.3,540.3 L2077.6,555.3 L2077.9,535.6 L2078.2,562.3 L2078.5,560.3 L2078.8,545.4 L2079.1,550.3 L2079.3,557.1 L2079.6,559.0 L2079.9,561.8 L2080.2,553.8 L2080.5,548.4 L2080.8,561.2 L2081.1,562.5 L2081.4,561.5 L2081.7,544.2 L2082.0,559.1 L2082.3,548.0 L2082.6,561.4 L2082.9,558.1 L2083.1,554.1 L2083.4,550.1 L2083.7,558.4 L2084.0,560.1 L2084.3,559.5 L2084.6,560.8 L2084.9,548.8 L2085.2,556.8 L2085.5,558.1 L2085.8,556.9 L2086.1,550.0 L2086.4,559.8 L2086.7,559.8 L2086.9,557.1 L2087.2,558.1 L2087.5,560.2 L2087.8,558.1 L2088.1,560.7 L2088.4,564.3 L2088.7,554.6 L2089.0,550.6 L2089.3,549.1 L2089.6,555.0 L2089.9,558.1 L2090.2,557.0 L2090.5,561.3 L2090.7,551.3 L2091.0,560.3 L2091.3,558.3 L2091.6,562.9 L2091.9,561.2 L2092.2,561.8 L2092.5,558.8 L2092.8,557.5 L2093.1,560.4 L2093.4,550.6 L2093.7,554.1 L2094.0,558.7 L2094.3,556.2 L2094.5,556.9 L2094.8,556.9 L2095.1,555.3 L2095.4,554.8 L2095.7,556.7 L2096.0,552.9 L2096.3,557.0 L2096.6,550.0 L2096.9,553.9 L2097.2,559.6 L2097.5,557.6 L2097.8,555.3 L2098.1,559.4 L2098.3,560.7 L2098.6,559.7 L2098.9,561.1 L2099.2,562.3 L2099.5,560.8 L2099.8,559.9 L2100.1,556.4 L2100.4,563.8 L2100.7,555.3 L2101.0,559.9 L2101.3,555.7 L2101.6,556.5 L2101.9,559.7 L2102.1,556.4 L2102.4,554.1 L2102.7,560.2 L2103.0,560.0 L2103.3,553.9 L2103.6,561.2 L2103.9,562.3 L2104.2,561.9 L2104.5,555.7 L2104.8,555.0 L2105.1,561.8 L2105.4,563.6 L2105.7,561.3 L2105.9,558.8 L2106.2,560.9 L2106.5,559.8 L2106.8,556.4 L2107.1,561.7 L2107.4,561.7 L2107.7,559.7 L2108.0,558.2 L2108.3,558.2 L2108.6,560.5 L2108.9,559.1 L2109.2,553.7 L2109.5,559.9 L2109.8,561.2 L2110.0,557.9 L2110.3,557.2 L2110.6,552.0 L2110.9,556.8 L2111.2,553.7 L2111.5,557.3 L2111.8,561.4 L2112.1,551.3 L2112.4,558.9 L2112.7,561.1 L2113.0,562.2 L2113.3,559.7 L2113.6,559.2 L2113.8,553.8 L2114.1,562.9 L2114.4,561.0 L2114.7,558.5 L2115.0,558.3 L2115.3,555.9 L2115.6,561.5 L2115.9,560.7 L2116.2,560.3 L2116.5,561.2 L2116.8,558.4 L2117.1,555.8 L2117.4,556.1 L2117.6,559.9 L2117.9,552.4 L2118.2,554.5 L2118.5,552.2 L2118.8,552.5 L2119.1,547.1 L2119.4,559.6 L2119.7,559.3 L2120.0,545.9 L2120.3,560.4 L2120.6,559.5 L2120.9,561.1 L2121.2,551.2 L2121.4,562.2 L2121.7,556.6 L2122.0,552.0 L2122.3,556.5 L2122.6,557.8 L2122.9,557.7 L2123.2,539.9 L2123.5,562.0 L2123.8,556.2 L2124.1,559.3 L2124.4,558.6 L2124.7,545.5 L2125.0,558.9 L2125.2,554.2 L2125.5,552.8 L2125.8,557.6 L2126.1,560.1 L2126.4,558.1 L2126.7,560.4 L2127.0,559.9 L2127.3,555.9 L2127.6,553.5 L2127.9,554.4 L2128.2,546.0 L2128.5,559.1 L2128.8,555.1 L2129.0,556.0 L2129.3,557.3 L2129.6,547.7 L2129.9,557.5 L2130.2,553.7 L2130.5,546.7 L2130.8,551.9 L2131.1,558.1 L2131.4,554.4 L2131.7,562.2 L2132.0,545.2 L2132.3,552.7 L2132.6,555.6 L2132.8,562.5 L2133.1,550.2 L2133.4,557.1 L2133.7,545.5 L2134.0,537.7 L2134.3,559.8 L2134.6,554.7 L2134.9,555.2 L2135.2,560.1 L2135.5,560.3 L2135.8,555.4 L2136.1,561.6 L2136.4,552.9 L2136.6,551.9 L2136.9,548.5 L2137.2,559.6 L2137.5,555.8 L2137.8,556.8 L2138.1,553.5 L2138.4,563.5 L2138.7,563.9 L2139.0,560.9 L2139.3,545.4 L2139.6,554.7 L2139.9,561.2 L2140.2,550.3 L2140.4,561.7 L2140.7,551.6 L2141.0,559.5 L2141.3,556.0 L2141.6,563.2 L2141.9,555.1 L2142.2,562.2 L2142.5,560.3 L2142.8,550.3 L2143.1,557.7 L2143.4,558.5 L2143.7,557.6 L2144.0,557.3 L2144.3,558.4 L2144.5,554.3 L2144.8,559.1 L2145.1,558.6 L2145.4,559.4 L2145.7,559.0 L2146.0,559.7 L2146.3,555.9 L2146.6,560.1 L2146.9,557.3 L2147.2,561.1 L2147.5,561.8 L2147.8,556.4 L2148.1,557.7 L2148.3,546.7 L2148.6,560.6 L2148.9,555.8 L2149.2,551.1 L2149.5,556.3 L2149.8,558.0 L2150.1,560.0 L2150.4,562.6 L2150.7,555.8 L2151.0,558.6 L2151.3,550.7 L2151.6,552.3 L2151.9,557.4 L2152.1,560.0 L2152.4,557.5 L2152.7,562.9 L2153.0,556.5 L2153.3,559.8 L2153.6,559.3 L2153.9,553.6 L2154.2,561.5 L2154.5,564.7 L2154.8,554.2 L2155.1,563.0 L2155.4,556.8 L2155.7,558.7 L2155.9,558.8 L2156.2,559.6 L2156.5,558.3 L2156.8,561.8 L2157.1,561.0 L2157.4,554.9 L2157.7,551.4 L2158.0,556.6 L2158.3,551.4 L2158.6,558.4 L2158.9,560.6 L2159.2,558.1 L2159.5,562.3 L2159.7,549.9 L2160.0,558.1 L2160.3,556.7 L2160.6,549.9 L2160.9,562.4 L2161.2,559.8 L2161.5,554.9 L2161.8,561.3 L2162.1,553.4 L2162.4,561.4 L2162.7,558.4 L2163.0,556.9 L2163.3,556.3 L2163.5,554.0 L2163.8,556.2 L2164.1,558.4 L2164.4,553.8 L2164.7,560.0 L2165.0,553.2 L2165.3,549.0 L2165.6,553.9 L2165.9,556.5 L2166.2,561.6 L2166.5,561.3 L2166.8,561.6 L2167.1,557.9 L2167.3,562.9 L2167.6,560.9 L2167.9,557.3 L2168.2,562.4 L2168.5,558.5 L2168.8,560.1 L2169.1,557.1 L2169.4,559.0 L2169.7,558.2 L2170.0,562.4 L2170.3,553.9 L2170.6,556.3 L2170.9,562.7 L2171.1,559.8 L2171.4,558.3 L2171.7,562.0 L2172.0,560.5 L2172.3,556.0 L2172.6,561.4 L2172.9,552.8 L2173.2,560.2 L2173.5,560.1 L2173.8,561.8 L2174.1,556.2 L2174.4,558.6 L2174.7,561.8 L2174.9,555.8 L2175.2,554.0 L2175.5,562.8 L2175.8,560.5 L2176.1,561.4 L2176.4,544.3 L2176.7,558.2 L2177.0,553.3 L2177.3,544.8 L2177.6,555.5 L2177.9,559.3 L2178.2,557.9 L2178.5,560.2 L2178.8,560.7 L2179.0,547.9 L2179.3,560.4 L2179.6,550.1 L2179.9,560.5 L2180.2,551.6 L2180.5,557.2 L2180.8,552.7 L2181.1,551.2 L2181.4,550.3 L2181.7,554.2 L2182.0,559.3 L2182.3,555.0 L2182.6,560.6 L2182.8,557.0 L2183.1,550.6 L2183.4,556.0 L2183.7,547.9 L2184.0,558.0 L2184.3,558.5 L2184.6,556.0 L2184.9,561.0 L2185.2,561.2 L2185.5,562.3 L2185.8,555.7 L2186.1,542.2 L2186.4,559.1 L2186.6,558.8 L2186.9,554.6 L2187.2,550.3 L2187.5,549.1 L2187.8,551.8 L2188.1,560.3 L2188.4,559.7 L2188.7,553.5 L2189.0,558.1 L2189.3,559.2 L2189.6,558.2 L2189.9,557.3 L2190.2,555.1 L2190.4,561.5 L2190.7,558.5 L2191.0,554.8 L2191.3,555.6 L2191.6,561.6 L2191.9,544.3 L2192.2,554.8 L2192.5,543.6 L2192.8,563.4 L2193.1,560.2 L2193.4,550.7 L2193.7,536.9 L2194.0,556.0 L2194.2,559.3 L2194.5,562.0 L2194.8,560.5 L2195.1,560.8 L2195.4,564.8 L2195.7,559.5 L2196.0,562.5 L2196.3,551.5 L2196.6,562.1 L2196.9,558.5 L2197.2,560.2 L2197.5,552.5 L2197.8,561.0 L2198.0,560.2 L2198.3,560.6 L2198.6,555.2 L2198.9,554.7 L2199.2,557.6 L2199.5,555.9 L2199.8,553.8 L2200.1,552.1 L2200.4,553.7 L2200.7,553.7 L2201.0,560.6 L2201.3,556.0 L2201.6,556.7 L2201.8,553.6 L2202.1,552.7 L2202.4,545.3 L2202.7,548.5 L2203.0,558.7 L2203.3,553.1 L2203.6,554.9 L2203.9,559.3 L2204.2,558.5 L2204.5,550.3 L2204.8,556.5 L2205.1,556.1 L2205.4,550.0 L2205.6,557.7 L2205.9,548.1 L2206.2,551.6 L2206.5,549.6 L2206.8,555.3 L2207.1,559.1 L2207.4,554.9 L2207.7,560.1 L2208.0,560.9 L2208.3,555.6 L2208.6,557.8 L2208.9,558.9 L2209.2,561.8 L2209.4,559.4 L2209.7,561.0 L2210.0,558.3 L2210.3,560.8 L2210.6,560.8 L2210.9,562.9 L2211.2,554.7 L2211.5,553.1 L2211.8,558.0 L2212.1,562.9 L2212.4,556.2 L2212.7,558.9 L2213.0,560.6 L2213.3,555.0 L2213.5,552.4 L2213.8,552.4 L2214.1,559.4 L2214.4,554.3 L2214.7,559.5 L2215.0,551.7 L2215.3,552.3 L2215.6,561.3 L2215.9,559.6 L2216.2,553.0 L2216.5,560.3 L2216.8,560.7 L2217.1,562.0 L2217.3,564.0 L2217.6,559.5 L2217.9,559.7 L2218.2,556.5 L2218.5,558.9 L2218.8,559.9 L2219.1,562.7 L2219.4,561.1 L2219.7,561.1 L2220.0,559.3 L2220.3,559.3 L2220.6,559.1 L2220.9,555.1 L2221.1,558.8 L2221.4,560.0 L2221.7,561.6 L2222.0,555.9 L2222.3,555.8 L2222.6,556.7 L2222.9,555.2 L2223.2,557.1 L2223.5,558.2 L2223.8,556.0 L2224.1,557.0 L2224.4,559.9 L2224.7,559.4 L2224.9,557.2 L2225.2,560.7 L2225.5,563.5 L2225.8,558.1 L2226.1,557.9 L2226.4,555.5 L2226.7,558.6 L2227.0,562.6 L2227.3,558.3 L2227.6,555.3 L2227.9,560.8 L2228.2,557.0 L2228.5,563.0 L2228.7,557.4 L2229.0,559.8 L2229.3,556.0 L2229.6,556.9 L2229.9,558.6 L2230.2,561.7 L2230.5,556.6 L2230.8,555.5 L2231.1,560.1 L2231.4,558.4 L2231.7,558.7 L2232.0,557.9 L2232.3,558.0 L2232.5,556.7 L2232.8,559.3 L2233.1,558.7 L2233.4,560.2 L2233.7,558.5 L2234.0,561.9 L2234.3,555.2 L2234.6,558.8 L2234.9,560.6 L2235.2,559.6 L2235.5,562.1 L2235.8,561.9 L2236.1,558.7 L2236.3,560.5 L2236.6,556.9 L2236.9,551.3 L2237.2,554.0 L2237.5,557.4 L2237.8,559.1 L2238.1,556.0 L2238.4,556.6 L2238.7,549.6 L2239.0,556.8 L2239.3,555.5 L2239.6,557.4 L2239.9,550.6 L2240.1,556.5 L2240.4,560.9 L2240.7,557.9 L2241.0,558.9 L2241.3,553.6 L2241.6,552.2 L2241.9,557.8 L2242.2,560.0 L2242.5,557.0 L2242.8,561.0 L2243.1,553.9 L2243.4,561.8 L2243.7,557.9 L2243.9,552.2 L2244.2,555.2 L2244.5,561.4 L2244.8,549.1 L2245.1,562.6 L2245.4,555.2 L2245.7,557.3 L2246.0,550.7 L2246.3,553.1 L2246.6,555.9 L2246.9,559.2 L2247.2,560.2 L2247.5,561.9 L2247.8,555.2 L2248.0,563.0 L2248.3,554.2 L2248.6,556.4 L2248.9,561.4 L2249.2,560.4 L2249.5,560.9 L2249.8,561.0 L2250.1,560.4 L2250.4,561.8 L2250.7,555.6 L2251.0,552.5 L2251.3,552.8 L2251.6,558.6 L2251.8,561.7 L2252.1,551.3 L2252.4,548.5 L2252.7,555.9 L2253.0,556.6 L2253.3,563.8 L2253.6,552.8 L2253.9,559.0 L2254.2,550.3 L2254.5,551.0 L2254.8,540.3 L2255.1,552.8 L2255.4,552.0 L2255.6,551.8 L2255.9,549.2 L2256.2,555.3 L2256.5,555.2 L2256.8,557.2 L2257.1,546.8 L2257.4,550.3 L2257.7,551.2 L2258.0,555.3 L2258.3,555.4 L2258.6,552.9 L2258.9,553.1 L2259.2,549.3 L2259.4,550.9 L2259.7,549.9 L2260.0,545.1 L2260.3,554.7 L2260.6,553.9 L2260.9,547.5 L2261.2,555.3 L2261.5,553.8 L2261.8,559.0 L2262.1,560.0 L2262.4,552.4 L2262.7,559.3 L2263.0,551.6 L2263.2,555.8 L2263.5,538.5 L2263.8,553.0 L2264.1,548.4 L2264.4,548.4 L2264.7,554.1 L2265.0,555.2" fill="none" stroke="#e74c3c" stroke-width="1.4" stroke-linejoin="round"/><circle cx="1951.9" cy="531.3" r="1.8" fill="#ff7f0e"/><circle cx="2067.4" cy="565.2" r="1.8" fill="#ff7f0e"/><circle cx="2265.0" cy="555.2" r="1.8" fill="#ff7f0e"/></svg>
<svg class="b" style="left:0.00px;top:0.00px;" width="1" height="1" viewBox="0 0 1 1"><path d="M1563.6,591.2 L1565.1,591.3 L1566.6,591.9 L1568.1,591.0 L1569.6,594.6 L1571.1,594.7 L1572.6,594.2 L1574.1,595.5 L1575.6,595.6 L1577.1,595.0 L1578.6,596.1 L1580.1,595.2 L1581.6,595.2 L1583.1,594.8 L1584.6,595.7 L1586.1,595.2 L1587.6,594.4 L1589.1,592.3 L1590.6,592.2 L1592.1,591.7 L1593.6,593.1 L1595.1,592.8 L1596.6,593.2 L1598.1,593.4 L1599.6,591.8 L1601.1,592.0 L1602.6,591.8 L1604.1,588.2 L1605.6,587.1 L1607.1,587.1 L1608.6,588.9 L1610.1,588.6 L1611.6,589.4 L1613.1,589.3 L1614.6,589.1 L1616.1,589.4 L1617.6,589.2 L1619.1,590.1 L1620.6,588.8 L1622.1,589.2 L1623.6,589.7 L1625.1,590.7 L1626.6,588.9 L1628.1,588.6 L1629.6,588.9 L1631.1,590.0 L1632.6,589.1 L1634.1,590.1 L1635.6,587.8 L1637.1,589.9 L1638.6,589.8 L1640.1,588.0 L1641.6,589.2 L1643.1,590.2 L1644.6,589.7 L1646.1,590.5 L1647.6,591.8 L1649.1,590.5 L1650.6,590.4 L1652.1,590.3 L1653.6,591.6 L1655.1,591.2 L1656.6,591.5 L1658.1,591.8 L1659.6,591.5 L1661.1,588.0 L1662.6,585.7 L1664.1,584.7 L1665.6,586.8 L1667.1,585.5 L1668.6,586.1 L1670.1,584.6 L1671.6,583.6 L1673.1,584.1 L1674.6,585.2 L1676.1,585.8 L1677.6,586.5 L1679.1,587.5 L1680.6,585.6 L1682.1,584.7 L1683.6,583.3 L1685.1,582.1 L1686.6,582.3 L1688.1,582.3 L1689.6,582.7 L1691.1,584.0 L1692.6,584.4 L1694.1,585.9 L1695.6,586.7 L1697.1,585.4 L1698.6,587.0 L1700.1,585.6 L1701.6,586.3 L1703.1,584.0 L1704.6,582.7 L1706.1,583.2 L1707.6,583.2 L1709.1,583.4 L1710.6,583.8 L1712.1,584.0 L1713.6,583.6 L1715.1,584.3 L1716.6,584.5 L1718.1,584.6 L1719.6,584.1 L1721.1,585.1 L1722.6,583.4 L1724.1,582.6 L1725.6,584.0 L1727.1,582.0 L1728.6,583.5 L1730.1,582.4 L1731.6,583.4 L1733.1,582.0 L1734.6,584.1 L1736.1,583.5 L1737.6,582.4 L1739.1,583.3 L1740.6,581.7 L1742.1,580.3 L1743.6,578.8 L1745.1,578.5 L1746.6,580.0 L1748.1,582.2 L1749.6,583.0 L1751.1,581.6 L1752.6,581.4 L1754.1,581.0 L1755.6,580.1 L1757.1,580.3 L1758.6,580.3 L1760.1,580.4 L1761.6,580.5 L1763.1,578.6 L1764.6,579.2 L1766.1,578.1 L1767.6,579.5 L1769.1,577.6 L1770.6,577.7 L1772.1,577.9 L1773.6,579.2 L1775.1,581.2 L1776.6,582.0 L1778.1,582.7 L1779.6,581.2 L1781.1,582.6 L1782.6,581.3 L1784.1,583.0 L1785.6,581.4 L1787.1,582.7 L1788.6,581.4 L1790.1,582.9 L1791.6,581.8 L1793.1,581.9 L1794.6,582.1 L1796.1,581.8 L1797.6,582.0 L1799.1,582.2 L1800.6,581.8 L1802.1,580.5 L1803.6,578.9 L1805.1,578.5 L1806.6,578.2 L1808.1,576.2 L1809.6,578.0 L1811.1,577.5 L1812.6,577.8 L1814.1,578.9 L1815.6,579.0 L1817.1,579.2 L1818.6,578.8 L1820.1,580.1 L1821.6,580.6 L1823.1,580.2 L1824.6,582.0 L1826.1,582.1 L1827.6,581.0 L1829.1,583.1 L1830.6,582.8 L1832.1,585.1 L1833.6,585.6 L1835.1,584.9 L1836.6,585.7 L1838.1,587.0 L1839.6,587.4 L1841.1,589.3 L1842.6,589.4 L1844.1,589.4 L1845.6,590.8 L1847.1,589.7 L1848.6,592.0 L1850.1,592.4 L1851.6,591.3 L1853.1,590.5 L1854.6,591.1 L1856.1,591.7 L1857.6,590.1 L1859.1,592.9 L1860.6,596.5 L1862.1,594.4 L1863.6,596.2 L1865.1,595.7 L1866.6,596.9 L1868.1,595.8 L1869.6,597.6 L1871.1,597.0 L1872.6,595.9 L1874.1,596.1 L1875.6,597.6 L1877.1,599.1 L1878.6,598.6 L1880.1,598.9 L1881.6,599.0 L1883.1,600.0 L1884.6,600.1 L1886.1,600.4 L1887.6,599.8 L1889.1,601.7 L1890.6,602.1 L1892.1,600.5 L1893.6,603.3 L1895.1,602.4 L1896.6,601.8 L1898.1,601.1 L1899.6,603.1 L1901.1,603.3 L1902.6,602.8 L1904.1,602.1 L1905.6,603.7 L1907.1,602.2 L1908.6,601.8 L1910.1,603.8 L1911.6,602.9 L1913.1,601.7 L1914.6,600.3 L1916.1,600.7 L1917.6,598.4 L1919.1,600.2 L1920.6,599.7 L1922.1,599.4 L1923.6,599.3 L1925.1,600.9 L1926.6,600.6 L1928.1,600.8 L1929.6,601.4 L1931.1,600.3 L1932.6,600.1 L1934.1,599.8 L1935.6,600.9 L1937.1,601.8 L1938.6,601.5 L1940.1,602.4 L1941.6,601.4 L1943.1,602.3 L1944.6,602.4 L1946.1,602.4 L1947.6,604.9 L1949.1,604.5 L1950.6,603.7 L1952.1,604.1 L1953.6,604.9 L1955.1,604.3 L1956.6,605.9 L1958.1,604.4 L1959.6,604.8 L1961.1,604.0 L1962.6,604.1 L1964.1,603.2 L1965.6,602.8 L1967.1,602.9 L1968.6,602.8 L1970.1,602.8 L1971.6,602.8 L1973.1,603.5 L1974.6,603.1 L1976.1,603.0 L1977.6,604.3 L1979.1,604.0 L1980.6,606.1 L1982.1,605.9 L1983.6,604.2 L1985.1,605.2 L1986.6,604.9 L1988.1,602.0 L1989.6,602.9 L1991.1,602.7 L1992.6,601.3 L1994.1,601.0 L1995.6,598.0 L1997.1,596.1 L1998.6,592.9 L2000.1,591.5 L2001.6,588.6 L2003.1,589.5 L2004.6,588.5 L2006.1,588.3 L2007.6,587.1 L2009.1,586.3 L2010.6,586.9 L2012.1,587.7 L2013.6,588.0 L2015.1,588.2 L2016.6,589.1 L2018.1,589.1 L2019.6,591.1 L2021.1,590.6 L2022.6,588.9 L2024.1,588.8 L2025.6,587.7 L2027.1,589.1 L2028.6,587.9 L2030.1,587.2 L2031.6,587.1 L2033.1,586.7 L2034.6,585.8 L2036.1,584.4 L2037.6,583.1 L2039.1,581.5 L2040.6,582.3 L2042.1,583.7 L2043.6,581.1 L2045.1,582.6 L2046.6,583.0 L2048.1,582.2 L2049.6,583.2 L2051.1,582.5 L2052.6,584.3 L2054.1,583.2 L2055.6,583.8 L2057.1,584.4 L2058.6,583.5 L2060.1,582.2 L2061.6,582.7 L2063.1,583.3 L2064.6,582.4 L2066.1,582.3 L2067.6,581.0 L2069.1,581.6 L2070.6,581.6 L2072.1,580.8 L2073.6,581.8 L2075.1,580.0 L2076.6,579.1 L2078.1,578.4 L2079.6,580.1 L2081.1,580.3 L2082.6,582.1 L2084.1,582.8 L2085.6,584.7 L2087.1,585.5 L2088.6,585.4 L2090.1,586.9 L2091.6,588.2 L2093.1,587.2 L2094.6,589.8 L2096.1,590.3 L2097.6,590.1 L2099.1,588.2 L2100.6,587.4 L2102.1,585.4 L2103.6,585.1 L2105.1,583.6 L2106.6,583.0 L2108.1,581.6 L2109.6,582.3 L2111.1,583.2 L2112.6,581.6 L2114.1,583.4 L2115.6,581.5 L2117.1,581.6 L2118.6,583.3 L2120.1,583.6 L2121.6,584.1 L2123.1,582.8 L2124.6,587.0 L2126.1,588.8 L2127.6,588.8 L2129.1,587.0 L2130.6,586.6 L2132.1,584.7 L2133.6,585.4 L2135.1,585.3 L2136.6,586.3 L2138.1,585.2 L2139.6,585.4 L2141.1,586.6 L2142.6,587.5 L2144.1,586.7 L2145.6,586.4 L2147.1,584.8 L2148.6,584.6 L2150.1,583.1 L2151.6,582.8 L2153.1,580.6 L2154.6,579.0 L2156.1,579.1 L2157.6,578.7 L2159.1,578.4 L2160.6,580.0 L2162.1,579.6 L2163.6,578.0 L2165.1,580.1 L2166.6,580.2 L2168.1,580.5 L2169.6,582.2 L2171.1,581.3 L2172.6,580.2 L2174.1,578.7 L2175.6,579.5 L2177.1,579.0 L2178.6,576.4 L2180.1,578.0 L2181.6,578.1 L2183.1,577.5 L2184.6,578.1 L2186.1,578.1 L2187.6,577.9 L2189.1,578.4 L2190.6,579.8 L2192.1,578.0 L2193.6,579.4 L2195.1,579.8 L2196.6,579.6 L2198.1,580.3 L2199.6,580.1 L2201.1,580.9 L2202.6,582.0 L2204.1,582.6 L2205.6,580.8 L2207.1,582.2 L2208.6,578.3 L2210.1,577.5 L2211.6,576.5 L2213.1,576.5 L2214.6,577.9 L2216.1,576.8 L2217.6,578.2 L2219.1,578.2 L2220.6,576.6 L2222.1,577.7 L2223.6,576.1 L2225.1,578.1 L2226.6,575.7 L2228.1,575.7 L2229.6,575.3 L2231.1,576.1 L2232.6,577.0 L2234.1,577.5 L2235.6,578.2 L2237.1,579.5 L2238.6,580.7 L2240.1,582.6 L2241.6,580.9 L2243.1,582.2 L2244.6,582.4 L2246.1,582.5 L2247.6,583.2 L2249.1,584.0 L2250.6,585.6 L2252.1,585.5 L2253.6,585.3 L2255.1,585.8 L2256.6,585.3 L2258.1,584.7 L2259.6,584.8 L2261.1,583.7 L2262.6,584.4 L2264.1,584.1" fill="none" stroke="#f39c12" stroke-width="1.5" stroke-linejoin="round"/></svg>
<svg class="b" style="left:1463.00px;top:679.00px;" width="9" height="10" viewBox="0 0 9 10"><path d="M0.5 0.5 L8.5 5 L0.5 9.5 Z" fill="#1a9cb0"/></svg>
<div class="t" style="left:1477.50px;top:676.00px;font-size:14.08px;color:#1a9cb0;font-weight:400;">Show Details</div>
<svg class="b" style="left:0.00px;top:0.00px;" width="1" height="1" viewBox="0 0 1 1"><rect x="649.1" y="760.1" width="1571.9" height="191.69999999999993" fill="#df824c"/><polygon points="649.1,774.7 650.6,776.8 652.1,778.0 653.6,781.8 655.1,783.8 656.6,783.7 658.1,784.9 659.6,787.1 661.1,790.6 662.6,794.4 664.1,796.7 665.6,796.0 667.1,790.8 668.6,789.3 670.1,791.3 671.6,792.2 673.1,791.5 674.6,788.4 676.1,785.1 677.6,785.0 679.1,784.1 680.6,781.8 682.1,783.1 683.6,785.9 685.1,789.3 686.6,792.5 688.1,795.5 689.6,797.8 691.1,798.9 692.6,801.4 694.1,802.1 695.6,798.1 697.1,796.2 698.6,796.4 700.1,794.7 701.6,791.8 703.1,789.6 704.6,787.4 706.1,785.6 707.6,783.8 709.1,783.1 710.6,782.0 712.1,779.8 713.6,779.9 715.1,781.3 716.6,782.8 718.1,785.3 719.6,788.9 721.1,792.3 722.6,794.6 724.1,797.9 725.6,802.5 727.1,800.3 728.6,795.9 730.1,792.7 731.6,788.6 733.1,785.7 734.6,784.6 736.1,782.0 737.6,778.2 739.1,779.3 740.6,782.3 742.1,784.1 743.6,786.8 745.1,790.9 746.6,793.0 748.1,791.9 749.6,791.4 751.1,791.1 752.6,790.5 754.1,789.8 755.6,790.1 757.1,791.5 758.6,791.6 760.1,791.3 761.6,791.9 763.1,793.1 764.6,793.4 766.1,791.7 767.6,789.8 769.1,788.7 770.6,787.9 772.1,788.6 773.6,788.2 775.1,786.0 776.6,787.6 778.1,791.7 779.6,795.6 781.1,797.8 782.6,798.8 784.1,801.5 785.6,806.4 787.1,807.3 788.6,804.6 790.1,803.8 791.6,800.7 793.1,796.5 794.6,794.6 796.1,793.7 797.6,791.0 799.1,787.1 800.6,786.4 802.1,787.8 803.6,787.5 805.1,783.1 806.6,779.2 808.1,780.2 809.6,783.7 811.1,786.8 812.6,788.3 814.1,787.1 815.6,786.5 817.1,788.0 818.6,788.3 820.1,788.1 821.6,789.5 823.1,790.3 824.6,788.7 826.1,788.2 827.6,789.2 829.1,788.3 830.6,786.2 832.1,785.4 833.6,786.6 835.1,787.2 836.6,785.9 838.1,785.5 839.6,784.1 841.1,780.6 842.6,779.4 844.1,779.9 845.6,779.3 847.1,779.3 848.6,781.3 850.1,782.3 851.6,782.9 853.1,783.6 854.6,786.9 856.1,790.9 857.6,791.7 859.1,791.2 860.6,790.9 862.1,789.7 863.6,789.5 865.1,789.4 866.6,788.3 868.1,785.5 869.6,782.7 871.1,781.8 872.6,782.4 874.1,786.3 875.6,788.4 877.1,790.4 878.6,794.0 880.1,797.9 881.6,802.5 883.1,806.8 884.6,809.5 886.1,814.0 887.6,820.6 889.1,817.0 890.6,812.0 892.1,808.2 893.6,805.4 895.1,801.4 896.6,795.6 898.1,788.9 899.6,783.4 901.1,777.7 902.6,774.8 904.1,774.4 905.6,774.1 907.1,774.7 908.6,775.0 910.1,775.1 911.6,774.8 913.1,772.3 914.6,770.1 916.1,770.7 917.6,771.7 919.1,771.9 920.6,772.3 922.1,772.0 923.6,770.6 925.1,769.0 926.6,768.9 928.1,769.7 929.6,769.2 931.1,767.6 932.6,767.9 934.1,770.4 935.6,773.3 937.1,773.7 938.6,773.6 940.1,776.9 941.6,781.3 943.1,784.5 944.6,786.0 946.1,786.3 947.6,787.6 949.1,787.0 950.6,786.3 952.1,788.4 953.6,790.6 955.1,792.7 956.6,792.4 958.1,790.4 959.6,790.4 961.1,790.0 962.6,787.4 964.1,786.8 965.6,790.7 967.1,794.0 968.6,794.1 970.1,794.8 971.6,798.8 973.1,800.5 974.6,798.0 976.1,796.0 977.6,794.3 979.1,793.6 980.6,791.5 982.1,788.4 983.6,786.3 985.1,782.8 986.6,779.0 988.1,777.0 989.6,775.6 991.1,774.7 992.6,776.3 994.1,778.0 995.6,779.0 997.1,781.4 998.6,782.1 1000.1,780.8 1001.6,782.2 1003.1,783.7 1004.6,781.8 1006.1,780.5 1007.6,780.7 1009.1,780.4 1010.6,781.8 1012.1,784.4 1013.6,786.0 1015.1,787.6 1016.6,788.5 1018.1,788.4 1019.6,789.2 1021.1,790.2 1022.6,790.5 1024.1,790.8 1025.6,791.5 1027.1,791.5 1028.6,791.8 1030.1,792.5 1031.6,791.1 1033.1,788.1 1034.6,789.2 1036.1,792.5 1037.6,796.0 1039.1,798.2 1040.6,798.7 1042.1,800.7 1043.6,804.0 1045.1,803.0 1046.6,799.4 1048.1,794.1 1049.6,790.4 1051.1,788.4 1052.6,787.1 1054.1,786.1 1055.6,784.3 1057.1,783.8 1058.6,785.0 1060.1,785.1 1061.6,783.3 1063.1,782.8 1064.6,783.4 1066.1,784.9 1067.6,786.7 1069.1,787.7 1070.6,788.6 1072.1,789.3 1073.6,791.8 1075.1,792.5 1076.6,790.0 1078.1,790.8 1079.6,793.1 1081.1,790.8 1082.6,788.1 1084.1,787.5 1085.6,786.2 1087.1,785.1 1088.6,782.6 1090.1,779.9 1091.6,779.0 1093.1,778.1 1094.6,780.2 1096.1,782.6 1097.6,785.2 1099.1,788.9 1100.6,791.3 1102.1,792.8 1103.6,794.8 1105.1,797.0 1106.6,799.9 1108.1,802.2 1109.6,800.4 1111.1,798.6 1112.6,797.1 1114.1,794.8 1115.6,793.4 1117.1,791.4 1118.6,788.0 1120.1,787.3 1121.6,787.0 1123.1,786.4 1124.6,786.7 1126.1,786.7 1127.6,786.9 1129.1,786.8 1130.6,787.2 1132.1,788.4 1133.6,789.9 1135.1,791.2 1136.6,791.1 1138.1,789.6 1139.6,788.8 1141.1,788.9 1142.6,787.8 1144.1,785.2 1145.6,783.7 1147.1,784.6 1148.6,784.9 1150.1,784.2 1151.6,784.2 1153.1,783.6 1154.6,784.5 1156.1,786.6 1157.6,788.6 1159.1,789.8 1160.6,790.7 1162.1,792.2 1163.6,795.6 1165.1,800.0 1166.6,802.1 1168.1,800.5 1169.6,798.0 1171.1,797.5 1172.6,796.8 1174.1,796.8 1175.6,796.5 1177.1,795.6 1178.6,795.9 1180.1,795.0 1181.6,793.6 1183.1,791.3 1184.6,788.7 1186.1,785.4 1187.6,783.7 1189.1,784.9 1190.6,787.5 1192.1,790.3 1193.6,792.4 1195.1,794.6 1196.6,798.7 1198.1,801.5 1199.6,802.7 1201.1,803.9 1202.6,803.8 1204.1,800.3 1205.6,800.0 1207.1,799.6 1208.6,796.8 1210.1,793.4 1211.6,792.8 1213.1,793.3 1214.6,791.3 1216.1,787.9 1217.6,785.2 1219.1,787.1 1220.6,789.7 1222.1,790.1 1223.6,790.2 1225.1,791.1 1226.6,791.9 1228.1,794.0 1229.6,796.3 1231.1,797.1 1232.6,799.3 1234.1,802.2 1235.6,801.9 1237.1,798.8 1238.6,795.0 1240.1,791.4 1241.6,789.6 1243.1,786.3 1244.6,781.9 1246.1,779.8 1247.6,780.1 1249.1,779.2 1250.6,775.6 1252.1,775.0 1253.6,777.3 1255.1,778.2 1256.6,779.8 1258.1,783.1 1259.6,782.9 1261.1,782.3 1262.6,786.2 1264.1,790.4 1265.6,792.4 1267.1,794.2 1268.6,796.2 1270.1,798.5 1271.6,799.5 1273.1,799.4 1274.6,798.7 1276.1,798.2 1277.6,797.0 1279.1,796.7 1280.6,798.6 1282.1,798.3 1283.6,797.1 1285.1,796.9 1286.6,795.3 1288.1,793.4 1289.6,793.5 1291.1,793.0 1292.6,791.5 1294.1,790.4 1295.6,791.2 1297.1,793.3 1298.6,793.4 1300.1,792.9 1301.6,792.4 1303.1,791.4 1304.6,791.0 1306.1,791.2 1307.6,790.8 1309.1,789.2 1310.6,790.0 1312.1,791.9 1313.6,791.9 1315.1,790.4 1316.6,787.4 1318.1,786.9 1319.6,789.3 1321.1,791.1 1322.6,790.8 1324.1,791.0 1325.6,794.0 1327.1,797.2 1328.6,797.4 1330.1,796.7 1331.6,797.3 1333.1,797.8 1334.6,798.7 1336.1,799.9 1337.6,798.4 1339.1,796.7 1340.6,795.0 1342.1,792.3 1343.6,791.1 1345.1,791.0 1346.6,790.6 1348.1,791.7 1349.6,793.1 1351.1,796.5 1352.6,799.7 1354.1,800.3 1355.6,798.5 1357.1,800.6 1358.6,806.1 1360.1,808.4 1361.6,807.0 1363.1,805.3 1364.6,803.8 1366.1,801.8 1367.6,798.9 1369.1,798.4 1370.6,798.5 1372.1,795.9 1373.6,793.0 1375.1,792.4 1376.6,791.7 1378.1,790.1 1379.6,789.1 1381.1,789.6 1382.6,790.3 1384.1,789.7 1385.6,787.7 1387.1,787.1 1388.6,785.8 1390.1,783.1 1391.6,783.5 1393.1,784.3 1394.6,782.7 1396.1,781.7 1397.6,782.8 1399.1,783.2 1400.6,781.3 1402.1,779.7 1403.6,780.6 1405.1,782.5 1406.6,782.1 1408.1,779.2 1409.6,776.5 1411.1,775.8 1412.6,778.1 1414.1,780.3 1415.6,781.4 1417.1,781.8 1418.6,783.8 1420.1,785.1 1421.6,786.0 1423.1,788.4 1424.6,788.6 1426.1,786.0 1427.6,783.6 1429.1,783.9 1430.6,786.3 1432.1,784.9 1433.6,782.5 1435.1,784.3 1436.6,785.7 1438.1,783.7 1439.6,781.9 1441.1,781.5 1442.6,781.6 1444.1,783.0 1445.6,784.4 1447.1,783.8 1448.6,782.4 1450.1,780.3 1451.6,779.0 1453.1,780.4 1454.6,785.3 1456.1,788.2 1457.6,789.3 1459.1,790.9 1460.6,792.1 1462.1,792.1 1463.6,793.8 1465.1,794.8 1466.6,794.1 1468.1,792.9 1469.6,791.7 1471.1,792.1 1472.6,792.2 1474.1,789.8 1475.6,787.7 1477.1,785.2 1478.6,784.7 1480.1,785.4 1481.6,788.1 1483.1,791.4 1484.6,790.4 1486.1,789.4 1487.6,795.0 1489.1,803.0 1490.6,808.7 1492.1,810.0 1493.6,808.9 1495.1,809.1 1496.6,811.0 1498.1,813.3 1499.6,815.0 1501.1,812.3 1502.6,807.5 1504.1,804.4 1505.6,801.6 1507.1,796.9 1508.6,794.4 1510.1,795.5 1511.6,799.0 1513.1,800.7 1514.6,799.6 1516.1,798.1 1517.6,797.5 1519.1,798.7 1520.6,799.8 1522.1,799.3 1523.6,800.0 1525.1,800.6 1526.6,797.7 1528.1,793.8 1529.6,790.1 1531.1,787.0 1532.6,785.4 1534.1,784.9 1535.6,784.2 1537.1,784.7 1538.6,785.2 1540.1,783.5 1541.6,782.3 1543.1,781.5 1544.6,781.8 1546.1,785.4 1547.6,786.6 1549.1,785.6 1550.6,785.9 1552.1,787.5 1553.6,791.4 1555.1,794.4 1556.6,793.0 1558.1,789.0 1559.6,788.1 1561.1,791.3 1562.6,792.9 1564.1,791.6 1565.6,789.6 1567.1,787.3 1568.6,787.2 1570.1,787.6 1571.6,786.3 1573.1,786.7 1574.6,788.0 1576.1,787.5 1577.6,788.2 1579.1,790.7 1580.6,791.2 1582.1,791.1 1583.6,792.4 1585.1,793.6 1586.6,794.9 1588.1,794.1 1589.6,792.5 1591.1,791.7 1592.6,792.0 1594.1,793.0 1595.6,794.6 1597.1,793.6 1598.6,794.0 1600.1,796.0 1601.6,796.4 1603.1,798.4 1604.6,801.7 1606.1,804.7 1607.6,807.3 1609.1,809.6 1610.6,812.0 1612.1,814.6 1613.6,815.4 1615.1,814.0 1616.6,812.7 1618.1,810.6 1619.6,808.0 1621.1,805.2 1622.6,803.1 1624.1,800.2 1625.6,794.7 1627.1,789.6 1628.6,786.1 1630.1,788.0 1631.6,791.0 1633.1,792.4 1634.6,794.0 1636.1,796.5 1637.6,797.9 1639.1,799.5 1640.6,803.8 1642.1,804.5 1643.6,801.1 1645.1,798.7 1646.6,797.5 1648.1,797.4 1649.6,797.9 1651.1,796.8 1652.6,792.0 1654.1,787.6 1655.6,785.4 1657.1,783.8 1658.6,786.1 1660.1,788.9 1661.6,790.7 1663.1,791.2 1664.6,792.2 1666.1,794.7 1667.6,796.3 1669.1,796.2 1670.6,795.2 1672.1,794.8 1673.6,794.3 1675.1,792.5 1676.6,791.4 1678.1,792.6 1679.6,792.5 1681.1,791.8 1682.6,791.7 1684.1,790.9 1685.6,788.9 1687.1,786.2 1688.6,784.2 1690.1,784.7 1691.6,784.2 1693.1,780.4 1694.6,779.2 1696.1,781.7 1697.6,784.0 1699.1,783.5 1700.6,784.7 1702.1,789.5 1703.6,792.8 1705.1,794.2 1706.6,797.9 1708.1,803.3 1709.6,807.4 1711.1,812.5 1712.6,814.0 1714.1,810.4 1715.6,808.6 1717.1,806.7 1718.6,802.0 1720.1,796.9 1721.6,793.6 1723.1,792.1 1724.6,790.8 1726.1,789.2 1727.6,789.2 1729.1,789.0 1730.6,784.7 1732.1,781.9 1733.6,784.0 1735.1,785.7 1736.6,787.7 1738.1,789.5 1739.6,789.3 1741.1,790.3 1742.6,793.2 1744.1,795.7 1745.6,797.0 1747.1,799.2 1748.6,802.3 1750.1,803.8 1751.6,803.5 1753.1,804.2 1754.6,803.7 1756.1,803.4 1757.6,803.9 1759.1,802.8 1760.6,801.6 1762.1,800.0 1763.6,799.4 1765.1,801.7 1766.6,802.4 1768.1,802.5 1769.6,804.6 1771.1,807.2 1772.6,807.2 1774.1,805.5 1775.6,805.0 1777.1,805.1 1778.6,802.4 1780.1,799.8 1781.6,798.6 1783.1,796.2 1784.6,792.8 1786.1,791.0 1787.6,790.1 1789.1,788.1 1790.6,788.8 1792.1,791.4 1793.6,792.3 1795.1,791.3 1796.6,792.2 1798.1,792.7 1799.6,791.9 1801.1,793.5 1802.6,795.1 1804.1,796.5 1805.6,798.7 1807.1,800.9 1808.6,802.1 1810.1,800.2 1811.6,797.8 1813.1,797.7 1814.6,798.7 1816.1,798.2 1817.6,798.0 1819.1,799.0 1820.6,798.2 1822.1,796.8 1823.6,795.4 1825.1,792.4 1826.6,792.6 1828.1,795.3 1829.6,800.9 1831.1,805.0 1832.6,805.6 1834.1,805.2 1835.6,805.0 1837.1,803.8 1838.6,802.6 1840.1,803.6 1841.6,802.6 1843.1,798.5 1844.6,795.0 1846.1,792.8 1847.6,792.1 1849.1,789.5 1850.6,783.4 1852.1,779.1 1853.6,779.7 1855.1,783.7 1856.6,785.9 1858.1,787.7 1859.6,791.4 1861.1,793.4 1862.6,791.4 1864.1,792.4 1865.6,794.9 1867.1,795.2 1868.6,793.0 1870.1,789.8 1871.6,787.2 1873.1,785.0 1874.6,784.0 1876.1,784.3 1877.6,783.9 1879.1,783.3 1880.6,783.8 1882.1,785.0 1883.6,784.5 1885.1,785.7 1886.6,789.7 1888.1,791.3 1889.6,790.5 1891.1,791.0 1892.6,795.4 1894.1,798.3 1895.6,797.4 1897.1,797.2 1898.6,799.2 1900.1,800.8 1901.6,801.1 1903.1,804.3 1904.6,807.8 1906.1,809.1 1907.6,810.3 1909.1,808.3 1910.6,806.8 1912.1,806.9 1913.6,806.0 1915.1,804.6 1916.6,802.9 1918.1,801.9 1919.6,804.1 1921.1,807.1 1922.6,808.4 1924.1,808.3 1925.6,808.1 1927.1,808.2 1928.6,808.4 1930.1,808.1 1931.6,807.3 1933.1,806.9 1934.6,807.1 1936.1,807.2 1937.6,806.1 1939.1,801.9 1940.6,796.8 1942.1,793.8 1943.6,792.2 1945.1,790.2 1946.6,786.4 1948.1,781.9 1949.6,779.7 1951.1,780.8 1952.6,782.0 1954.1,783.8 1955.6,786.6 1957.1,789.3 1958.6,790.3 1960.1,790.3 1961.6,793.7 1963.1,798.8 1964.6,800.1 1966.1,800.3 1967.6,798.5 1969.1,797.6 1970.6,798.9 1972.1,798.6 1973.6,796.4 1975.1,795.0 1976.6,794.6 1978.1,794.6 1979.6,794.6 1981.1,794.0 1982.6,792.5 1984.1,792.3 1985.6,792.9 1987.1,793.1 1988.6,794.7 1990.1,798.9 1991.6,800.8 1993.1,800.0 1994.6,799.2 1996.1,798.4 1997.6,796.9 1999.1,795.4 2000.6,794.6 2002.1,794.1 2003.6,795.0 2005.1,796.4 2006.6,796.4 2008.1,797.2 2009.6,799.8 2011.1,800.2 2012.6,797.9 2014.1,795.2 2015.6,795.2 2017.1,794.1 2018.6,791.6 2020.1,791.2 2021.6,791.3 2023.1,792.5 2024.6,794.7 2026.1,795.3 2027.6,796.4 2029.1,797.6 2030.6,798.3 2032.1,800.2 2033.6,800.3 2035.1,801.5 2036.6,807.0 2038.1,809.5 2039.6,805.9 2041.1,800.4 2042.6,798.3 2044.1,799.8 2045.6,800.0 2047.1,798.8 2048.6,798.0 2050.1,798.2 2051.6,799.1 2053.1,798.6 2054.6,796.5 2056.1,795.2 2057.6,795.9 2059.1,796.5 2060.6,797.2 2062.1,795.8 2063.6,793.3 2065.1,793.0 2066.6,793.6 2068.1,794.8 2069.6,796.0 2071.1,795.4 2072.6,794.0 2074.1,793.1 2075.6,792.5 2077.1,795.4 2078.6,798.3 2080.1,800.6 2081.6,803.5 2083.1,806.1 2084.6,805.7 2086.1,805.8 2087.6,806.7 2089.1,805.3 2090.6,801.7 2092.1,798.7 2093.6,796.7 2095.1,794.8 2096.6,792.3 2098.1,789.4 2099.6,786.5 2101.1,787.3 2102.6,788.8 2104.1,789.1 2105.6,789.5 2107.1,789.3 2108.6,788.9 2110.1,790.2 2111.6,790.9 2113.1,790.1 2114.6,787.5 2116.1,786.0 2117.6,786.3 2119.1,787.6 2120.6,790.0 2122.1,791.2 2123.6,790.9 2125.1,792.1 2126.6,794.5 2128.1,797.6 2129.6,799.7 2131.1,800.8 2132.6,802.5 2134.1,802.6 2135.6,799.6 2137.1,796.1 2138.6,795.5 2140.1,796.1 2141.6,796.4 2143.1,796.1 2144.6,793.9 2146.1,792.1 2147.6,793.6 2149.1,794.7 2150.6,795.3 2152.1,794.9 2153.6,793.4 2155.1,793.9 2156.6,796.4 2158.1,795.4 2159.6,791.7 2161.1,788.3 2162.6,786.4 2164.1,786.1 2165.6,786.1 2167.1,786.1 2168.6,785.7 2170.1,786.0 2171.6,786.4 2173.1,788.6 2174.6,791.1 2176.1,793.1 2177.6,794.5 2179.1,796.1 2180.6,797.8 2182.1,798.2 2183.6,798.7 2185.1,801.5 2186.6,801.7 2188.1,800.5 2189.6,799.9 2191.1,797.7 2192.6,794.7 2194.1,792.2 2195.6,792.4 2197.1,792.5 2198.6,789.2 2200.1,787.5 2201.6,789.3 2203.1,790.5 2204.6,790.0 2206.1,791.8 2207.6,795.6 2209.1,798.6 2210.6,800.7 2212.1,802.4 2213.6,805.3 2215.1,807.0 2216.6,807.8 2218.1,811.0 2221.0,813.7 2221.0,951.8 2218.1,951.8 2216.6,951.8 2215.1,951.8 2213.6,951.8 2212.1,951.8 2210.6,951.8 2209.1,951.8 2207.6,951.8 2206.1,951.8 2204.6,951.8 2203.1,951.8 2201.6,951.8 2200.1,951.8 2198.6,951.8 2197.1,951.8 2195.6,951.8 2194.1,951.8 2192.6,951.8 2191.1,951.8 2189.6,951.8 2188.1,951.8 2186.6,951.8 2185.1,951.8 2183.6,951.8 2182.1,951.8 2180.6,951.8 2179.1,951.8 2177.6,951.8 2176.1,951.8 2174.6,951.8 2173.1,951.8 2171.6,951.8 2170.1,951.8 2168.6,951.8 2167.1,951.8 2165.6,951.8 2164.1,951.8 2162.6,951.8 2161.1,951.8 2159.6,951.8 2158.1,951.8 2156.6,951.8 2155.1,951.8 2153.6,951.8 2152.1,951.8 2150.6,951.8 2149.1,951.8 2147.6,951.8 2146.1,951.8 2144.6,951.8 2143.1,951.8 2141.6,951.8 2140.1,951.8 2138.6,951.8 2137.1,951.8 2135.6,951.8 2134.1,951.8 2132.6,951.8 2131.1,951.8 2129.6,951.8 2128.1,951.8 2126.6,951.8 2125.1,951.8 2123.6,951.8 2122.1,951.8 2120.6,951.8 2119.1,951.8 2117.6,951.8 2116.1,951.8 2114.6,951.8 2113.1,951.8 2111.6,951.8 2110.1,951.8 2108.6,951.8 2107.1,951.8 2105.6,951.8 2104.1,951.8 2102.6,951.8 2101.1,951.8 2099.6,951.8 2098.1,951.8 2096.6,951.8 2095.1,951.8 2093.6,951.8 2092.1,951.8 2090.6,951.8 2089.1,951.8 2087.6,951.8 2086.1,951.8 2084.6,951.8 2083.1,951.8 2081.6,951.8 2080.1,951.8 2078.6,951.8 2077.1,951.8 2075.6,951.8 2074.1,951.8 2072.6,951.8 2071.1,951.8 2069.6,951.8 2068.1,951.8 2066.6,951.8 2065.1,951.8 2063.6,951.8 2062.1,951.8 2060.6,951.8 2059.1,951.8 2057.6,951.8 2056.1,951.8 2054.6,951.8 2053.1,951.8 2051.6,951.8 2050.1,951.8 2048.6,951.8 2047.1,951.8 2045.6,951.8 2044.1,951.8 2042.6,951.8 2041.1,951.8 2039.6,951.8 2038.1,951.8 2036.6,951.8 2035.1,951.8 2033.6,951.8 2032.1,951.8 2030.6,951.8 2029.1,951.8 2027.6,951.8 2026.1,951.8 2024.6,951.8 2023.1,951.8 2021.6,951.8 2020.1,951.8 2018.6,951.8 2017.1,951.8 2015.6,951.8 2014.1,951.8 2012.6,951.8 2011.1,951.8 2009.6,951.8 2008.1,951.8 2006.6,951.8 2005.1,951.8 2003.6,951.8 2002.1,951.8 2000.6,951.8 1999.1,951.8 1997.6,951.8 1996.1,951.8 1994.6,951.8 1993.1,951.8 1991.6,951.8 1990.1,951.8 1988.6,951.8 1987.1,951.8 1985.6,951.8 1984.1,951.8 1982.6,951.8 1981.1,951.8 1979.6,951.8 1978.1,951.8 1976.6,951.8 1975.1,951.8 1973.6,951.8 1972.1,951.8 1970.6,951.8 1969.1,951.8 1967.6,951.8 1966.1,951.8 1964.6,951.8 1963.1,951.8 1961.6,951.8 1960.1,951.8 1958.6,951.8 1957.1,951.8 1955.6,951.8 1954.1,951.8 1952.6,951.8 1951.1,951.8 1949.6,951.8 1948.1,951.8 1946.6,951.8 1945.1,951.8 1943.6,951.8 1942.1,951.8 1940.6,951.8 1939.1,951.8 1937.6,951.8 1936.1,951.8 1934.6,951.8 1933.1,951.8 1931.6,951.8 1930.1,951.8 1928.6,951.8 1927.1,951.8 1925.6,951.8 1924.1,951.8 1922.6,951.8 1921.1,951.8 1919.6,951.8 1918.1,951.8 1916.6,951.8 1915.1,951.8 1913.6,951.8 1912.1,951.8 1910.6,951.8 1909.1,951.8 1907.6,951.8 1906.1,951.8 1904.6,951.8 1903.1,951.8 1901.6,951.8 1900.1,951.8 1898.6,951.8 1897.1,951.8 1895.6,951.8 1894.1,951.8 1892.6,951.8 1891.1,951.8 1889.6,951.8 1888.1,951.8 1886.6,951.8 1885.1,951.8 1883.6,951.8 1882.1,951.8 1880.6,951.8 1879.1,951.8 1877.6,951.8 1876.1,951.8 1874.6,951.8 1873.1,951.8 1871.6,951.8 1870.1,951.8 1868.6,951.8 1867.1,951.8 1865.6,951.8 1864.1,951.8 1862.6,951.8 1861.1,951.8 1859.6,951.8 1858.1,951.8 1856.6,951.8 1855.1,951.8 1853.6,951.8 1852.1,951.8 1850.6,951.8 1849.1,951.8 1847.6,951.8 1846.1,951.8 1844.6,951.8 1843.1,951.8 1841.6,951.8 1840.1,951.8 1838.6,951.8 1837.1,951.8 1835.6,951.8 1834.1,951.8 1832.6,951.8 1831.1,951.8 1829.6,951.8 1828.1,951.8 1826.6,951.8 1825.1,951.8 1823.6,951.8 1822.1,951.8 1820.6,951.8 1819.1,951.8 1817.6,951.8 1816.1,951.8 1814.6,951.8 1813.1,951.8 1811.6,951.8 1810.1,951.8 1808.6,951.8 1807.1,951.8 1805.6,951.8 1804.1,951.8 1802.6,951.8 1801.1,951.8 1799.6,951.8 1798.1,951.8 1796.6,951.8 1795.1,951.8 1793.6,951.8 1792.1,951.8 1790.6,951.8 1789.1,951.8 1787.6,951.8 1786.1,951.8 1784.6,951.8 1783.1,951.8 1781.6,951.8 1780.1,951.8 1778.6,951.8 1777.1,951.8 1775.6,951.8 1774.1,951.8 1772.6,951.8 1771.1,951.8 1769.6,951.8 1768.1,951.8 1766.6,951.8 1765.1,951.8 1763.6,951.8 1762.1,951.8 1760.6,951.8 1759.1,951.8 1757.6,951.8 1756.1,951.8 1754.6,951.8 1753.1,951.8 1751.6,951.8 1750.1,951.8 1748.6,951.8 1747.1,951.8 1745.6,951.8 1744.1,951.8 1742.6,951.8 1741.1,951.8 1739.6,951.8 1738.1,951.8 1736.6,951.8 1735.1,951.8 1733.6,951.8 1732.1,951.8 1730.6,951.8 1729.1,951.8 1727.6,951.8 1726.1,951.8 1724.6,951.8 1723.1,951.8 1721.6,951.8 1720.1,951.8 1718.6,951.8 1717.1,951.8 1715.6,951.8 1714.1,951.8 1712.6,951.8 1711.1,951.8 1709.6,951.8 1708.1,951.8 1706.6,951.8 1705.1,951.8 1703.6,951.8 1702.1,951.8 1700.6,951.8 1699.1,951.8 1697.6,951.8 1696.1,951.8 1694.6,951.8 1693.1,951.8 1691.6,951.8 1690.1,951.8 1688.6,951.8 1687.1,951.8 1685.6,951.8 1684.1,951.8 1682.6,951.8 1681.1,951.8 1679.6,951.8 1678.1,951.8 1676.6,951.8 1675.1,951.8 1673.6,951.8 1672.1,951.8 1670.6,951.8 1669.1,951.8 1667.6,951.8 1666.1,951.8 1664.6,951.8 1663.1,951.8 1661.6,951.8 1660.1,951.8 1658.6,951.8 1657.1,951.8 1655.6,951.8 1654.1,951.8 1652.6,951.8 1651.1,951.8 1649.6,951.8 1648.1,951.8 1646.6,951.8 1645.1,951.8 1643.6,951.8 1642.1,951.8 1640.6,951.8 1639.1,951.8 1637.6,951.8 1636.1,951.8 1634.6,951.8 1633.1,951.8 1631.6,951.8 1630.1,951.8 1628.6,951.8 1627.1,951.8 1625.6,951.8 1624.1,951.8 1622.6,951.8 1621.1,951.8 1619.6,951.8 1618.1,951.8 1616.6,951.8 1615.1,951.8 1613.6,951.8 1612.1,951.8 1610.6,951.8 1609.1,951.8 1607.6,951.8 1606.1,951.8 1604.6,951.8 1603.1,951.8 1601.6,951.8 1600.1,951.8 1598.6,951.8 1597.1,951.8 1595.6,951.8 1594.1,951.8 1592.6,951.8 1591.1,951.8 1589.6,951.8 1588.1,951.8 1586.6,951.8 1585.1,951.8 1583.6,951.8 1582.1,951.8 1580.6,951.8 1579.1,951.8 1577.6,951.8 1576.1,951.8 1574.6,951.8 1573.1,951.8 1571.6,951.8 1570.1,951.8 1568.6,951.8 1567.1,951.8 1565.6,951.8 1564.1,951.8 1562.6,951.8 1561.1,951.8 1559.6,951.8 1558.1,951.8 1556.6,951.8 1555.1,951.8 1553.6,951.8 1552.1,951.8 1550.6,951.8 1549.1,951.8 1547.6,951.8 1546.1,951.8 1544.6,951.8 1543.1,951.8 1541.6,951.8 1540.1,951.8 1538.6,951.8 1537.1,951.8 1535.6,951.8 1534.1,951.8 1532.6,951.8 1531.1,951.8 1529.6,951.8 1528.1,951.8 1526.6,951.8 1525.1,951.8 1523.6,951.8 1522.1,951.8 1520.6,951.8 1519.1,951.8 1517.6,951.8 1516.1,951.8 1514.6,951.8 1513.1,951.8 1511.6,951.8 1510.1,951.8 1508.6,951.8 1507.1,951.8 1505.6,951.8 1504.1,951.8 1502.6,951.8 1501.1,951.8 1499.6,951.8 1498.1,951.8 1496.6,951.8 1495.1,951.8 1493.6,951.8 1492.1,951.8 1490.6,951.8 1489.1,951.8 1487.6,951.8 1486.1,951.8 1484.6,951.8 1483.1,951.8 1481.6,951.8 1480.1,951.8 1478.6,951.8 1477.1,951.8 1475.6,951.8 1474.1,951.8 1472.6,951.8 1471.1,951.8 1469.6,951.8 1468.1,951.8 1466.6,951.8 1465.1,951.8 1463.6,951.8 1462.1,951.8 1460.6,951.8 1459.1,951.8 1457.6,951.8 1456.1,951.8 1454.6,951.8 1453.1,951.8 1451.6,951.8 1450.1,951.8 1448.6,951.8 1447.1,951.8 1445.6,951.8 1444.1,951.8 1442.6,951.8 1441.1,951.8 1439.6,951.8 1438.1,951.8 1436.6,951.8 1435.1,951.8 1433.6,951.8 1432.1,951.8 1430.6,951.8 1429.1,951.8 1427.6,951.8 1426.1,951.8 1424.6,951.8 1423.1,951.8 1421.6,951.8 1420.1,951.8 1418.6,951.8 1417.1,951.8 1415.6,951.8 1414.1,951.8 1412.6,951.8 1411.1,951.8 1409.6,951.8 1408.1,951.8 1406.6,951.8 1405.1,951.8 1403.6,951.8 1402.1,951.8 1400.6,951.8 1399.1,951.8 1397.6,951.8 1396.1,951.8 1394.6,951.8 1393.1,951.8 1391.6,951.8 1390.1,951.8 1388.6,951.8 1387.1,951.8 1385.6,951.8 1384.1,951.8 1382.6,951.8 1381.1,951.8 1379.6,951.8 1378.1,951.8 1376.6,951.8 1375.1,951.8 1373.6,951.8 1372.1,951.8 1370.6,951.8 1369.1,951.8 1367.6,951.8 1366.1,951.8 1364.6,951.8 1363.1,951.8 1361.6,951.8 1360.1,951.8 1358.6,951.8 1357.1,951.8 1355.6,951.8 1354.1,951.8 1352.6,951.8 1351.1,951.8 1349.6,951.8 1348.1,951.8 1346.6,951.8 1345.1,951.8 1343.6,951.8 1342.1,951.8 1340.6,951.8 1339.1,951.8 1337.6,951.8 1336.1,951.8 1334.6,951.8 1333.1,951.8 1331.6,951.8 1330.1,951.8 1328.6,951.8 1327.1,951.8 1325.6,951.8 1324.1,951.8 1322.6,951.8 1321.1,951.8 1319.6,951.8 1318.1,951.8 1316.6,951.8 1315.1,951.8 1313.6,951.8 1312.1,951.8 1310.6,951.8 1309.1,951.8 1307.6,951.8 1306.1,951.8 1304.6,951.8 1303.1,951.8 1301.6,951.8 1300.1,951.8 1298.6,951.8 1297.1,951.8 1295.6,951.8 1294.1,951.8 1292.6,951.8 1291.1,951.8 1289.6,951.8 1288.1,951.8 1286.6,951.8 1285.1,951.8 1283.6,951.8 1282.1,951.8 1280.6,951.8 1279.1,951.8 1277.6,951.8 1276.1,951.8 1274.6,951.8 1273.1,951.8 1271.6,951.8 1270.1,951.8 1268.6,951.8 1267.1,951.8 1265.6,951.8 1264.1,951.8 1262.6,951.8 1261.1,951.8 1259.6,951.8 1258.1,951.8 1256.6,951.8 1255.1,951.8 1253.6,951.8 1252.1,951.8 1250.6,951.8 1249.1,951.8 1247.6,951.8 1246.1,951.8 1244.6,951.8 1243.1,951.8 1241.6,951.8 1240.1,951.8 1238.6,951.8 1237.1,951.8 1235.6,951.8 1234.1,951.8 1232.6,951.8 1231.1,951.8 1229.6,951.8 1228.1,951.8 1226.6,951.8 1225.1,951.8 1223.6,951.8 1222.1,951.8 1220.6,951.8 1219.1,951.8 1217.6,951.8 1216.1,951.8 1214.6,951.8 1213.1,951.8 1211.6,951.8 1210.1,951.8 1208.6,951.8 1207.1,951.8 1205.6,951.8 1204.1,951.8 1202.6,951.8 1201.1,951.8 1199.6,951.8 1198.1,951.8 1196.6,951.8 1195.1,951.8 1193.6,951.8 1192.1,951.8 1190.6,951.8 1189.1,951.8 1187.6,951.8 1186.1,951.8 1184.6,951.8 1183.1,951.8 1181.6,951.8 1180.1,951.8 1178.6,951.8 1177.1,951.8 1175.6,951.8 1174.1,951.8 1172.6,951.8 1171.1,951.8 1169.6,951.8 1168.1,951.8 1166.6,951.8 1165.1,951.8 1163.6,951.8 1162.1,951.8 1160.6,951.8 1159.1,951.8 1157.6,951.8 1156.1,951.8 1154.6,951.8 1153.1,951.8 1151.6,951.8 1150.1,951.8 1148.6,951.8 1147.1,951.8 1145.6,951.8 1144.1,951.8 1142.6,951.8 1141.1,951.8 1139.6,951.8 1138.1,951.8 1136.6,951.8 1135.1,951.8 1133.6,951.8 1132.1,951.8 1130.6,951.8 1129.1,951.8 1127.6,951.8 1126.1,951.8 1124.6,951.8 1123.1,951.8 1121.6,951.8 1120.1,951.8 1118.6,951.8 1117.1,951.8 1115.6,951.8 1114.1,951.8 1112.6,951.8 1111.1,951.8 1109.6,951.8 1108.1,951.8 1106.6,951.8 1105.1,951.8 1103.6,951.8 1102.1,951.8 1100.6,951.8 1099.1,951.8 1097.6,951.8 1096.1,951.8 1094.6,951.8 1093.1,951.8 1091.6,951.8 1090.1,951.8 1088.6,951.8 1087.1,951.8 1085.6,951.8 1084.1,951.8 1082.6,951.8 1081.1,951.8 1079.6,951.8 1078.1,951.8 1076.6,951.8 1075.1,951.8 1073.6,951.8 1072.1,951.8 1070.6,951.8 1069.1,951.8 1067.6,951.8 1066.1,951.8 1064.6,951.8 1063.1,951.8 1061.6,951.8 1060.1,951.8 1058.6,951.8 1057.1,951.8 1055.6,951.8 1054.1,951.8 1052.6,951.8 1051.1,951.8 1049.6,951.8 1048.1,951.8 1046.6,951.8 1045.1,951.8 1043.6,951.8 1042.1,951.8 1040.6,951.8 1039.1,951.8 1037.6,951.8 1036.1,951.8 1034.6,951.8 1033.1,951.8 1031.6,951.8 1030.1,951.8 1028.6,951.8 1027.1,951.8 1025.6,951.8 1024.1,951.8 1022.6,951.8 1021.1,951.8 1019.6,951.8 1018.1,951.8 1016.6,951.8 1015.1,951.8 1013.6,951.8 1012.1,951.8 1010.6,951.8 1009.1,951.8 1007.6,951.8 1006.1,951.8 1004.6,951.8 1003.1,951.8 1001.6,951.8 1000.1,951.8 998.6,951.8 997.1,951.8 995.6,951.8 994.1,951.8 992.6,951.8 991.1,951.8 989.6,951.8 988.1,951.8 986.6,951.8 985.1,951.8 983.6,951.8 982.1,951.8 980.6,951.8 979.1,951.8 977.6,951.8 976.1,951.8 974.6,951.8 973.1,951.8 971.6,951.8 970.1,951.8 968.6,951.8 967.1,951.8 965.6,951.8 964.1,951.8 962.6,951.8 961.1,951.8 959.6,951.8 958.1,951.8 956.6,951.8 955.1,951.8 953.6,951.8 952.1,951.8 950.6,951.8 949.1,951.8 947.6,951.8 946.1,951.8 944.6,951.8 943.1,951.8 941.6,951.8 940.1,951.8 938.6,951.8 937.1,951.8 935.6,951.8 934.1,951.8 932.6,951.8 931.1,951.8 929.6,951.8 928.1,951.8 926.6,951.8 925.1,951.8 923.6,951.8 922.1,951.8 920.6,951.8 919.1,951.8 917.6,951.8 916.1,951.8 914.6,951.8 913.1,951.8 911.6,951.8 910.1,951.8 908.6,951.8 907.1,951.8 905.6,951.8 904.1,951.8 902.6,951.8 901.1,951.8 899.6,951.8 898.1,951.8 896.6,951.8 895.1,951.8 893.6,951.8 892.1,951.8 890.6,951.8 889.1,951.8 887.6,951.8 886.1,951.8 884.6,951.8 883.1,951.8 881.6,951.8 880.1,951.8 878.6,951.8 877.1,951.8 875.6,951.8 874.1,951.8 872.6,951.8 871.1,951.8 869.6,951.8 868.1,951.8 866.6,951.8 865.1,951.8 863.6,951.8 862.1,951.8 860.6,951.8 859.1,951.8 857.6,951.8 856.1,951.8 854.6,951.8 853.1,951.8 851.6,951.8 850.1,951.8 848.6,951.8 847.1,951.8 845.6,951.8 844.1,951.8 842.6,951.8 841.1,951.8 839.6,951.8 838.1,951.8 836.6,951.8 835.1,951.8 833.6,951.8 832.1,951.8 830.6,951.8 829.1,951.8 827.6,951.8 826.1,951.8 824.6,951.8 823.1,951.8 821.6,951.8 820.1,951.8 818.6,951.8 817.1,951.8 815.6,951.8 814.1,951.8 812.6,951.8 811.1,951.8 809.6,951.8 808.1,951.8 806.6,951.8 805.1,951.8 803.6,951.8 802.1,951.8 800.6,951.8 799.1,951.8 797.6,951.8 796.1,951.8 794.6,951.8 793.1,951.8 791.6,951.8 790.1,951.8 788.6,951.8 787.1,951.8 785.6,951.8 784.1,951.8 782.6,951.8 781.1,951.8 779.6,951.8 778.1,951.8 776.6,951.8 775.1,951.8 773.6,951.8 772.1,951.8 770.6,951.8 769.1,951.8 767.6,951.8 766.1,951.8 764.6,951.8 763.1,951.8 761.6,951.8 760.1,951.8 758.6,951.8 757.1,951.8 755.6,951.8 754.1,951.8 752.6,951.8 751.1,951.8 749.6,951.8 748.1,951.8 746.6,951.8 745.1,951.8 743.6,951.8 742.1,951.8 740.6,951.8 739.1,951.8 737.6,951.8 736.1,951.8 734.6,951.8 733.1,951.8 731.6,951.8 730.1,951.8 728.6,951.8 727.1,951.8 725.6,951.8 724.1,951.8 722.6,951.8 721.1,951.8 719.6,951.8 718.1,951.8 716.6,951.8 715.1,951.8 713.6,951.8 712.1,951.8 710.6,951.8 709.1,951.8 707.6,951.8 706.1,951.8 704.6,951.8 703.1,951.8 701.6,951.8 700.1,951.8 698.6,951.8 697.1,951.8 695.6,951.8 694.1,951.8 692.6,951.8 691.1,951.8 689.6,951.8 688.1,951.8 686.6,951.8 685.1,951.8 683.6,951.8 682.1,951.8 680.6,951.8 679.1,951.8 677.6,951.8 676.1,951.8 674.6,951.8 673.1,951.8 671.6,951.8 670.1,951.8 668.6,951.8 667.1,951.8 665.6,951.8 664.1,951.8 662.6,951.8 661.1,951.8 659.6,951.8 658.1,951.8 656.6,951.8 655.1,951.8 653.6,951.8 652.1,951.8 650.6,951.8 649.1,951.8" fill="#eab352"/><polygon points="649.1,803.5 650.6,805.5 652.1,808.3 653.6,811.9 655.1,815.8 656.6,818.3 658.1,818.5 659.6,818.0 661.1,819.2 662.6,818.8 664.1,818.5 665.6,820.6 667.1,822.1 668.6,822.2 670.1,822.4 671.6,825.0 673.1,825.9 674.6,823.8 676.1,824.2 677.6,824.6 679.1,823.2 680.6,824.1 682.1,825.6 683.6,825.1 685.1,824.7 686.6,826.1 688.1,826.8 689.6,827.7 691.1,827.1 692.6,824.9 694.1,825.6 695.6,825.2 697.1,822.8 698.6,822.3 700.1,821.4 701.6,821.1 703.1,823.2 704.6,821.8 706.1,821.5 707.6,824.7 709.1,826.3 710.6,827.2 712.1,827.9 713.6,826.5 715.1,823.0 716.6,820.0 718.1,820.0 719.6,820.7 721.1,820.6 722.6,818.8 724.1,817.4 725.6,816.6 727.1,816.7 728.6,818.3 730.1,821.5 731.6,823.4 733.1,824.7 734.6,827.8 736.1,829.6 737.6,830.7 739.1,833.9 740.6,837.3 742.1,837.8 743.6,837.8 745.1,840.3 746.6,841.4 748.1,838.1 749.6,833.5 751.1,830.7 752.6,828.2 754.1,824.6 755.6,823.7 757.1,825.4 758.6,825.9 760.1,824.4 761.6,822.2 763.1,822.2 764.6,822.3 766.1,818.3 767.6,815.0 769.1,815.4 770.6,815.6 772.1,815.2 773.6,813.6 775.1,811.6 776.6,815.1 778.1,819.1 779.6,818.7 781.1,817.0 782.6,818.1 784.1,819.6 785.6,818.3 787.1,817.5 788.6,817.8 790.1,821.0 791.6,823.4 793.1,822.3 794.6,820.9 796.1,818.7 797.6,817.6 799.1,819.0 800.6,819.4 802.1,817.2 803.6,815.9 805.1,817.8 806.6,819.1 808.1,818.7 809.6,817.5 811.1,813.5 812.6,809.8 814.1,807.5 815.6,803.0 817.1,799.5 818.6,799.3 820.1,797.4 821.6,796.6 823.1,797.9 824.6,800.2 826.1,802.3 827.6,803.9 829.1,807.0 830.6,810.9 832.1,814.3 833.6,818.3 835.1,824.2 836.6,829.9 838.1,834.9 839.6,838.1 841.1,841.9 842.6,845.1 844.1,840.2 845.6,836.3 847.1,835.0 848.6,832.7 850.1,828.9 851.6,825.0 853.1,818.9 854.6,813.5 856.1,812.4 857.6,813.3 859.1,816.7 860.6,819.3 862.1,823.8 863.6,829.0 865.1,832.5 866.6,834.0 868.1,835.5 869.6,836.7 871.1,838.1 872.6,838.7 874.1,834.3 875.6,830.9 877.1,829.2 878.6,825.8 880.1,826.0 881.6,826.9 883.1,823.9 884.6,822.5 886.1,821.4 887.6,820.6 889.1,822.1 890.6,823.6 892.1,826.4 893.6,829.8 895.1,833.3 896.6,835.6 898.1,836.6 899.6,837.6 901.1,838.8 902.6,841.6 904.1,845.6 905.6,848.4 907.1,849.8 908.6,852.0 910.1,854.0 911.6,854.1 913.1,850.3 914.6,847.3 916.1,842.1 917.6,833.6 919.1,826.4 920.6,822.4 922.1,820.1 923.6,817.0 925.1,813.5 926.6,807.0 928.1,797.3 929.6,796.1 931.1,796.3 932.6,796.4 934.1,797.7 935.6,798.6 937.1,799.9 938.6,800.2 940.1,801.2 941.6,805.1 943.1,807.5 944.6,805.6 946.1,802.2 947.6,801.6 949.1,804.9 950.6,809.2 952.1,811.0 953.6,811.1 955.1,809.5 956.6,808.6 958.1,811.3 959.6,813.3 961.1,813.6 962.6,812.9 964.1,813.9 965.6,817.7 967.1,818.3 968.6,815.4 970.1,814.4 971.6,816.9 973.1,819.3 974.6,817.6 976.1,815.1 977.6,813.6 979.1,810.2 980.6,806.9 982.1,806.0 983.6,803.6 985.1,801.5 986.6,801.7 988.1,798.7 989.6,796.7 991.1,799.5 992.6,801.1 994.1,800.8 995.6,801.0 997.1,800.8 998.6,802.2 1000.1,805.9 1001.6,807.9 1003.1,808.1 1004.6,808.8 1006.1,809.1 1007.6,810.2 1009.1,812.7 1010.6,817.2 1012.1,820.1 1013.6,821.5 1015.1,823.8 1016.6,827.0 1018.1,831.0 1019.6,835.3 1021.1,836.8 1022.6,837.4 1024.1,837.1 1025.6,835.9 1027.1,834.5 1028.6,832.7 1030.1,831.4 1031.6,831.0 1033.1,829.6 1034.6,827.6 1036.1,827.0 1037.6,827.1 1039.1,826.7 1040.6,825.4 1042.1,824.0 1043.6,823.2 1045.1,821.2 1046.6,816.5 1048.1,812.5 1049.6,811.1 1051.1,807.3 1052.6,804.2 1054.1,806.3 1055.6,807.8 1057.1,807.8 1058.6,807.8 1060.1,807.8 1061.6,808.4 1063.1,807.3 1064.6,806.1 1066.1,805.7 1067.6,806.7 1069.1,809.6 1070.6,811.9 1072.1,814.0 1073.6,815.2 1075.1,814.7 1076.6,815.8 1078.1,816.4 1079.6,814.3 1081.1,812.9 1082.6,810.6 1084.1,809.2 1085.6,810.5 1087.1,810.7 1088.6,809.9 1090.1,806.7 1091.6,802.9 1093.1,799.2 1094.6,797.7 1096.1,801.3 1097.6,808.1 1099.1,811.0 1100.6,811.5 1102.1,814.6 1103.6,819.1 1105.1,823.1 1106.6,824.6 1108.1,825.7 1109.6,827.1 1111.1,827.9 1112.6,828.6 1114.1,826.4 1115.6,826.0 1117.1,830.4 1118.6,832.6 1120.1,834.2 1121.6,835.1 1123.1,832.2 1124.6,832.2 1126.1,834.8 1127.6,834.9 1129.1,834.0 1130.6,833.3 1132.1,832.5 1133.6,830.1 1135.1,824.4 1136.6,821.0 1138.1,818.1 1139.6,813.2 1141.1,809.6 1142.6,808.5 1144.1,809.3 1145.6,806.3 1147.1,801.0 1148.6,801.4 1150.1,801.3 1151.6,795.8 1153.1,793.7 1154.6,799.7 1156.1,802.5 1157.6,804.3 1159.1,808.6 1160.6,812.7 1162.1,815.6 1163.6,818.6 1165.1,821.9 1166.6,825.2 1168.1,828.4 1169.6,830.6 1171.1,833.1 1172.6,835.8 1174.1,836.7 1175.6,836.7 1177.1,837.8 1178.6,841.0 1180.1,842.7 1181.6,843.6 1183.1,843.1 1184.6,841.3 1186.1,839.7 1187.6,835.5 1189.1,832.8 1190.6,830.3 1192.1,824.3 1193.6,817.8 1195.1,814.2 1196.6,812.5 1198.1,809.2 1199.6,807.0 1201.1,807.1 1202.6,808.3 1204.1,815.5 1205.6,821.6 1207.1,827.2 1208.6,827.7 1210.1,825.8 1211.6,824.1 1213.1,824.1 1214.6,822.2 1216.1,819.4 1217.6,819.4 1219.1,819.6 1220.6,818.0 1222.1,816.3 1223.6,817.2 1225.1,819.9 1226.6,818.6 1228.1,815.5 1229.6,815.3 1231.1,816.3 1232.6,817.3 1234.1,817.3 1235.6,815.8 1237.1,813.0 1238.6,810.2 1240.1,806.7 1241.6,803.7 1243.1,804.2 1244.6,806.2 1246.1,804.2 1247.6,799.0 1249.1,795.5 1250.6,793.9 1252.1,793.6 1253.6,794.8 1255.1,797.9 1256.6,802.0 1258.1,805.4 1259.6,806.9 1261.1,803.4 1262.6,800.4 1264.1,801.3 1265.6,802.7 1267.1,803.5 1268.6,805.3 1270.1,806.7 1271.6,806.4 1273.1,808.2 1274.6,812.3 1276.1,812.1 1277.6,812.6 1279.1,817.6 1280.6,821.5 1282.1,824.0 1283.6,825.5 1285.1,821.7 1286.6,819.9 1288.1,818.9 1289.6,816.2 1291.1,816.4 1292.6,817.1 1294.1,814.8 1295.6,814.7 1297.1,814.9 1298.6,812.0 1300.1,811.2 1301.6,813.3 1303.1,814.5 1304.6,816.8 1306.1,817.6 1307.6,817.8 1309.1,816.0 1310.6,815.5 1312.1,816.7 1313.6,815.9 1315.1,813.1 1316.6,810.0 1318.1,808.5 1319.6,808.1 1321.1,809.1 1322.6,810.2 1324.1,810.0 1325.6,808.4 1327.1,806.8 1328.6,807.1 1330.1,809.6 1331.6,812.1 1333.1,813.9 1334.6,815.3 1336.1,816.4 1337.6,816.3 1339.1,814.8 1340.6,813.1 1342.1,813.6 1343.6,811.8 1345.1,810.4 1346.6,813.7 1348.1,818.7 1349.6,819.7 1351.1,818.3 1352.6,817.0 1354.1,818.5 1355.6,823.3 1357.1,827.5 1358.6,831.5 1360.1,835.0 1361.6,832.3 1363.1,827.9 1364.6,825.5 1366.1,824.2 1367.6,823.8 1369.1,823.3 1370.6,821.5 1372.1,819.7 1373.6,818.5 1375.1,817.4 1376.6,816.8 1378.1,820.1 1379.6,821.6 1381.1,825.1 1382.6,829.9 1384.1,834.8 1385.6,840.3 1387.1,843.8 1388.6,847.4 1390.1,847.4 1391.6,845.0 1393.1,840.7 1394.6,837.3 1396.1,835.1 1397.6,831.4 1399.1,828.5 1400.6,831.1 1402.1,832.5 1403.6,835.1 1405.1,840.1 1406.6,843.1 1408.1,844.7 1409.6,848.7 1411.1,852.3 1412.6,845.2 1414.1,836.8 1415.6,830.0 1417.1,824.3 1418.6,816.8 1420.1,810.5 1421.6,807.7 1423.1,806.5 1424.6,803.2 1426.1,800.8 1427.6,799.4 1429.1,798.4 1430.6,799.8 1432.1,801.3 1433.6,801.3 1435.1,800.0 1436.6,799.0 1438.1,799.4 1439.6,803.5 1441.1,808.5 1442.6,809.2 1444.1,809.5 1445.6,809.6 1447.1,807.9 1448.6,805.7 1450.1,806.7 1451.6,806.5 1453.1,804.3 1454.6,802.2 1456.1,799.9 1457.6,800.4 1459.1,802.3 1460.6,802.6 1462.1,802.4 1463.6,803.7 1465.1,806.6 1466.6,809.3 1468.1,813.0 1469.6,816.6 1471.1,815.5 1472.6,813.8 1474.1,811.7 1475.6,810.9 1477.1,810.7 1478.6,808.3 1480.1,806.9 1481.6,806.4 1483.1,805.1 1484.6,803.8 1486.1,805.4 1487.6,810.1 1489.1,815.3 1490.6,819.8 1492.1,820.6 1493.6,818.5 1495.1,817.8 1496.6,821.8 1498.1,825.8 1499.6,826.4 1501.1,831.8 1502.6,836.3 1504.1,834.0 1505.6,834.0 1507.1,831.5 1508.6,829.4 1510.1,830.5 1511.6,830.4 1513.1,828.6 1514.6,826.1 1516.1,825.6 1517.6,829.8 1519.1,832.9 1520.6,836.0 1522.1,838.6 1523.6,842.7 1525.1,848.1 1526.6,848.9 1528.1,844.6 1529.6,839.3 1531.1,835.1 1532.6,831.2 1534.1,827.3 1535.6,821.5 1537.1,814.9 1538.6,811.5 1540.1,807.0 1541.6,802.3 1543.1,803.5 1544.6,804.8 1546.1,805.9 1547.6,807.9 1549.1,808.1 1550.6,806.4 1552.1,806.8 1553.6,808.8 1555.1,807.4 1556.6,808.2 1558.1,814.3 1559.6,815.5 1561.1,812.4 1562.6,811.6 1564.1,809.4 1565.6,807.9 1567.1,804.5 1568.6,801.4 1570.1,800.4 1571.6,797.8 1573.1,797.0 1574.6,800.1 1576.1,804.3 1577.6,805.8 1579.1,803.4 1580.6,803.3 1582.1,806.7 1583.6,810.1 1585.1,814.6 1586.6,817.5 1588.1,818.3 1589.6,818.9 1591.1,819.9 1592.6,824.2 1594.1,827.2 1595.6,828.2 1597.1,832.5 1598.6,837.6 1600.1,841.3 1601.6,844.2 1603.1,846.8 1604.6,846.2 1606.1,844.3 1607.6,841.1 1609.1,838.4 1610.6,838.4 1612.1,838.1 1613.6,834.1 1615.1,827.6 1616.6,820.8 1618.1,816.9 1619.6,816.0 1621.1,817.8 1622.6,819.9 1624.1,817.3 1625.6,815.1 1627.1,815.3 1628.6,811.7 1630.1,810.0 1631.6,812.4 1633.1,817.1 1634.6,820.9 1636.1,820.2 1637.6,818.7 1639.1,818.1 1640.6,821.7 1642.1,825.9 1643.6,824.8 1645.1,822.5 1646.6,821.2 1648.1,818.9 1649.6,815.5 1651.1,811.4 1652.6,808.8 1654.1,808.9 1655.6,808.5 1657.1,808.0 1658.6,811.3 1660.1,813.5 1661.6,810.8 1663.1,807.8 1664.6,809.5 1666.1,813.9 1667.6,815.5 1669.1,815.4 1670.6,816.6 1672.1,817.2 1673.6,815.7 1675.1,814.5 1676.6,812.0 1678.1,810.3 1679.6,811.9 1681.1,813.4 1682.6,813.0 1684.1,812.3 1685.6,812.7 1687.1,812.5 1688.6,809.3 1690.1,805.9 1691.6,804.7 1693.1,805.0 1694.6,805.4 1696.1,804.7 1697.6,804.9 1699.1,807.0 1700.6,808.9 1702.1,809.2 1703.6,811.3 1705.1,812.2 1706.6,813.5 1708.1,815.7 1709.6,816.6 1711.1,816.7 1712.6,817.4 1714.1,819.7 1715.6,822.2 1717.1,827.6 1718.6,833.4 1720.1,833.7 1721.6,833.3 1723.1,835.0 1724.6,837.8 1726.1,839.3 1727.6,839.5 1729.1,840.0 1730.6,839.1 1732.1,838.0 1733.6,834.2 1735.1,829.8 1736.6,828.6 1738.1,827.6 1739.6,822.3 1741.1,819.8 1742.6,821.9 1744.1,820.5 1745.6,819.9 1747.1,819.9 1748.6,816.6 1750.1,816.3 1751.6,822.1 1753.1,826.8 1754.6,829.2 1756.1,831.9 1757.6,836.3 1759.1,837.0 1760.6,832.9 1762.1,830.8 1763.6,829.6 1765.1,825.6 1766.6,820.9 1768.1,818.7 1769.6,816.0 1771.1,812.5 1772.6,810.6 1774.1,810.5 1775.6,812.0 1777.1,811.7 1778.6,812.0 1780.1,814.8 1781.6,818.9 1783.1,821.3 1784.6,821.0 1786.1,822.1 1787.6,824.1 1789.1,824.0 1790.6,823.0 1792.1,822.5 1793.6,822.4 1795.1,824.8 1796.6,828.7 1798.1,829.3 1799.6,827.1 1801.1,825.6 1802.6,826.0 1804.1,826.1 1805.6,825.6 1807.1,826.2 1808.6,830.6 1810.1,835.1 1811.6,834.5 1813.1,835.2 1814.6,837.4 1816.1,836.1 1817.6,832.7 1819.1,830.2 1820.6,831.6 1822.1,831.0 1823.6,825.4 1825.1,820.3 1826.6,817.1 1828.1,815.9 1829.6,817.1 1831.1,818.0 1832.6,815.2 1834.1,812.3 1835.6,814.0 1837.1,815.5 1838.6,814.0 1840.1,813.3 1841.6,816.1 1843.1,817.1 1844.6,813.2 1846.1,812.0 1847.6,813.5 1849.1,815.8 1850.6,817.4 1852.1,814.8 1853.6,812.6 1855.1,816.0 1856.6,821.3 1858.1,827.0 1859.6,830.2 1861.1,832.7 1862.6,837.4 1864.1,840.9 1865.6,847.7 1867.1,854.0 1868.6,857.1 1870.1,860.1 1871.6,859.9 1873.1,856.7 1874.6,853.6 1876.1,848.6 1877.6,842.2 1879.1,834.8 1880.6,828.6 1882.1,823.3 1883.6,815.3 1885.1,811.4 1886.6,814.3 1888.1,816.2 1889.6,816.0 1891.1,817.0 1892.6,821.8 1894.1,825.8 1895.6,826.1 1897.1,824.8 1898.6,825.6 1900.1,825.5 1901.6,824.7 1903.1,827.9 1904.6,830.6 1906.1,828.6 1907.6,826.7 1909.1,828.3 1910.6,829.4 1912.1,829.5 1913.6,830.5 1915.1,832.5 1916.6,836.2 1918.1,838.3 1919.6,836.1 1921.1,833.5 1922.6,829.6 1924.1,826.7 1925.6,824.4 1927.1,822.4 1928.6,819.8 1930.1,817.2 1931.6,818.3 1933.1,820.0 1934.6,818.1 1936.1,814.3 1937.6,813.8 1939.1,815.8 1940.6,817.5 1942.1,820.0 1943.6,819.8 1945.1,818.0 1946.6,816.8 1948.1,816.4 1949.6,817.3 1951.1,819.4 1952.6,821.7 1954.1,821.8 1955.6,822.3 1957.1,824.6 1958.6,823.4 1960.1,822.5 1961.6,824.6 1963.1,823.3 1964.6,822.7 1966.1,824.7 1967.6,829.7 1969.1,835.6 1970.6,837.1 1972.1,837.7 1973.6,841.0 1975.1,842.7 1976.6,843.1 1978.1,844.7 1979.6,844.9 1981.1,842.5 1982.6,839.9 1984.1,836.7 1985.6,834.9 1987.1,830.2 1988.6,824.6 1990.1,818.8 1991.6,813.8 1993.1,812.8 1994.6,813.9 1996.1,814.3 1997.6,813.6 1999.1,811.5 2000.6,809.5 2002.1,810.6 2003.6,811.7 2005.1,816.0 2006.6,821.4 2008.1,823.2 2009.6,823.6 2011.1,827.3 2012.6,832.8 2014.1,833.1 2015.6,831.2 2017.1,827.3 2018.6,822.5 2020.1,818.1 2021.6,817.5 2023.1,822.2 2024.6,826.5 2026.1,826.6 2027.6,825.5 2029.1,827.3 2030.6,828.1 2032.1,827.6 2033.6,827.3 2035.1,826.9 2036.6,827.8 2038.1,829.4 2039.6,832.4 2041.1,835.6 2042.6,838.3 2044.1,840.8 2045.6,841.8 2047.1,843.1 2048.6,846.1 2050.1,847.2 2051.6,846.5 2053.1,844.6 2054.6,840.6 2056.1,837.6 2057.6,838.1 2059.1,838.6 2060.6,832.4 2062.1,824.7 2063.6,821.4 2065.1,818.5 2066.6,815.3 2068.1,816.7 2069.6,821.6 2071.1,824.8 2072.6,828.9 2074.1,835.0 2075.6,841.3 2077.1,844.6 2078.6,846.7 2080.1,846.2 2081.6,847.8 2083.1,849.4 2084.6,842.1 2086.1,832.6 2087.6,824.4 2089.1,817.1 2090.6,814.9 2092.1,816.1 2093.6,818.1 2095.1,817.7 2096.6,816.6 2098.1,818.1 2099.6,818.0 2101.1,818.2 2102.6,820.7 2104.1,826.1 2105.6,829.0 2107.1,829.8 2108.6,833.4 2110.1,834.4 2111.6,830.9 2113.1,829.3 2114.6,827.4 2116.1,823.3 2117.6,819.6 2119.1,812.5 2120.6,806.2 2122.1,807.0 2123.6,811.0 2125.1,815.5 2126.6,815.6 2128.1,816.0 2129.6,819.6 2131.1,823.9 2132.6,830.2 2134.1,832.5 2135.6,829.5 2137.1,827.7 2138.6,828.5 2140.1,829.9 2141.6,831.4 2143.1,832.1 2144.6,831.1 2146.1,830.3 2147.6,832.9 2149.1,833.5 2150.6,831.6 2152.1,831.6 2153.6,831.7 2155.1,833.8 2156.6,838.6 2158.1,837.2 2159.6,834.1 2161.1,832.5 2162.6,829.3 2164.1,827.6 2165.6,826.2 2167.1,821.7 2168.6,817.5 2170.1,818.9 2171.6,823.1 2173.1,827.4 2174.6,829.7 2176.1,831.9 2177.6,832.6 2179.1,832.7 2180.6,834.5 2182.1,839.4 2183.6,842.9 2185.1,840.3 2186.6,837.6 2188.1,839.9 2189.6,841.4 2191.1,842.0 2192.6,842.9 2194.1,841.5 2195.6,842.9 2197.1,845.2 2198.6,845.0 2200.1,845.2 2201.6,844.5 2203.1,843.3 2204.6,845.6 2206.1,847.5 2207.6,846.1 2209.1,846.7 2210.6,847.4 2212.1,848.8 2213.6,850.3 2215.1,848.4 2216.6,848.6 2218.1,853.3 2221.0,855.2 2221.0,951.8 2218.1,951.8 2216.6,951.8 2215.1,951.8 2213.6,951.8 2212.1,951.8 2210.6,951.8 2209.1,951.8 2207.6,951.8 2206.1,951.8 2204.6,951.8 2203.1,951.8 2201.6,951.8 2200.1,951.8 2198.6,951.8 2197.1,951.8 2195.6,951.8 2194.1,951.8 2192.6,951.8 2191.1,951.8 2189.6,951.8 2188.1,951.8 2186.6,951.8 2185.1,951.8 2183.6,951.8 2182.1,951.8 2180.6,951.8 2179.1,951.8 2177.6,951.8 2176.1,951.8 2174.6,951.8 2173.1,951.8 2171.6,951.8 2170.1,951.8 2168.6,951.8 2167.1,951.8 2165.6,951.8 2164.1,951.8 2162.6,951.8 2161.1,951.8 2159.6,951.8 2158.1,951.8 2156.6,951.8 2155.1,951.8 2153.6,951.8 2152.1,951.8 2150.6,951.8 2149.1,951.8 2147.6,951.8 2146.1,951.8 2144.6,951.8 2143.1,951.8 2141.6,951.8 2140.1,951.8 2138.6,951.8 2137.1,951.8 2135.6,951.8 2134.1,951.8 2132.6,951.8 2131.1,951.8 2129.6,951.8 2128.1,951.8 2126.6,951.8 2125.1,951.8 2123.6,951.8 2122.1,951.8 2120.6,951.8 2119.1,951.8 2117.6,951.8 2116.1,951.8 2114.6,951.8 2113.1,951.8 2111.6,951.8 2110.1,951.8 2108.6,951.8 2107.1,951.8 2105.6,951.8 2104.1,951.8 2102.6,951.8 2101.1,951.8 2099.6,951.8 2098.1,951.8 2096.6,951.8 2095.1,951.8 2093.6,951.8 2092.1,951.8 2090.6,951.8 2089.1,951.8 2087.6,951.8 2086.1,951.8 2084.6,951.8 2083.1,951.8 2081.6,951.8 2080.1,951.8 2078.6,951.8 2077.1,951.8 2075.6,951.8 2074.1,951.8 2072.6,951.8 2071.1,951.8 2069.6,951.8 2068.1,951.8 2066.6,951.8 2065.1,951.8 2063.6,951.8 2062.1,951.8 2060.6,951.8 2059.1,951.8 2057.6,951.8 2056.1,951.8 2054.6,951.8 2053.1,951.8 2051.6,951.8 2050.1,951.8 2048.6,951.8 2047.1,951.8 2045.6,951.8 2044.1,951.8 2042.6,951.8 2041.1,951.8 2039.6,951.8 2038.1,951.8 2036.6,951.8 2035.1,951.8 2033.6,951.8 2032.1,951.8 2030.6,951.8 2029.1,951.8 2027.6,951.8 2026.1,951.8 2024.6,951.8 2023.1,951.8 2021.6,951.8 2020.1,951.8 2018.6,951.8 2017.1,951.8 2015.6,951.8 2014.1,951.8 2012.6,951.8 2011.1,951.8 2009.6,951.8 2008.1,951.8 2006.6,951.8 2005.1,951.8 2003.6,951.8 2002.1,951.8 2000.6,951.8 1999.1,951.8 1997.6,951.8 1996.1,951.8 1994.6,951.8 1993.1,951.8 1991.6,951.8 1990.1,951.8 1988.6,951.8 1987.1,951.8 1985.6,951.8 1984.1,951.8 1982.6,951.8 1981.1,951.8 1979.6,951.8 1978.1,951.8 1976.6,951.8 1975.1,951.8 1973.6,951.8 1972.1,951.8 1970.6,951.8 1969.1,951.8 1967.6,951.8 1966.1,951.8 1964.6,951.8 1963.1,951.8 1961.6,951.8 1960.1,951.8 1958.6,951.8 1957.1,951.8 1955.6,951.8 1954.1,951.8 1952.6,951.8 1951.1,951.8 1949.6,951.8 1948.1,951.8 1946.6,951.8 1945.1,951.8 1943.6,951.8 1942.1,951.8 1940.6,951.8 1939.1,951.8 1937.6,951.8 1936.1,951.8 1934.6,951.8 1933.1,951.8 1931.6,951.8 1930.1,951.8 1928.6,951.8 1927.1,951.8 1925.6,951.8 1924.1,951.8 1922.6,951.8 1921.1,951.8 1919.6,951.8 1918.1,951.8 1916.6,951.8 1915.1,951.8 1913.6,951.8 1912.1,951.8 1910.6,951.8 1909.1,951.8 1907.6,951.8 1906.1,951.8 1904.6,951.8 1903.1,951.8 1901.6,951.8 1900.1,951.8 1898.6,951.8 1897.1,951.8 1895.6,951.8 1894.1,951.8 1892.6,951.8 1891.1,951.8 1889.6,951.8 1888.1,951.8 1886.6,951.8 1885.1,951.8 1883.6,951.8 1882.1,951.8 1880.6,951.8 1879.1,951.8 1877.6,951.8 1876.1,951.8 1874.6,951.8 1873.1,951.8 1871.6,951.8 1870.1,951.8 1868.6,951.8 1867.1,951.8 1865.6,951.8 1864.1,951.8 1862.6,951.8 1861.1,951.8 1859.6,951.8 1858.1,951.8 1856.6,951.8 1855.1,951.8 1853.6,951.8 1852.1,951.8 1850.6,951.8 1849.1,951.8 1847.6,951.8 1846.1,951.8 1844.6,951.8 1843.1,951.8 1841.6,951.8 1840.1,951.8 1838.6,951.8 1837.1,951.8 1835.6,951.8 1834.1,951.8 1832.6,951.8 1831.1,951.8 1829.6,951.8 1828.1,951.8 1826.6,951.8 1825.1,951.8 1823.6,951.8 1822.1,951.8 1820.6,951.8 1819.1,951.8 1817.6,951.8 1816.1,951.8 1814.6,951.8 1813.1,951.8 1811.6,951.8 1810.1,951.8 1808.6,951.8 1807.1,951.8 1805.6,951.8 1804.1,951.8 1802.6,951.8 1801.1,951.8 1799.6,951.8 1798.1,951.8 1796.6,951.8 1795.1,951.8 1793.6,951.8 1792.1,951.8 1790.6,951.8 1789.1,951.8 1787.6,951.8 1786.1,951.8 1784.6,951.8 1783.1,951.8 1781.6,951.8 1780.1,951.8 1778.6,951.8 1777.1,951.8 1775.6,951.8 1774.1,951.8 1772.6,951.8 1771.1,951.8 1769.6,951.8 1768.1,951.8 1766.6,951.8 1765.1,951.8 1763.6,951.8 1762.1,951.8 1760.6,951.8 1759.1,951.8 1757.6,951.8 1756.1,951.8 1754.6,951.8 1753.1,951.8 1751.6,951.8 1750.1,951.8 1748.6,951.8 1747.1,951.8 1745.6,951.8 1744.1,951.8 1742.6,951.8 1741.1,951.8 1739.6,951.8 1738.1,951.8 1736.6,951.8 1735.1,951.8 1733.6,951.8 1732.1,951.8 1730.6,951.8 1729.1,951.8 1727.6,951.8 1726.1,951.8 1724.6,951.8 1723.1,951.8 1721.6,951.8 1720.1,951.8 1718.6,951.8 1717.1,951.8 1715.6,951.8 1714.1,951.8 1712.6,951.8 1711.1,951.8 1709.6,951.8 1708.1,951.8 1706.6,951.8 1705.1,951.8 1703.6,951.8 1702.1,951.8 1700.6,951.8 1699.1,951.8 1697.6,951.8 1696.1,951.8 1694.6,951.8 1693.1,951.8 1691.6,951.8 1690.1,951.8 1688.6,951.8 1687.1,951.8 1685.6,951.8 1684.1,951.8 1682.6,951.8 1681.1,951.8 1679.6,951.8 1678.1,951.8 1676.6,951.8 1675.1,951.8 1673.6,951.8 1672.1,951.8 1670.6,951.8 1669.1,951.8 1667.6,951.8 1666.1,951.8 1664.6,951.8 1663.1,951.8 1661.6,951.8 1660.1,951.8 1658.6,951.8 1657.1,951.8 1655.6,951.8 1654.1,951.8 1652.6,951.8 1651.1,951.8 1649.6,951.8 1648.1,951.8 1646.6,951.8 1645.1,951.8 1643.6,951.8 1642.1,951.8 1640.6,951.8 1639.1,951.8 1637.6,951.8 1636.1,951.8 1634.6,951.8 1633.1,951.8 1631.6,951.8 1630.1,951.8 1628.6,951.8 1627.1,951.8 1625.6,951.8 1624.1,951.8 1622.6,951.8 1621.1,951.8 1619.6,951.8 1618.1,951.8 1616.6,951.8 1615.1,951.8 1613.6,951.8 1612.1,951.8 1610.6,951.8 1609.1,951.8 1607.6,951.8 1606.1,951.8 1604.6,951.8 1603.1,951.8 1601.6,951.8 1600.1,951.8 1598.6,951.8 1597.1,951.8 1595.6,951.8 1594.1,951.8 1592.6,951.8 1591.1,951.8 1589.6,951.8 1588.1,951.8 1586.6,951.8 1585.1,951.8 1583.6,951.8 1582.1,951.8 1580.6,951.8 1579.1,951.8 1577.6,951.8 1576.1,951.8 1574.6,951.8 1573.1,951.8 1571.6,951.8 1570.1,951.8 1568.6,951.8 1567.1,951.8 1565.6,951.8 1564.1,951.8 1562.6,951.8 1561.1,951.8 1559.6,951.8 1558.1,951.8 1556.6,951.8 1555.1,951.8 1553.6,951.8 1552.1,951.8 1550.6,951.8 1549.1,951.8 1547.6,951.8 1546.1,951.8 1544.6,951.8 1543.1,951.8 1541.6,951.8 1540.1,951.8 1538.6,951.8 1537.1,951.8 1535.6,951.8 1534.1,951.8 1532.6,951.8 1531.1,951.8 1529.6,951.8 1528.1,951.8 1526.6,951.8 1525.1,951.8 1523.6,951.8 1522.1,951.8 1520.6,951.8 1519.1,951.8 1517.6,951.8 1516.1,951.8 1514.6,951.8 1513.1,951.8 1511.6,951.8 1510.1,951.8 1508.6,951.8 1507.1,951.8 1505.6,951.8 1504.1,951.8 1502.6,951.8 1501.1,951.8 1499.6,951.8 1498.1,951.8 1496.6,951.8 1495.1,951.8 1493.6,951.8 1492.1,951.8 1490.6,951.8 1489.1,951.8 1487.6,951.8 1486.1,951.8 1484.6,951.8 1483.1,951.8 1481.6,951.8 1480.1,951.8 1478.6,951.8 1477.1,951.8 1475.6,951.8 1474.1,951.8 1472.6,951.8 1471.1,951.8 1469.6,951.8 1468.1,951.8 1466.6,951.8 1465.1,951.8 1463.6,951.8 1462.1,951.8 1460.6,951.8 1459.1,951.8 1457.6,951.8 1456.1,951.8 1454.6,951.8 1453.1,951.8 1451.6,951.8 1450.1,951.8 1448.6,951.8 1447.1,951.8 1445.6,951.8 1444.1,951.8 1442.6,951.8 1441.1,951.8 1439.6,951.8 1438.1,951.8 1436.6,951.8 1435.1,951.8 1433.6,951.8 1432.1,951.8 1430.6,951.8 1429.1,951.8 1427.6,951.8 1426.1,951.8 1424.6,951.8 1423.1,951.8 1421.6,951.8 1420.1,951.8 1418.6,951.8 1417.1,951.8 1415.6,951.8 1414.1,951.8 1412.6,951.8 1411.1,951.8 1409.6,951.8 1408.1,951.8 1406.6,951.8 1405.1,951.8 1403.6,951.8 1402.1,951.8 1400.6,951.8 1399.1,951.8 1397.6,951.8 1396.1,951.8 1394.6,951.8 1393.1,951.8 1391.6,951.8 1390.1,951.8 1388.6,951.8 1387.1,951.8 1385.6,951.8 1384.1,951.8 1382.6,951.8 1381.1,951.8 1379.6,951.8 1378.1,951.8 1376.6,951.8 1375.1,951.8 1373.6,951.8 1372.1,951.8 1370.6,951.8 1369.1,951.8 1367.6,951.8 1366.1,951.8 1364.6,951.8 1363.1,951.8 1361.6,951.8 1360.1,951.8 1358.6,951.8 1357.1,951.8 1355.6,951.8 1354.1,951.8 1352.6,951.8 1351.1,951.8 1349.6,951.8 1348.1,951.8 1346.6,951.8 1345.1,951.8 1343.6,951.8 1342.1,951.8 1340.6,951.8 1339.1,951.8 1337.6,951.8 1336.1,951.8 1334.6,951.8 1333.1,951.8 1331.6,951.8 1330.1,951.8 1328.6,951.8 1327.1,951.8 1325.6,951.8 1324.1,951.8 1322.6,951.8 1321.1,951.8 1319.6,951.8 1318.1,951.8 1316.6,951.8 1315.1,951.8 1313.6,951.8 1312.1,951.8 1310.6,951.8 1309.1,951.8 1307.6,951.8 1306.1,951.8 1304.6,951.8 1303.1,951.8 1301.6,951.8 1300.1,951.8 1298.6,951.8 1297.1,951.8 1295.6,951.8 1294.1,951.8 1292.6,951.8 1291.1,951.8 1289.6,951.8 1288.1,951.8 1286.6,951.8 1285.1,951.8 1283.6,951.8 1282.1,951.8 1280.6,951.8 1279.1,951.8 1277.6,951.8 1276.1,951.8 1274.6,951.8 1273.1,951.8 1271.6,951.8 1270.1,951.8 1268.6,951.8 1267.1,951.8 1265.6,951.8 1264.1,951.8 1262.6,951.8 1261.1,951.8 1259.6,951.8 1258.1,951.8 1256.6,951.8 1255.1,951.8 1253.6,951.8 1252.1,951.8 1250.6,951.8 1249.1,951.8 1247.6,951.8 1246.1,951.8 1244.6,951.8 1243.1,951.8 1241.6,951.8 1240.1,951.8 1238.6,951.8 1237.1,951.8 1235.6,951.8 1234.1,951.8 1232.6,951.8 1231.1,951.8 1229.6,951.8 1228.1,951.8 1226.6,951.8 1225.1,951.8 1223.6,951.8 1222.1,951.8 1220.6,951.8 1219.1,951.8 1217.6,951.8 1216.1,951.8 1214.6,951.8 1213.1,951.8 1211.6,951.8 1210.1,951.8 1208.6,951.8 1207.1,951.8 1205.6,951.8 1204.1,951.8 1202.6,951.8 1201.1,951.8 1199.6,951.8 1198.1,951.8 1196.6,951.8 1195.1,951.8 1193.6,951.8 1192.1,951.8 1190.6,951.8 1189.1,951.8 1187.6,951.8 1186.1,951.8 1184.6,951.8 1183.1,951.8 1181.6,951.8 1180.1,951.8 1178.6,951.8 1177.1,951.8 1175.6,951.8 1174.1,951.8 1172.6,951.8 1171.1,951.8 1169.6,951.8 1168.1,951.8 1166.6,951.8 1165.1,951.8 1163.6,951.8 1162.1,951.8 1160.6,951.8 1159.1,951.8 1157.6,951.8 1156.1,951.8 1154.6,951.8 1153.1,951.8 1151.6,951.8 1150.1,951.8 1148.6,951.8 1147.1,951.8 1145.6,951.8 1144.1,951.8 1142.6,951.8 1141.1,951.8 1139.6,951.8 1138.1,951.8 1136.6,951.8 1135.1,951.8 1133.6,951.8 1132.1,951.8 1130.6,951.8 1129.1,951.8 1127.6,951.8 1126.1,951.8 1124.6,951.8 1123.1,951.8 1121.6,951.8 1120.1,951.8 1118.6,951.8 1117.1,951.8 1115.6,951.8 1114.1,951.8 1112.6,951.8 1111.1,951.8 1109.6,951.8 1108.1,951.8 1106.6,951.8 1105.1,951.8 1103.6,951.8 1102.1,951.8 1100.6,951.8 1099.1,951.8 1097.6,951.8 1096.1,951.8 1094.6,951.8 1093.1,951.8 1091.6,951.8 1090.1,951.8 1088.6,951.8 1087.1,951.8 1085.6,951.8 1084.1,951.8 1082.6,951.8 1081.1,951.8 1079.6,951.8 1078.1,951.8 1076.6,951.8 1075.1,951.8 1073.6,951.8 1072.1,951.8 1070.6,951.8 1069.1,951.8 1067.6,951.8 1066.1,951.8 1064.6,951.8 1063.1,951.8 1061.6,951.8 1060.1,951.8 1058.6,951.8 1057.1,951.8 1055.6,951.8 1054.1,951.8 1052.6,951.8 1051.1,951.8 1049.6,951.8 1048.1,951.8 1046.6,951.8 1045.1,951.8 1043.6,951.8 1042.1,951.8 1040.6,951.8 1039.1,951.8 1037.6,951.8 1036.1,951.8 1034.6,951.8 1033.1,951.8 1031.6,951.8 1030.1,951.8 1028.6,951.8 1027.1,951.8 1025.6,951.8 1024.1,951.8 1022.6,951.8 1021.1,951.8 1019.6,951.8 1018.1,951.8 1016.6,951.8 1015.1,951.8 1013.6,951.8 1012.1,951.8 1010.6,951.8 1009.1,951.8 1007.6,951.8 1006.1,951.8 1004.6,951.8 1003.1,951.8 1001.6,951.8 1000.1,951.8 998.6,951.8 997.1,951.8 995.6,951.8 994.1,951.8 992.6,951.8 991.1,951.8 989.6,951.8 988.1,951.8 986.6,951.8 985.1,951.8 983.6,951.8 982.1,951.8 980.6,951.8 979.1,951.8 977.6,951.8 976.1,951.8 974.6,951.8 973.1,951.8 971.6,951.8 970.1,951.8 968.6,951.8 967.1,951.8 965.6,951.8 964.1,951.8 962.6,951.8 961.1,951.8 959.6,951.8 958.1,951.8 956.6,951.8 955.1,951.8 953.6,951.8 952.1,951.8 950.6,951.8 949.1,951.8 947.6,951.8 946.1,951.8 944.6,951.8 943.1,951.8 941.6,951.8 940.1,951.8 938.6,951.8 937.1,951.8 935.6,951.8 934.1,951.8 932.6,951.8 931.1,951.8 929.6,951.8 928.1,951.8 926.6,951.8 925.1,951.8 923.6,951.8 922.1,951.8 920.6,951.8 919.1,951.8 917.6,951.8 916.1,951.8 914.6,951.8 913.1,951.8 911.6,951.8 910.1,951.8 908.6,951.8 907.1,951.8 905.6,951.8 904.1,951.8 902.6,951.8 901.1,951.8 899.6,951.8 898.1,951.8 896.6,951.8 895.1,951.8 893.6,951.8 892.1,951.8 890.6,951.8 889.1,951.8 887.6,951.8 886.1,951.8 884.6,951.8 883.1,951.8 881.6,951.8 880.1,951.8 878.6,951.8 877.1,951.8 875.6,951.8 874.1,951.8 872.6,951.8 871.1,951.8 869.6,951.8 868.1,951.8 866.6,951.8 865.1,951.8 863.6,951.8 862.1,951.8 860.6,951.8 859.1,951.8 857.6,951.8 856.1,951.8 854.6,951.8 853.1,951.8 851.6,951.8 850.1,951.8 848.6,951.8 847.1,951.8 845.6,951.8 844.1,951.8 842.6,951.8 841.1,951.8 839.6,951.8 838.1,951.8 836.6,951.8 835.1,951.8 833.6,951.8 832.1,951.8 830.6,951.8 829.1,951.8 827.6,951.8 826.1,951.8 824.6,951.8 823.1,951.8 821.6,951.8 820.1,951.8 818.6,951.8 817.1,951.8 815.6,951.8 814.1,951.8 812.6,951.8 811.1,951.8 809.6,951.8 808.1,951.8 806.6,951.8 805.1,951.8 803.6,951.8 802.1,951.8 800.6,951.8 799.1,951.8 797.6,951.8 796.1,951.8 794.6,951.8 793.1,951.8 791.6,951.8 790.1,951.8 788.6,951.8 787.1,951.8 785.6,951.8 784.1,951.8 782.6,951.8 781.1,951.8 779.6,951.8 778.1,951.8 776.6,951.8 775.1,951.8 773.6,951.8 772.1,951.8 770.6,951.8 769.1,951.8 767.6,951.8 766.1,951.8 764.6,951.8 763.1,951.8 761.6,951.8 760.1,951.8 758.6,951.8 757.1,951.8 755.6,951.8 754.1,951.8 752.6,951.8 751.1,951.8 749.6,951.8 748.1,951.8 746.6,951.8 745.1,951.8 743.6,951.8 742.1,951.8 740.6,951.8 739.1,951.8 737.6,951.8 736.1,951.8 734.6,951.8 733.1,951.8 731.6,951.8 730.1,951.8 728.6,951.8 727.1,951.8 725.6,951.8 724.1,951.8 722.6,951.8 721.1,951.8 719.6,951.8 718.1,951.8 716.6,951.8 715.1,951.8 713.6,951.8 712.1,951.8 710.6,951.8 709.1,951.8 707.6,951.8 706.1,951.8 704.6,951.8 703.1,951.8 701.6,951.8 700.1,951.8 698.6,951.8 697.1,951.8 695.6,951.8 694.1,951.8 692.6,951.8 691.1,951.8 689.6,951.8 688.1,951.8 686.6,951.8 685.1,951.8 683.6,951.8 682.1,951.8 680.6,951.8 679.1,951.8 677.6,951.8 676.1,951.8 674.6,951.8 673.1,951.8 671.6,951.8 670.1,951.8 668.6,951.8 667.1,951.8 665.6,951.8 664.1,951.8 662.6,951.8 661.1,951.8 659.6,951.8 658.1,951.8 656.6,951.8 655.1,951.8 653.6,951.8 652.1,951.8 650.6,951.8 649.1,951.8" fill="#46b392"/><line x1="792.2" y1="760.1" x2="792.2" y2="951.8" stroke="rgba(0,0,0,0.02)" stroke-width="1"/><line x1="1030.7" y1="760.1" x2="1030.7" y2="951.8" stroke="rgba(0,0,0,0.02)" stroke-width="1"/><line x1="1269.1" y1="760.1" x2="1269.1" y2="951.8" stroke="rgba(0,0,0,0.02)" stroke-width="1"/><line x1="1507.6" y1="760.1" x2="1507.6" y2="951.8" stroke="rgba(0,0,0,0.02)" stroke-width="1"/><line x1="1746.1" y1="760.1" x2="1746.1" y2="951.8" stroke="rgba(0,0,0,0.02)" stroke-width="1"/><line x1="1984.5" y1="760.1" x2="1984.5" y2="951.8" stroke="rgba(0,0,0,0.02)" stroke-width="1"/><line x1="2223.0" y1="760.1" x2="2223.0" y2="951.8" stroke="rgba(0,0,0,0.02)" stroke-width="1"/><line x1="649.1" y1="913.5" x2="2221.0" y2="913.5" stroke="rgba(0,0,0,0.03)" stroke-width="1"/><line x1="649.1" y1="875.5" x2="2221.0" y2="875.5" stroke="rgba(0,0,0,0.03)" stroke-width="1"/><line x1="649.1" y1="837.5" x2="2221.0" y2="837.5" stroke="rgba(0,0,0,0.03)" stroke-width="1"/><line x1="649.1" y1="798.5" x2="2221.0" y2="798.5" stroke="rgba(0,0,0,0.03)" stroke-width="1"/><line x1="649.1" y1="951.8" x2="2221.0" y2="951.8" stroke="rgba(60,90,80,0.35)" stroke-width="1.5"/></svg>
<div class="t" style="left:428.90px;width:2000px;text-align:center;top:721.00px;font-size:17.64px;color:#444;font-weight:400;">Cognitive State Distribution (Stacked Probabilities)</div>
<div class="t" style="left:-1352.70px;width:2000px;text-align:right;top:946.00px;font-size:12px;color:#444;font-weight:400;">0%</div>
<div class="t" style="left:-1352.70px;width:2000px;text-align:right;top:908.00px;font-size:12px;color:#444;font-weight:400;">20%</div>
<div class="t" style="left:-1352.70px;width:2000px;text-align:right;top:869.00px;font-size:12px;color:#444;font-weight:400;">40%</div>
<div class="t" style="left:-1352.70px;width:2000px;text-align:right;top:831.00px;font-size:12px;color:#444;font-weight:400;">60%</div>
<div class="t" style="left:-1352.70px;width:2000px;text-align:right;top:793.00px;font-size:12px;color:#444;font-weight:400;">80%</div>
<div class="t" style="left:-1352.70px;width:2000px;text-align:right;top:754.00px;font-size:12px;color:#444;font-weight:400;">100%</div>
<div class="t" style="left:0.00px;top:-12.00px;font-size:14px;color:#444;font-weight:400;left:606.5px;top:856px;transform:translate(-50%,-50%) rotate(-90deg);">Probability</div>
<div class="t" style="left:-207.80px;width:2000px;text-align:center;top:955.00px;font-size:12px;color:#444;font-weight:400;">7</div>
<div class="t" style="left:30.67px;width:2000px;text-align:center;top:955.00px;font-size:12px;color:#444;font-weight:400;">7.5</div>
<div class="t" style="left:269.14px;width:2000px;text-align:center;top:955.00px;font-size:12px;color:#444;font-weight:400;">8</div>
<div class="t" style="left:507.61px;width:2000px;text-align:center;top:955.00px;font-size:12px;color:#444;font-weight:400;">8.5</div>
<div class="t" style="left:746.08px;width:2000px;text-align:center;top:955.00px;font-size:12px;color:#444;font-weight:400;">9</div>
<div class="t" style="left:984.55px;width:2000px;text-align:center;top:955.00px;font-size:12px;color:#444;font-weight:400;">9.5</div>
<div class="t" style="left:1223.02px;width:2000px;text-align:center;top:955.00px;font-size:12px;color:#444;font-weight:400;">10</div>
<div class="t" style="left:435.00px;width:2000px;text-align:center;top:992.00px;font-size:14.59px;color:#444;font-weight:400;">Time (minutes)</div>
<div class="b" style="left:1237.00px;top:1031.50px;width:30.00px;height:6.00px;background:#df824c;"></div>
<svg class="b" style="left:1274.50px;top:1026.50px;" width="12" height="16" viewBox="0 0 12 16"><defs><linearGradient id="lsr" x1="0" y1="0" x2="1" y2="0"><stop offset="0" stop-color="#c91515"/><stop offset="0.45" stop-color="#f23a2a"/><stop offset="1" stop-color="#b80f0f"/></linearGradient></defs><path d="M1.2 13 L1.2 4 Q1.2 0.8 6 0.8 Q10.8 0.8 10.8 4 L10.8 13 Z" fill="url(#lsr)"/><ellipse cx="6" cy="14" rx="5.6" ry="1.8" fill="#9a9a9a"/><path d="M4.8 2.8 L5.4 5 L7.6 3.9 L6.3 6.1 L8.6 6.8 L6.3 7.4 L7.4 9.7 L5.3 8.3 L4.5 10.6 L4 8.3 L1.9 9.2 L3.3 7.3 L1.4 6.2 L3.6 5.9 L2.9 3.8 L4.3 4.9Z" fill="#fff"/></svg>
<div class="t" style="left:1290.70px;top:1029.00px;font-size:12.4px;color:#444;font-weight:400;">Attentional Lapse</div>
<div class="b" style="left:1407.50px;top:1031.50px;width:29.50px;height:6.00px;background:#eab352;"></div>
<svg class="b" style="left:1443.00px;top:1027.00px;" width="15" height="14" viewBox="0 0 15 14"><path d="M7.5 0.5 L14.5 13.5 L0.5 13.5 Z" fill="#fcc21b"/><rect x="6.6" y="4" width="1.8" height="5.5" fill="#222"/><rect x="6.6" y="10.6" width="1.8" height="1.8" fill="#222"/></svg>
<div class="t" style="left:1461.00px;top:1029.00px;font-size:12.4px;color:#444;font-weight:400;">High Load</div>
<div class="b" style="left:1533.00px;top:1031.50px;width:29.60px;height:6.00px;background:#46b392;"></div>
<svg class="b" style="left:1568.00px;top:1026.50px;" width="15" height="15" viewBox="0 0 15 15"><rect x="0.5" y="0.5" width="14" height="14" rx="3" fill="#2dba2d"/><path d="M3.5 7.5 L6.3 10.5 L11.5 4" fill="none" stroke="#fff" stroke-width="2.2"/></svg>
<div class="t" style="left:1586.60px;top:1029.00px;font-size:12.4px;color:#444;font-weight:400;">Normal</div>
<svg class="b" style="left:0.00px;top:0.00px;" width="1" height="1" viewBox="0 0 1 1"><g fill="#c8c8c8"><rect x="2057" y="724" width="16" height="10.5" rx="2"/><rect x="2061" y="721.5" width="7" height="3" rx="1"/></g><circle cx="2065" cy="729" r="2.8" fill="#fff"/><circle cx="2095" cy="726.5" r="5" fill="none" stroke="#6b6b6b" stroke-width="2.2"/><rect x="2092.5" y="724" width="5" height="5" fill="#6b6b6b"/><line x1="2098.5" y1="730" x2="2103.5" y2="735" stroke="#6b6b6b" stroke-width="2.4"/><g stroke="#c8c8c8" stroke-width="1.6" fill="#c8c8c8"><line x1="2115" y1="728" x2="2127" y2="728"/><line x1="2121" y1="722" x2="2121" y2="734"/></g><g fill="#c8c8c8"><path d="M2121 720 l-2.6 3 h5.2z M2121 736 l-2.6 -3 h5.2z M2113 728 l3 -2.6 v5.2z M2129 728 l-3 -2.6 v5.2z"/></g><rect x="2146" y="721" width="14" height="14" fill="#c8c8c8"/><path d="M2153 724 v8 M2149 728 h8" stroke="#fff" stroke-width="2"/><rect x="2170" y="721" width="14" height="14" fill="#c8c8c8"/><path d="M2173 728 h8" stroke="#fff" stroke-width="2"/><g fill="none" stroke="#c8c8c8" stroke-width="1.3"><path d="M2193.5 725 v-4 h4 M2205.5 721 h4 v4 M2209.5 731 v4 h-4 M2197.5 735 h-4 v-4 M2197 724.5 L2206 731.5 M2206 724.5 L2197 731.5"/></g><path d="M2218 728.5 L2225 721.5 L2232 728.5 L2230 728.5 L2230 734 L2220 734 L2220 728.5 Z" fill="#c8c8c8"/><rect x="2249" y="720" width="16" height="16" fill="#3f4f75"/><g fill="#fff"><rect x="2251.5" y="727" width="1.5" height="7"/><rect x="2255" y="729" width="1.5" height="5"/><rect x="2258.5" y="727" width="1.5" height="7"/><rect x="2262" y="729" width="1.5" height="5"/></g><g fill="#69d3b7"><circle cx="2252.2" cy="723" r="0.9"/><circle cx="2255.7" cy="723" r="0.9"/><circle cx="2259.2" cy="723" r="0.9"/><circle cx="2262.7" cy="723" r="0.9"/></g></svg>
<div class="t" style="left:586.00px;top:1104.00px;font-size:29.2px;color:#2f353b;font-weight:400;">Real-time Feature Values</div>
<div class="b" style="left:1046.00px;top:1161.00px;width:775.00px;height:2.00px;background:#d3d3d3;"></div>
<div class="t" style="left:1052.00px;top:1190.00px;font-size:16.14px;color:#333;font-weight:400;">Feature</div>
<div class="t" style="left:1226.60px;top:1170.00px;font-size:16.3px;color:#333;font-weight:400;">Value</div>
<div class="t" style="left:1226.60px;top:1194.00px;font-size:12.5px;color:#333;font-weight:400;">(Live)</div>
<div class="t" style="left:1260.50px;top:1187.00px;font-size:8.5px;color:#333;font-weight:400;font-style:italic;">1</div>
<div class="t" style="left:1302.80px;top:1171.00px;font-size:16.99px;color:#333;font-weight:400;">Literature</div>
<div class="t" style="left:1302.80px;top:1193.00px;font-size:13.48px;color:#333;font-weight:400;">(≈95% CI &amp; links)</div>
<div class="t" style="left:-399.00px;width:2000px;text-align:right;top:1172.00px;font-size:16.6px;color:#333;font-weight:400;">Effect Size</div>
<div class="t" style="left:-399.00px;width:2000px;text-align:right;top:1194.00px;font-size:12.8px;color:#333;font-weight:400;">(Cohen&#x27;s d)</div>
<div class="t" style="left:1612.10px;top:1190.00px;font-size:16.37px;color:#333;font-weight:400;">Status</div>
<div class="t" style="left:759.60px;width:2000px;text-align:center;top:1190.00px;font-size:16.37px;color:#333;font-weight:400;">Trend</div>
<div class="b" style="left:1046.00px;top:1214.00px;width:775.00px;height:2.00px;background:#d3d3d3;"></div>
<svg class="b" style="left:1051.00px;top:1229.00px;" width="21" height="20" viewBox="0 0 21 20"><defs><radialGradient id="tg" cx="40%" cy="40%" r="65%"><stop offset="0" stop-color="#ff5a5a"/><stop offset="1" stop-color="#b3141b"/></radialGradient></defs><ellipse cx="8.8" cy="11.6" rx="8.3" ry="8" fill="url(#tg)"/><ellipse cx="8.8" cy="11.4" rx="6" ry="5.7" fill="#f4f4f4"/><ellipse cx="8.8" cy="11.3" rx="4.1" ry="3.9" fill="#d62a2a"/><ellipse cx="8.8" cy="11.2" rx="2.2" ry="2.1" fill="#f4f4f4"/><circle cx="8.8" cy="11.2" r="1" fill="#d62a2a"/><line x1="9" y1="11" x2="17.5" y2="3.5" stroke="#39b7cf" stroke-width="2.2"/><path d="M15 2.5 L17.3 0.2 L18.2 2.6 L20.6 3.2 L18.4 5.6 Z" fill="#45c3da"/></svg>
<div class="t" style="left:1076.30px;top:1231.00px;font-size:15.69px;color:#333;font-weight:700;">Model Predictions</div>
<div class="b" style="left:1046.00px;top:1258.00px;width:775.00px;height:2.00px;background:#d3d3d3;"></div>
<div class="b" style="left:1221.20px;top:1260.00px;width:76.80px;height:37.00px;background:#e8f5e9;"></div>
<div class="t" style="left:1052.00px;top:1272.00px;font-size:16.6px;color:#333;font-weight:400;">Normal Prob</div>
<div class="t" style="left:1226.60px;top:1271.00px;font-size:16.2px;color:#111;font-weight:700;">44.5%</div>
<div class="b" style="left:1613px;top:1273.30px;width:12.2px;height:12.2px;border-radius:50%;background:#27ae60;"></div>
<div class="t" style="left:1631.30px;top:1272.00px;font-size:16.68px;color:#333;font-weight:400;">Normal</div>
<svg class="b" style="left:0.00px;top:0.00px;" width="1" height="1" viewBox="0 0 1 1"><path d="M1709.0,1280.4 L1710.5,1276.5 L1712.0,1280.5 L1713.5,1275.5 L1715.0,1280.4 L1716.5,1276.0 L1717.9,1279.4 L1719.4,1276.2 L1720.9,1280.2 L1722.4,1276.3 L1723.9,1279.1 L1725.4,1276.9 L1726.9,1281.3 L1728.4,1277.3 L1729.9,1281.0 L1731.4,1277.2 L1732.9,1280.5 L1734.3,1278.2 L1735.8,1281.3 L1737.3,1277.0 L1738.8,1279.6 L1740.3,1277.6 L1741.8,1281.8 L1743.3,1275.6 L1744.8,1282.2 L1746.3,1274.0 L1747.8,1280.0 L1749.3,1276.7 L1750.7,1280.1 L1752.2,1277.0 L1753.7,1282.7 L1755.2,1276.9 L1756.7,1281.9 L1758.2,1275.8 L1759.7,1281.5 L1761.2,1278.0 L1762.7,1281.1 L1764.2,1275.5 L1765.7,1280.2 L1767.1,1276.6 L1768.6,1280.7 L1770.1,1275.6 L1771.6,1279.4 L1773.1,1275.2 L1774.6,1280.1 L1776.1,1278.1 L1777.6,1280.7 L1779.1,1277.9 L1780.6,1281.0 L1782.1,1277.6 L1783.5,1281.2 L1785.0,1277.1 L1786.5,1281.3 L1788.0,1276.8 L1789.5,1280.8 L1791.0,1276.2" fill="none" stroke="#000" stroke-width="1.4" stroke-linejoin="round"/><circle cx="1791.0" cy="1276.2" r="1.6" fill="#000"/><circle cx="1746.3" cy="1274.0" r="1.6" fill="#22e022"/><circle cx="1753.7" cy="1282.7" r="1.6" fill="#a020f0"/></svg>
<div class="t" style="left:1795.00px;top:1275.00px;font-size:6.5px;color:#444;font-weight:400;font-family:"Liberation Mono",monospace;letter-spacing:0.8px;">3.9</div>
<div class="b" style="left:1046.00px;top:1297.00px;width:775.00px;height:1.00px;background:#dcdcdc;"></div>
<div class="b" style="left:1221.20px;top:1298.00px;width:76.80px;height:37.00px;background:#e8f5e9;"></div>
<div class="t" style="left:1052.00px;top:1310.00px;font-size:16.6px;color:#333;font-weight:400;">High Load Prob</div>
<div class="t" style="left:1226.60px;top:1309.00px;font-size:16.2px;color:#111;font-weight:700;">42.6%</div>
<div class="b" style="left:1613px;top:1311.30px;width:12.2px;height:12.2px;border-radius:50%;background:#27ae60;"></div>
<div class="t" style="left:1631.30px;top:1310.00px;font-size:16.68px;color:#333;font-weight:400;">Normal</div>
<svg class="b" style="left:0.00px;top:0.00px;" width="1" height="1" viewBox="0 0 1 1"><path d="M1709.0,1323.5 L1710.5,1323.5 L1712.0,1323.5 L1713.5,1323.5 L1715.0,1323.5 L1716.5,1323.5 L1717.9,1323.5 L1719.4,1323.5 L1720.9,1323.5 L1722.4,1323.5 L1723.9,1323.5 L1725.4,1323.5 L1726.9,1323.5 L1728.4,1323.5 L1729.9,1323.5 L1731.4,1323.5 L1732.9,1323.5 L1734.3,1323.5 L1735.8,1323.5 L1737.3,1323.5 L1738.8,1323.5 L1740.3,1323.5 L1741.8,1323.5 L1743.3,1323.5 L1744.8,1323.5 L1746.3,1323.5 L1747.8,1323.5 L1749.3,1323.5 L1750.7,1323.5 L1752.2,1323.5 L1753.7,1323.5 L1755.2,1323.5 L1756.7,1323.5 L1758.2,1323.5 L1759.7,1323.5 L1761.2,1323.5 L1762.7,1323.5 L1764.2,1323.5 L1765.7,1323.5 L1767.1,1323.5 L1768.6,1323.5 L1770.1,1323.5 L1771.6,1323.5 L1773.1,1323.5 L1774.6,1323.5 L1776.1,1323.5 L1777.6,1323.5 L1779.1,1323.5 L1780.6,1323.5 L1782.1,1323.5 L1783.5,1323.5 L1785.0,1323.5 L1786.5,1323.5 L1788.0,1323.5 L1789.5,1323.5 L1791.0,1310.0" fill="none" stroke="#000" stroke-width="1.4" stroke-linejoin="round"/><circle cx="1791.0" cy="1310.0" r="1.6" fill="#000"/><circle cx="1791.0" cy="1310.0" r="1.6" fill="#22e022"/><circle cx="1709.0" cy="1323.5" r="1.6" fill="#a020f0"/></svg>
<div class="t" style="left:1795.00px;top:1308.00px;font-size:6.5px;color:#444;font-weight:400;font-family:"Liberation Mono",monospace;letter-spacing:0.8px;">0.00</div>
<div class="b" style="left:1046.00px;top:1335.00px;width:775.00px;height:1.00px;background:#dcdcdc;"></div>
<div class="b" style="left:1221.20px;top:1336.00px;width:76.80px;height:37.00px;background:#e8f5e9;"></div>
<div class="t" style="left:1052.00px;top:1348.00px;font-size:16.6px;color:#333;font-weight:400;">Lapse Prob</div>
<div class="t" style="left:1226.60px;top:1347.00px;font-size:16.2px;color:#111;font-weight:700;">12.9%</div>
<div class="b" style="left:1613px;top:1349.30px;width:12.2px;height:12.2px;border-radius:50%;background:#27ae60;"></div>
<div class="t" style="left:1631.30px;top:1348.00px;font-size:16.68px;color:#333;font-weight:400;">Normal</div>
<svg class="b" style="left:0.00px;top:0.00px;" width="1" height="1" viewBox="0 0 1 1"><path d="M1709.0,1358.5 L1710.5,1349.5 L1712.0,1355.7 L1713.5,1351.6 L1715.0,1355.6 L1716.5,1351.5 L1717.9,1357.5 L1719.4,1352.1 L1720.9,1356.2 L1722.4,1349.5 L1723.9,1354.9 L1725.4,1352.3 L1726.9,1354.9 L1728.4,1352.8 L1729.9,1357.3 L1731.4,1352.9 L1732.9,1355.5 L1734.3,1353.7 L1735.8,1357.8 L1737.3,1353.6 L1738.8,1355.8 L1740.3,1351.4 L1741.8,1357.3 L1743.3,1353.7 L1744.8,1357.9 L1746.3,1354.1 L1747.8,1359.6 L1749.3,1354.1 L1750.7,1357.5 L1752.2,1353.3 L1753.7,1357.3 L1755.2,1352.9 L1756.7,1356.2 L1758.2,1351.8 L1759.7,1355.5 L1761.2,1352.0 L1762.7,1358.8 L1764.2,1350.6 L1765.7,1356.7 L1767.1,1351.3 L1768.6,1356.5 L1770.1,1352.7 L1771.6,1356.4 L1773.1,1352.4 L1774.6,1357.3 L1776.1,1354.6 L1777.6,1358.4 L1779.1,1352.8 L1780.6,1356.5 L1782.1,1352.7 L1783.5,1357.7 L1785.0,1354.5 L1786.5,1359.2 L1788.0,1355.6 L1789.5,1358.9 L1791.0,1355.3" fill="none" stroke="#000" stroke-width="1.4" stroke-linejoin="round"/><circle cx="1791.0" cy="1355.3" r="1.6" fill="#000"/><circle cx="1710.5" cy="1349.5" r="1.6" fill="#22e022"/><circle cx="1747.8" cy="1359.6" r="1.6" fill="#a020f0"/></svg>
<div class="t" style="left:1795.00px;top:1354.00px;font-size:6.5px;color:#444;font-weight:400;font-family:"Liberation Mono",monospace;letter-spacing:0.8px;">17.9</div>
<div class="b" style="left:1046.00px;top:1373.00px;width:775.00px;height:2.00px;background:#d3d3d3;"></div>
<svg class="b" style="left:1051.00px;top:1388.00px;" width="21" height="19" viewBox="0 0 21 19"><path d="M3 9.5 C0.5 8 1.5 3.5 4.5 3.5 C5.5 1 9 0.5 10.5 2 C12.5 0.5 16.5 1.2 17 3.8 C20 4.2 21 8.5 19 10.2 C20 13.5 16.5 16 14 15 C13 17.5 10 18 8.5 16.2 C6 17 2.5 15 3 12.5 C1.8 11.8 2 10.5 3 9.5Z" fill="#f29db5"/><path d="M5 6 q2.5 -1.5 4.5 0.5 M11 4 q3 -0.5 4.5 2 M4.5 11 q2.5 1.2 5 -0.8 M11.5 9 q2.5 -1 5 1 M7 13.5 q2.5 1 4.5 -0.5 M12.5 13 q2 0.5 3.5 -1" stroke="#d66a8a" stroke-width="1" fill="none"/><path d="M11 15.5 q0.5 2.5 2.5 3" stroke="#e07a96" stroke-width="1.6" fill="none"/></svg>
<div class="t" style="left:1076.30px;top:1390.00px;font-size:15.69px;color:#333;font-weight:700;">Derived Metrics</div>
<div class="b" style="left:1046.00px;top:1417.00px;width:775.00px;height:2.00px;background:#d3d3d3;"></div>
<div class="b" style="left:1221.20px;top:1419.00px;width:76.80px;height:37.00px;background:#e8f5e9;"></div>
<div class="t" style="left:1052.00px;top:1431.00px;font-size:16.6px;color:#333;font-weight:400;">Grip CV%</div>
<div class="t" style="left:1226.60px;top:1430.00px;font-size:16.2px;color:#111;font-weight:700;">9.3%</div>
<div class="t" style="left:1302.80px;top:1430.00px;font-size:16.5px;color:#333;font-weight:400;">4.08–11.92</div>
<div class="t" style="left:-399.00px;width:2000px;text-align:right;top:1431.00px;font-size:16.6px;color:#333;font-weight:400;">0.67</div>
<div class="b" style="left:1613px;top:1432.30px;width:12.2px;height:12.2px;border-radius:50%;background:#27ae60;"></div>
<div class="t" style="left:1631.30px;top:1431.00px;font-size:16.68px;color:#333;font-weight:400;">Normal</div>
<svg class="b" style="left:0.00px;top:0.00px;" width="1" height="1" viewBox="0 0 1 1"><path d="M1709.0,1440.0 L1710.5,1436.9 L1712.0,1442.0 L1713.5,1436.9 L1715.0,1442.5 L1716.5,1438.4 L1717.9,1441.2 L1719.4,1437.5 L1720.9,1442.7 L1722.4,1437.2 L1723.9,1439.4 L1725.4,1435.0 L1726.9,1439.7 L1728.4,1435.8 L1729.9,1441.5 L1731.4,1434.3 L1732.9,1442.3 L1734.3,1435.8 L1735.8,1440.5 L1737.3,1435.0 L1738.8,1438.7 L1740.3,1434.7 L1741.8,1437.7 L1743.3,1435.1 L1744.8,1440.2 L1746.3,1433.2 L1747.8,1438.6 L1749.3,1435.5 L1750.7,1440.8 L1752.2,1434.3 L1753.7,1439.4 L1755.2,1435.7 L1756.7,1438.9 L1758.2,1433.6 L1759.7,1436.8 L1761.2,1433.6 L1762.7,1438.8 L1764.2,1434.5 L1765.7,1440.3 L1767.1,1437.1 L1768.6,1441.2 L1770.1,1436.6 L1771.6,1441.3 L1773.1,1437.1 L1774.6,1441.6 L1776.1,1437.5 L1777.6,1440.8 L1779.1,1437.6 L1780.6,1443.1 L1782.1,1436.7 L1783.5,1440.7 L1785.0,1437.0 L1786.5,1441.0 L1788.0,1436.7 L1789.5,1439.2 L1791.0,1436.1" fill="none" stroke="#000" stroke-width="1.4" stroke-linejoin="round"/><circle cx="1791.0" cy="1436.1" r="1.6" fill="#000"/><circle cx="1746.3" cy="1433.2" r="1.6" fill="#22e022"/><circle cx="1780.6" cy="1443.1" r="1.6" fill="#a020f0"/></svg>
<div class="t" style="left:1795.00px;top:1435.00px;font-size:6.5px;color:#444;font-weight:400;font-family:"Liberation Mono",monospace;letter-spacing:0.8px;">4.4</div>
<div class="b" style="left:1046.00px;top:1456.00px;width:775.00px;height:1.00px;background:#dcdcdc;"></div>
<div class="b" style="left:1221.20px;top:1457.00px;width:76.80px;height:37.00px;background:#e8f5e9;"></div>
<div class="t" style="left:1052.00px;top:1469.00px;font-size:16.6px;color:#333;font-weight:400;">Time-on-Task</div>
<div class="t" style="left:1226.60px;top:1468.00px;font-size:16.2px;color:#111;font-weight:700;">10.00</div>
<div class="b" style="left:1613px;top:1470.30px;width:12.2px;height:12.2px;border-radius:50%;background:#27ae60;"></div>
<div class="t" style="left:1631.30px;top:1469.00px;font-size:16.68px;color:#333;font-weight:400;">Normal</div>
<svg class="b" style="left:0.00px;top:0.00px;" width="1" height="1" viewBox="0 0 1 1"><path d="M1709.0,1480.3 L1710.5,1475.4 L1712.0,1480.2 L1713.5,1476.8 L1715.0,1481.2 L1716.5,1477.1 L1717.9,1479.9 L1719.4,1474.9 L1720.9,1479.0 L1722.4,1473.4 L1723.9,1477.8 L1725.4,1473.6 L1726.9,1479.1 L1728.4,1472.7 L1729.9,1477.3 L1731.4,1472.6 L1732.9,1476.9 L1734.3,1472.2 L1735.8,1476.6 L1737.3,1473.2 L1738.8,1476.9 L1740.3,1472.4 L1741.8,1475.5 L1743.3,1472.1 L1744.8,1475.9 L1746.3,1471.8 L1747.8,1478.3 L1749.3,1472.5 L1750.7,1476.5 L1752.2,1473.0 L1753.7,1477.6 L1755.2,1473.3 L1756.7,1476.7 L1758.2,1474.2 L1759.7,1477.6 L1761.2,1473.1 L1762.7,1477.5 L1764.2,1471.6 L1765.7,1476.4 L1767.1,1472.1 L1768.6,1476.8 L1770.1,1471.8 L1771.6,1478.2 L1773.1,1473.5 L1774.6,1477.7 L1776.1,1474.0 L1777.6,1477.0 L1779.1,1472.3 L1780.6,1477.2 L1782.1,1475.3 L1783.5,1479.6 L1785.0,1473.9 L1786.5,1479.4 L1788.0,1474.5 L1789.5,1478.0 L1791.0,1473.9" fill="none" stroke="#000" stroke-width="1.4" stroke-linejoin="round"/><circle cx="1791.0" cy="1473.9" r="1.6" fill="#000"/><circle cx="1764.2" cy="1471.6" r="1.6" fill="#22e022"/><circle cx="1715.0" cy="1481.2" r="1.6" fill="#a020f0"/></svg>
<div class="t" style="left:1795.00px;top:1472.00px;font-size:6.5px;color:#444;font-weight:400;font-family:"Liberation Mono",monospace;letter-spacing:0.8px;">15.2</div>
<div class="b" style="left:1046.00px;top:1494.00px;width:775.00px;height:1.00px;background:#dcdcdc;"></div>
<div class="b" style="left:1221.20px;top:1495.00px;width:76.80px;height:37.00px;background:#e8f5e9;"></div>
<div class="t" style="left:1052.00px;top:1507.00px;font-size:16.6px;color:#333;font-weight:400;">Ambient Noise</div>
<div class="t" style="left:1226.60px;top:1506.00px;font-size:16.2px;color:#111;font-weight:700;">66.95</div>
<div class="t" style="left:1302.80px;top:1506.00px;font-size:16.5px;color:#333;font-weight:400;">50.20–69.80</div>
<div class="t" style="left:-399.00px;width:2000px;text-align:right;top:1507.00px;font-size:16.6px;color:#333;font-weight:700;">1.39</div>
<div class="b" style="left:1613px;top:1508.30px;width:12.2px;height:12.2px;border-radius:50%;background:#27ae60;"></div>
<div class="t" style="left:1631.30px;top:1507.00px;font-size:16.68px;color:#333;font-weight:400;">Normal</div>
<svg class="b" style="left:0.00px;top:0.00px;" width="1" height="1" viewBox="0 0 1 1"><path d="M1709.0,1516.6 L1710.5,1510.8 L1712.0,1519.1 L1713.5,1513.3 L1715.0,1517.8 L1716.5,1511.9 L1717.9,1517.0 L1719.4,1511.2 L1720.9,1516.0 L1722.4,1512.2 L1723.9,1515.3 L1725.4,1510.6 L1726.9,1514.9 L1728.4,1511.3 L1729.9,1514.6 L1731.4,1510.2 L1732.9,1516.1 L1734.3,1509.0 L1735.8,1513.9 L1737.3,1509.9 L1738.8,1515.9 L1740.3,1510.8 L1741.8,1514.2 L1743.3,1512.2 L1744.8,1516.6 L1746.3,1509.6 L1747.8,1515.0 L1749.3,1511.1 L1750.7,1516.1 L1752.2,1511.8 L1753.7,1515.3 L1755.2,1512.1 L1756.7,1516.6 L1758.2,1512.9 L1759.7,1517.4 L1761.2,1512.6 L1762.7,1515.0 L1764.2,1511.4 L1765.7,1515.5 L1767.1,1511.9 L1768.6,1515.2 L1770.1,1509.6 L1771.6,1514.7 L1773.1,1512.0 L1774.6,1516.4 L1776.1,1510.6 L1777.6,1514.8 L1779.1,1511.2 L1780.6,1513.9 L1782.1,1508.5 L1783.5,1513.2 L1785.0,1508.5 L1786.5,1510.5 L1788.0,1508.8 L1789.5,1513.9 L1791.0,1508.5" fill="none" stroke="#000" stroke-width="1.4" stroke-linejoin="round"/><circle cx="1791.0" cy="1508.5" r="1.6" fill="#000"/><circle cx="1782.1" cy="1508.5" r="1.6" fill="#22e022"/><circle cx="1712.0" cy="1519.1" r="1.6" fill="#a020f0"/></svg>
<div class="t" style="left:1795.00px;top:1507.00px;font-size:6.5px;color:#444;font-weight:400;font-family:"Liberation Mono",monospace;letter-spacing:0.8px;">38.8</div>
<div class="b" style="left:1046.00px;top:1532.00px;width:775.00px;height:2.00px;background:#d3d3d3;"></div>
<svg class="b" style="left:1052.80px;top:1547.00px;" width="17" height="20" viewBox="0 0 17 20"><rect x="0.5" y="0.5" width="16" height="19" rx="1.2" fill="#dfe6ef" stroke="#c9d2dd" stroke-width="0.8"/><rect x="1.6" y="6.5" width="3.6" height="12" fill="#12b012"/><rect x="6.6" y="10" width="3.6" height="8.5" fill="#d01010"/><rect x="11.6" y="2.2" width="3.6" height="16.3" fill="#1e5fd8"/></svg>
<div class="t" style="left:1076.30px;top:1549.00px;font-size:15.69px;color:#333;font-weight:700;">Primary Biosignals</div>
<div class="b" style="left:1046.00px;top:1576.00px;width:775.00px;height:2.00px;background:#d3d3d3;"></div>
<div class="b" style="left:1221.20px;top:1578.00px;width:76.80px;height:37.00px;background:#f39c12;"></div>
<div class="t" style="left:1052.00px;top:1590.00px;font-size:16.6px;color:#333;font-weight:400;">Pupil Diameter</div>
<div class="t" style="left:1226.60px;top:1589.00px;font-size:16.2px;color:#111;font-weight:700;">3.95 mm</div>
<div class="t" style="left:1302.80px;top:1589.00px;font-size:16.5px;color:#333;font-weight:400;">3.11–3.89</div>
<div class="t" style="left:1302.8px;top:1589.00px;font-size:16.5px;color:transparent;">3.11–3.89&nbsp;<span style="color:#0f9d6e;text-decoration:underline;">DOI</span> <span style="color:#333;">|</span> <span style="color:#0f9d6e;text-decoration:underline;">PubMed</span></div>
<div class="t" style="left:-399.00px;width:2000px;text-align:right;top:1590.00px;font-size:16.6px;color:#333;font-weight:700;">2.25</div>
<svg class="b" style="left:1612.50px;top:1591.80px;" width="13" height="12" viewBox="0 0 13 12"><path d="M6.5 0.5 L12.5 11.5 L0.5 11.5Z" fill="#f39c12"/></svg>
<div class="t" style="left:1628.80px;top:1590.00px;font-size:16.68px;color:#333;font-weight:400;">Elevated</div>
<svg class="b" style="left:0.00px;top:0.00px;" width="1" height="1" viewBox="0 0 1 1"><path d="M1709.0,1604.0 L1791.0,1590.0" fill="none" stroke="#000" stroke-width="1.4" stroke-linejoin="round"/><circle cx="1791.0" cy="1590.0" r="1.6" fill="#000"/><circle cx="1791.0" cy="1590.0" r="1.6" fill="#22e022"/><circle cx="1709.0" cy="1604.0" r="1.6" fill="#a020f0"/></svg>
<div class="t" style="left:1795.00px;top:1588.00px;font-size:6.5px;color:#444;font-weight:400;font-family:"Liberation Mono",monospace;letter-spacing:0.8px;">9.3</div>
<div class="b" style="left:1046.00px;top:1615.00px;width:775.00px;height:1.00px;background:#dcdcdc;"></div>
<div class="b" style="left:1221.20px;top:1616.00px;width:76.80px;height:38.00px;background:#e8f5e9;"></div>
<div class="t" style="left:1052.00px;top:1628.00px;font-size:16.6px;color:#333;font-weight:400;">Phasic Pupil (TEPR)</div>
<div class="t" style="left:1226.60px;top:1627.00px;font-size:16.2px;color:#111;font-weight:700;">0.00 mm</div>
<div class="t" style="left:1302.80px;top:1627.00px;font-size:16.5px;color:#333;font-weight:400;">-0.05–0.35</div>
<div class="t" style="left:1302.8px;top:1627.00px;font-size:16.5px;color:transparent;">-0.05–0.35&nbsp;<span style="color:#0f9d6e;text-decoration:underline;">DOI</span> <span style="color:#333;">|</span> <span style="color:#0f9d6e;text-decoration:underline;">PubMed</span></div>
<div class="t" style="left:-399.00px;width:2000px;text-align:right;top:1628.00px;font-size:16.6px;color:#333;font-weight:400;">-1.50</div>
<div class="b" style="left:1613px;top:1629.30px;width:12.2px;height:12.2px;border-radius:50%;background:#27ae60;"></div>
<div class="t" style="left:1631.30px;top:1628.00px;font-size:16.68px;color:#333;font-weight:400;">Normal</div>
<svg class="b" style="left:0.00px;top:0.00px;" width="1" height="1" viewBox="0 0 1 1"><path d="M1709.0,1642.0 L1791.0,1628.0" fill="none" stroke="#000" stroke-width="1.4" stroke-linejoin="round"/><circle cx="1791.0" cy="1628.0" r="1.6" fill="#000"/><circle cx="1791.0" cy="1628.0" r="1.6" fill="#22e022"/><circle cx="1709.0" cy="1642.0" r="1.6" fill="#a020f0"/></svg>
<div class="t" style="left:1795.00px;top:1626.00px;font-size:6.5px;color:#444;font-weight:400;font-family:"Liberation Mono",monospace;letter-spacing:0.8px;">10.0</div>
<div class="b" style="left:1046.00px;top:1654.00px;width:775.00px;height:1.00px;background:#dcdcdc;"></div>
<div class="b" style="left:1221.20px;top:1655.00px;width:76.80px;height:37.00px;background:#e8f5e9;"></div>
<div class="t" style="left:1052.00px;top:1667.00px;font-size:16.6px;color:#333;font-weight:400;">Blink Rate</div>
<div class="t" style="left:1226.60px;top:1666.00px;font-size:16.2px;color:#111;font-weight:700;">17.87</div>
<div class="t" style="left:1302.80px;top:1666.00px;font-size:16.5px;color:#333;font-weight:400;">11.12–22.88</div>
<div class="t" style="left:1302.8px;top:1666.00px;font-size:16.5px;color:transparent;">11.12–22.88&nbsp;<span style="color:#0f9d6e;text-decoration:underline;">DOI</span> <span style="color:#333;">|</span> <span style="color:#0f9d6e;text-decoration:underline;">PubMed</span></div>
<div class="t" style="left:-399.00px;width:2000px;text-align:right;top:1667.00px;font-size:16.6px;color:#333;font-weight:400;">0.29</div>
<div class="b" style="left:1613px;top:1668.30px;width:12.2px;height:12.2px;border-radius:50%;background:#27ae60;"></div>
<div class="t" style="left:1631.30px;top:1667.00px;font-size:16.68px;color:#333;font-weight:400;">Normal</div>
<svg class="b" style="left:0.00px;top:0.00px;" width="1" height="1" viewBox="0 0 1 1"><path d="M1709.0,1677.1 L1710.5,1678.4 L1712.0,1675.0 L1713.5,1677.4 L1715.0,1676.3 L1716.5,1677.9 L1717.9,1678.0 L1719.4,1678.4 L1720.9,1678.1 L1722.4,1676.9 L1723.9,1674.1 L1725.4,1675.6 L1726.9,1678.9 L1728.4,1672.9 L1729.9,1677.0 L1731.4,1678.3 L1732.9,1677.4 L1734.3,1675.7 L1735.8,1677.8 L1737.3,1675.2 L1738.8,1678.0 L1740.3,1669.6 L1741.8,1667.0 L1743.3,1673.4 L1744.8,1678.8 L1746.3,1678.1 L1747.8,1677.1 L1749.3,1667.9 L1750.7,1677.2 L1752.2,1676.2 L1753.7,1677.7 L1755.2,1676.5 L1756.7,1674.6 L1758.2,1677.6 L1759.7,1675.5 L1761.2,1677.7 L1762.7,1678.9 L1764.2,1677.8 L1765.7,1678.8 L1767.1,1678.2 L1768.6,1678.9 L1770.1,1667.5 L1771.6,1678.6 L1773.1,1677.2 L1774.6,1676.7 L1776.1,1678.5 L1777.6,1668.2 L1779.1,1674.5 L1780.6,1676.2 L1782.1,1676.4 L1783.5,1678.3 L1785.0,1677.4 L1786.5,1678.4 L1788.0,1676.7 L1789.5,1677.1 L1791.0,1678.2" fill="none" stroke="#000" stroke-width="1.4" stroke-linejoin="round"/><circle cx="1791.0" cy="1678.2" r="1.6" fill="#000"/><circle cx="1741.8" cy="1667.0" r="1.6" fill="#22e022"/><circle cx="1762.7" cy="1678.9" r="1.6" fill="#a020f0"/></svg>
<div class="t" style="left:1795.00px;top:1677.00px;font-size:6.5px;color:#444;font-weight:400;font-family:"Liberation Mono",monospace;letter-spacing:0.8px;">66.9</div>
<div class="b" style="left:1046.00px;top:1692.00px;width:775.00px;height:1.00px;background:#dcdcdc;"></div>
<div class="b" style="left:1221.20px;top:1693.00px;width:76.80px;height:37.00px;background:#e8f5e9;"></div>
<div class="t" style="left:1052.00px;top:1705.00px;font-size:16.6px;color:#333;font-weight:400;">Grip Force</div>
<div class="t" style="left:1226.60px;top:1704.00px;font-size:16.2px;color:#111;font-weight:700;">4.37 N</div>
<div class="t" style="left:1302.80px;top:1704.00px;font-size:16.5px;color:#333;font-weight:400;">1.04–4.96</div>
<div class="t" style="left:1302.8px;top:1704.00px;font-size:16.5px;color:transparent;">1.04–4.96&nbsp;<span style="color:#0f9d6e;text-decoration:underline;">DOI</span> <span style="color:#333;">|</span> <span style="color:#0f9d6e;text-decoration:underline;">PubMed</span></div>
<div class="t" style="left:-399.00px;width:2000px;text-align:right;top:1705.00px;font-size:16.6px;color:#333;font-weight:700;">1.37</div>
<div class="b" style="left:1613px;top:1706.30px;width:12.2px;height:12.2px;border-radius:50%;background:#27ae60;"></div>
<div class="t" style="left:1631.30px;top:1705.00px;font-size:16.68px;color:#333;font-weight:400;">Normal</div>
<svg class="b" style="left:0.00px;top:0.00px;" width="1" height="1" viewBox="0 0 1 1"><path d="M1709.0,1713.8 L1710.5,1708.6 L1712.0,1712.6 L1713.5,1708.8 L1715.0,1712.0 L1716.5,1709.2 L1717.9,1712.1 L1719.4,1707.3 L1720.9,1711.5 L1722.4,1708.0 L1723.9,1712.6 L1725.4,1708.5 L1726.9,1711.9 L1728.4,1709.5 L1729.9,1714.3 L1731.4,1709.0 L1732.9,1712.9 L1734.3,1708.0 L1735.8,1712.5 L1737.3,1709.1 L1738.8,1713.4 L1740.3,1708.3 L1741.8,1713.1 L1743.3,1709.0 L1744.8,1712.7 L1746.3,1707.3 L1747.8,1713.8 L1749.3,1709.8 L1750.7,1714.5 L1752.2,1709.6 L1753.7,1713.1 L1755.2,1707.8 L1756.7,1713.1 L1758.2,1711.0 L1759.7,1713.1 L1761.2,1708.0 L1762.7,1713.1 L1764.2,1710.6 L1765.7,1714.0 L1767.1,1711.5 L1768.6,1715.5 L1770.1,1710.8 L1771.6,1715.5 L1773.1,1711.5 L1774.6,1714.8 L1776.1,1710.2 L1777.6,1714.6 L1779.1,1709.3 L1780.6,1714.2 L1782.1,1710.8 L1783.5,1714.8 L1785.0,1709.4 L1786.5,1714.4 L1788.0,1711.1 L1789.5,1714.3 L1791.0,1708.4" fill="none" stroke="#000" stroke-width="1.4" stroke-linejoin="round"/><circle cx="1791.0" cy="1708.4" r="1.6" fill="#000"/><circle cx="1746.3" cy="1707.3" r="1.6" fill="#22e022"/><circle cx="1771.6" cy="1715.5" r="1.6" fill="#a020f0"/></svg>
<div class="t" style="left:1795.00px;top:1707.00px;font-size:6.5px;color:#444;font-weight:400;font-family:"Liberation Mono",monospace;letter-spacing:0.8px;">44.5</div>
<div class="b" style="left:1046.00px;top:1730.00px;width:775.00px;height:1.00px;background:#dcdcdc;"></div>
<div class="b" style="left:1221.20px;top:1731.00px;width:76.80px;height:37.00px;background:#e8f5e9;"></div>
<div class="t" style="left:1052.00px;top:1743.00px;font-size:16.6px;color:#333;font-weight:400;">Tremor RMS (8–12Hz)</div>
<div class="t" style="left:1226.60px;top:1742.00px;font-size:16.2px;color:#111;font-weight:700;">15 μm</div>
<div class="t" style="left:1302.80px;top:1742.00px;font-size:16.5px;color:#333;font-weight:400;">41.20–158.80</div>
<div class="t" style="left:1302.8px;top:1742.00px;font-size:16.5px;color:transparent;">41.20–158.80&nbsp;<span style="color:#0f9d6e;text-decoration:underline;">DOI</span> <span style="color:#333;">|</span> <span style="color:#0f9d6e;text-decoration:underline;">PubMed</span></div>
<div class="t" style="left:-399.00px;width:2000px;text-align:right;top:1743.00px;font-size:16.6px;color:#333;font-weight:400;">-2.83</div>
<div class="b" style="left:1613px;top:1744.30px;width:12.2px;height:12.2px;border-radius:50%;background:#27ae60;"></div>
<div class="t" style="left:1631.30px;top:1743.00px;font-size:16.68px;color:#333;font-weight:400;">Normal</div>
<svg class="b" style="left:0.00px;top:0.00px;" width="1" height="1" viewBox="0 0 1 1"><path d="M1709.0,1751.1 L1710.5,1746.8 L1712.0,1753.0 L1713.5,1748.1 L1715.0,1751.5 L1716.5,1748.0 L1717.9,1751.2 L1719.4,1749.0 L1720.9,1752.2 L1722.4,1746.6 L1723.9,1753.1 L1725.4,1749.1 L1726.9,1752.7 L1728.4,1749.1 L1729.9,1752.7 L1731.4,1749.5 L1732.9,1754.4 L1734.3,1749.8 L1735.8,1753.2 L1737.3,1749.5 L1738.8,1753.6 L1740.3,1747.7 L1741.8,1752.9 L1743.3,1748.1 L1744.8,1753.5 L1746.3,1748.6 L1747.8,1751.6 L1749.3,1746.7 L1750.7,1752.3 L1752.2,1748.4 L1753.7,1752.0 L1755.2,1749.5 L1756.7,1752.2 L1758.2,1747.6 L1759.7,1752.3 L1761.2,1749.4 L1762.7,1753.6 L1764.2,1748.7 L1765.7,1752.2 L1767.1,1747.7 L1768.6,1752.2 L1770.1,1749.0 L1771.6,1753.1 L1773.1,1747.0 L1774.6,1751.7 L1776.1,1747.6 L1777.6,1752.8 L1779.1,1747.7 L1780.6,1751.5 L1782.1,1747.7 L1783.5,1752.2 L1785.0,1747.2 L1786.5,1751.8 L1788.0,1748.2 L1789.5,1752.9 L1791.0,1747.6" fill="none" stroke="#000" stroke-width="1.4" stroke-linejoin="round"/><circle cx="1791.0" cy="1747.6" r="1.6" fill="#000"/><circle cx="1722.4" cy="1746.6" r="1.6" fill="#22e022"/><circle cx="1732.9" cy="1754.4" r="1.6" fill="#a020f0"/></svg>
<div class="t" style="left:1795.00px;top:1746.00px;font-size:6.5px;color:#444;font-weight:400;font-family:"Liberation Mono",monospace;letter-spacing:0.8px;">42.6</div>
<div class="b" style="left:1046.00px;top:1768.00px;width:775.00px;height:1.00px;background:#dcdcdc;"></div>
<div class="b" style="left:1221.20px;top:1769.00px;width:76.80px;height:37.00px;background:#e8f5e9;"></div>
<div class="t" style="left:1052.00px;top:1781.00px;font-size:16.6px;color:#333;font-weight:400;">HRV (RMSSD)</div>
<div class="t" style="left:1226.60px;top:1780.00px;font-size:16.2px;color:#111;font-weight:700;">39 ms</div>
<div class="t" style="left:1302.80px;top:1780.00px;font-size:16.5px;color:#333;font-weight:400;">20.40–59.60</div>
<div class="t" style="left:1302.8px;top:1780.00px;font-size:16.5px;color:transparent;">20.40–59.60&nbsp;<span style="color:#0f9d6e;text-decoration:underline;">DOI</span> <span style="color:#333;">|</span> <span style="color:#0f9d6e;text-decoration:underline;">PubMed</span></div>
<div class="t" style="left:-399.00px;width:2000px;text-align:right;top:1781.00px;font-size:16.6px;color:#333;font-weight:400;">-0.12</div>
<div class="b" style="left:1613px;top:1782.30px;width:12.2px;height:12.2px;border-radius:50%;background:#27ae60;"></div>
<div class="t" style="left:1631.30px;top:1781.00px;font-size:16.68px;color:#333;font-weight:400;">Normal</div>
<svg class="b" style="left:0.00px;top:0.00px;" width="1" height="1" viewBox="0 0 1 1"><path d="M1709.0,1791.4 L1710.5,1787.7 L1712.0,1792.5 L1713.5,1788.4 L1715.0,1793.5 L1716.5,1786.3 L1717.9,1790.3 L1719.4,1785.1 L1720.9,1788.6 L1722.4,1784.1 L1723.9,1787.0 L1725.4,1783.7 L1726.9,1789.6 L1728.4,1785.0 L1729.9,1789.4 L1731.4,1783.8 L1732.9,1789.6 L1734.3,1785.7 L1735.8,1789.7 L1737.3,1786.1 L1738.8,1790.3 L1740.3,1786.9 L1741.8,1790.4 L1743.3,1787.0 L1744.8,1790.5 L1746.3,1786.7 L1747.8,1789.9 L1749.3,1786.4 L1750.7,1790.8 L1752.2,1785.2 L1753.7,1790.0 L1755.2,1785.9 L1756.7,1789.3 L1758.2,1784.0 L1759.7,1789.2 L1761.2,1786.9 L1762.7,1789.1 L1764.2,1785.9 L1765.7,1789.7 L1767.1,1784.0 L1768.6,1789.5 L1770.1,1785.0 L1771.6,1789.1 L1773.1,1785.0 L1774.6,1788.6 L1776.1,1784.1 L1777.6,1787.7 L1779.1,1782.6 L1780.6,1788.5 L1782.1,1785.8 L1783.5,1789.6 L1785.0,1786.3 L1786.5,1791.7 L1788.0,1787.4 L1789.5,1792.2 L1791.0,1786.0" fill="none" stroke="#000" stroke-width="1.4" stroke-linejoin="round"/><circle cx="1791.0" cy="1786.0" r="1.6" fill="#000"/><circle cx="1779.1" cy="1782.6" r="1.6" fill="#22e022"/><circle cx="1715.0" cy="1793.5" r="1.6" fill="#a020f0"/></svg>
<div class="t" style="left:1795.00px;top:1784.00px;font-size:6.5px;color:#444;font-weight:400;font-family:"Liberation Mono",monospace;letter-spacing:0.8px;">12.9</div>
<div class="b" style="left:1046.00px;top:1806.00px;width:775.00px;height:2.00px;background:#d3d3d3;"></div>
<div class="t" style="left:1052.50px;top:1812.00px;font-size:8.5px;color:#333;font-weight:400;font-style:italic;">1</div>
<div class="t" style="left:1059px;top:1813.00px;font-size:15.2px;color:#333;">Colors: <span style="color:#27ae60;">Normal</span> | <span style="color:#f39c12;">Elevated</span> | <span style="color:#e74c3c;">Critical</span></div>
<div class="b" style="left:1046.00px;top:1833.00px;width:775.00px;height:2.00px;background:#a8a8a8;"></div>
<div class="t" style="left:586.00px;top:1847.00px;font-size:25.38px;color:#2b3036;font-weight:400;">Alert Log</div>
<div class="b" style="left:586.00px;top:1891.00px;width:1696.00px;height:36.60px;background:#f8f9fa;"></div>
<div class="t" style="left:594.20px;top:1903.00px;font-size:14.37px;color:#555;font-weight:400;">Time</div>
<div class="t" style="left:705.40px;top:1903.00px;font-size:14.37px;color:#555;font-weight:400;">Alert</div>
<div class="t" style="left:936.00px;top:1903.00px;font-size:14.37px;color:#555;font-weight:400;">Details</div>
<div class="t" style="left:1852.00px;top:1903.00px;font-size:14.37px;color:#555;font-weight:400;">Lapse Prob.</div>
<div class="t" style="left:2043.40px;top:1903.00px;font-size:14.37px;color:#555;font-weight:400;">High Load Prob.</div>
<div class="t" style="left:594.20px;top:1939.00px;font-size:14.98px;color:#222;font-weight:400;">03:48</div>
<svg class="b" style="left:707.00px;top:1936.90px;" width="14" height="18" viewBox="0 0 14 18"><defs><linearGradient id="sr0" x1="0" y1="0" x2="1" y2="0"><stop offset="0" stop-color="#c91515"/><stop offset="0.45" stop-color="#f23a2a"/><stop offset="1" stop-color="#b80f0f"/></linearGradient></defs><path d="M1.3 14.5 L1.3 4.5 Q1.3 0.8 7 0.8 Q12.7 0.8 12.7 4.5 L12.7 14.5 Z" fill="url(#sr0)"/><ellipse cx="7" cy="15.6" rx="6.6" ry="2" fill="#9a9a9a"/><path d="M5.5 3 L6.2 5.6 L8.8 4.3 L7.3 6.8 L10 7.6 L7.3 8.3 L8.6 11 L6.1 9.4 L5.2 12 L4.6 9.4 L2.2 10.4 L3.8 8.2 L1.6 7 L4.2 6.6 L3.4 4.2 L5 5.5Z" fill="#fff"/></svg>
<div class="t" style="left:727.70px;top:1940.00px;font-size:14.0px;color:#222;font-weight:400;">LAPSE</div>
<div class="t" style="left:936.00px;top:1939.00px;font-size:14.98px;color:#222;font-weight:400;">Attentional Lapse probability (33.5%) exceeded threshold (30.0%)</div>
<div class="t" style="left:1852.00px;top:1939.00px;font-size:14.98px;color:#222;font-weight:400;">33.5%</div>
<div class="t" style="left:2043.40px;top:1939.00px;font-size:14.98px;color:#222;font-weight:400;">1.5%</div>
<div class="b" style="left:586.00px;top:1964.65px;width:1696.00px;height:37.05px;background:#f2f7f6;"></div>
<div class="t" style="left:594.20px;top:1976.00px;font-size:14.98px;color:#222;font-weight:400;">03:49</div>
<svg class="b" style="left:704.90px;top:1974.65px;" width="18.5" height="16" viewBox="0 0 18.5 16"><path d="M9.25 0.5 L18 15.5 L0.5 15.5 Z" fill="#fcc21b"/><rect x="8.3" y="4.5" width="1.9" height="6.5" rx="0.9" fill="#222"/><rect x="8.3" y="12.2" width="1.9" height="1.9" rx="0.9" fill="#222"/></svg>
<div class="t" style="left:727.70px;top:1977.00px;font-size:14.0px;color:#222;font-weight:400;">HIGH LOAD</div>
<div class="t" style="left:936.00px;top:1976.00px;font-size:14.98px;color:#222;font-weight:400;">High Load probability (75.6%) exceeded threshold (60.0%)</div>
<div class="t" style="left:1852.00px;top:1976.00px;font-size:14.98px;color:#222;font-weight:400;">11.7%</div>
<div class="t" style="left:2043.40px;top:1976.00px;font-size:14.98px;color:#222;font-weight:400;">75.6%</div>
<div class="t" style="left:594.20px;top:2013.00px;font-size:14.98px;color:#222;font-weight:400;">03:49</div>
<svg class="b" style="left:704.90px;top:2011.70px;" width="18.5" height="16" viewBox="0 0 18.5 16"><path d="M9.25 0.5 L18 15.5 L0.5 15.5 Z" fill="#fcc21b"/><rect x="8.3" y="4.5" width="1.9" height="6.5" rx="0.9" fill="#222"/><rect x="8.3" y="12.2" width="1.9" height="1.9" rx="0.9" fill="#222"/></svg>
<div class="t" style="left:727.70px;top:2014.00px;font-size:14.0px;color:#222;font-weight:400;">HIGH LOAD</div>
<div class="t" style="left:936.00px;top:2013.00px;font-size:14.98px;color:#222;font-weight:400;">High Load probability (63.8%) exceeded threshold (60.0%)</div>
<div class="t" style="left:1852.00px;top:2013.00px;font-size:14.98px;color:#222;font-weight:400;">4.3%</div>
<div class="t" style="left:2043.40px;top:2013.00px;font-size:14.98px;color:#222;font-weight:400;">63.8%</div>
<div class="b" style="left:586.00px;top:2038.75px;width:1696.00px;height:37.05px;background:#f2f7f6;"></div>
<div class="t" style="left:594.20px;top:2050.00px;font-size:14.98px;color:#222;font-weight:400;">03:51</div>
<svg class="b" style="left:707.00px;top:2048.05px;" width="14" height="18" viewBox="0 0 14 18"><defs><linearGradient id="sr3" x1="0" y1="0" x2="1" y2="0"><stop offset="0" stop-color="#c91515"/><stop offset="0.45" stop-color="#f23a2a"/><stop offset="1" stop-color="#b80f0f"/></linearGradient></defs><path d="M1.3 14.5 L1.3 4.5 Q1.3 0.8 7 0.8 Q12.7 0.8 12.7 4.5 L12.7 14.5 Z" fill="url(#sr3)"/><ellipse cx="7" cy="15.6" rx="6.6" ry="2" fill="#9a9a9a"/><path d="M5.5 3 L6.2 5.6 L8.8 4.3 L7.3 6.8 L10 7.6 L7.3 8.3 L8.6 11 L6.1 9.4 L5.2 12 L4.6 9.4 L2.2 10.4 L3.8 8.2 L1.6 7 L4.2 6.6 L3.4 4.2 L5 5.5Z" fill="#fff"/></svg>
<div class="t" style="left:727.70px;top:2051.00px;font-size:14.0px;color:#222;font-weight:400;">LAPSE</div>
<div class="t" style="left:936.00px;top:2050.00px;font-size:14.98px;color:#222;font-weight:400;">Attentional Lapse probability (48.8%) exceeded threshold (30.0%)</div>
<div class="t" style="left:1852.00px;top:2050.00px;font-size:14.98px;color:#222;font-weight:400;">48.8%</div>
<div class="t" style="left:2043.40px;top:2050.00px;font-size:14.98px;color:#222;font-weight:400;">0.0%</div>
<div class="t" style="left:594.20px;top:2087.00px;font-size:14.98px;color:#222;font-weight:400;">03:52</div>
<svg class="b" style="left:707.00px;top:2085.10px;" width="14" height="18" viewBox="0 0 14 18"><defs><linearGradient id="sr4" x1="0" y1="0" x2="1" y2="0"><stop offset="0" stop-color="#c91515"/><stop offset="0.45" stop-color="#f23a2a"/><stop offset="1" stop-color="#b80f0f"/></linearGradient></defs><path d="M1.3 14.5 L1.3 4.5 Q1.3 0.8 7 0.8 Q12.7 0.8 12.7 4.5 L12.7 14.5 Z" fill="url(#sr4)"/><ellipse cx="7" cy="15.6" rx="6.6" ry="2" fill="#9a9a9a"/><path d="M5.5 3 L6.2 5.6 L8.8 4.3 L7.3 6.8 L10 7.6 L7.3 8.3 L8.6 11 L6.1 9.4 L5.2 12 L4.6 9.4 L2.2 10.4 L3.8 8.2 L1.6 7 L4.2 6.6 L3.4 4.2 L5 5.5Z" fill="#fff"/></svg>
<div class="t" style="left:727.70px;top:2088.00px;font-size:14.0px;color:#222;font-weight:400;">LAPSE</div>
<div class="t" style="left:936.00px;top:2087.00px;font-size:14.98px;color:#222;font-weight:400;">Attentional Lapse probability (37.6%) exceeded threshold (30.0%)</div>
<div class="t" style="left:1852.00px;top:2087.00px;font-size:14.98px;color:#222;font-weight:400;">37.6%</div>
<div class="t" style="left:2043.40px;top:2087.00px;font-size:14.98px;color:#222;font-weight:400;">0.0%</div>
<div class="b" style="left:1857.40px;top:2137.30px;width:424.20px;height:36.30px;border:1px solid #dee2e6;border-radius:4px;background:#fff;"></div>
<div class="t" style="left:901.40px;width:2000px;text-align:center;top:2148.00px;font-size:15.69px;color:#0f9d6e;font-weight:400;">Previous</div>
<div class="b" style="left:1945.40px;top:2137.80px;width:1.00px;height:35.30px;background:#dee2e6;"></div>
<div class="t" style="left:960.80px;width:2000px;text-align:center;top:2148.00px;font-size:15.69px;color:#0f9d6e;font-weight:400;">1</div>
<div class="b" style="left:1976.20px;top:2137.80px;width:38.30px;height:35.30px;background:#e9ecef;"></div>
<div class="b" style="left:1976.20px;top:2137.80px;width:1.00px;height:35.30px;background:#dee2e6;"></div>
<div class="t" style="left:995.35px;width:2000px;text-align:center;top:2148.00px;font-size:15.69px;color:#555;font-weight:400;">...</div>
<div class="b" style="left:2014.50px;top:2137.80px;width:1.00px;height:35.30px;background:#dee2e6;"></div>
<div class="t" style="left:1034.15px;width:2000px;text-align:center;top:2148.00px;font-size:15.69px;color:#0f9d6e;font-weight:400;">21</div>
<div class="b" style="left:2053.80px;top:2137.30px;width:44.90px;height:36.30px;background:#009e73;"></div>
<div class="b" style="left:2053.80px;top:2137.80px;width:1.00px;height:35.30px;background:#dee2e6;"></div>
<div class="t" style="left:1076.25px;width:2000px;text-align:center;top:2148.00px;font-size:15.69px;color:#000;font-weight:400;">22</div>
<div class="b" style="left:2098.70px;top:2137.80px;width:1.00px;height:35.30px;background:#dee2e6;"></div>
<div class="t" style="left:1120.50px;width:2000px;text-align:center;top:2148.00px;font-size:15.69px;color:#0f9d6e;font-weight:400;">23</div>
<div class="b" style="left:2142.30px;top:2137.80px;width:38.10px;height:35.30px;background:#e9ecef;"></div>
<div class="b" style="left:2142.30px;top:2137.80px;width:1.00px;height:35.30px;background:#dee2e6;"></div>
<div class="t" style="left:1161.35px;width:2000px;text-align:center;top:2148.00px;font-size:15.69px;color:#555;font-weight:400;">...</div>
<div class="b" style="left:2180.40px;top:2137.80px;width:1.00px;height:35.30px;background:#dee2e6;"></div>
<div class="t" style="left:1201.50px;width:2000px;text-align:center;top:2148.00px;font-size:15.69px;color:#0f9d6e;font-weight:400;">78</div>
<div class="b" style="left:2222.60px;top:2137.80px;width:1.00px;height:35.30px;background:#dee2e6;"></div>
<div class="t" style="left:1252.10px;width:2000px;text-align:center;top:2148.00px;font-size:15.69px;color:#0f9d6e;font-weight:400;">Next</div>
</body></html>
